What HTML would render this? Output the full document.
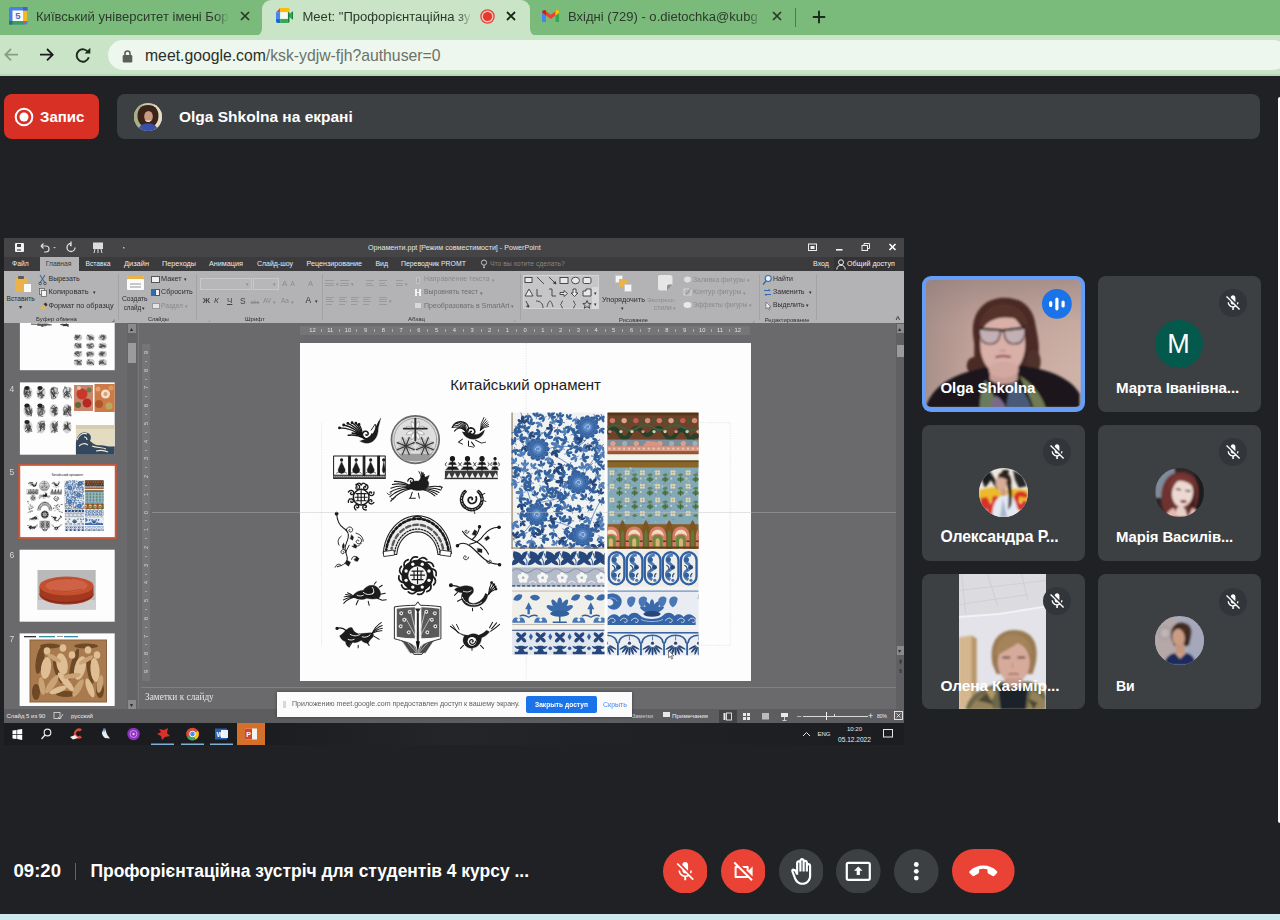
<!DOCTYPE html>
<html lang="uk">
<head>
<meta charset="utf-8">
<title>Meet</title>
<style>
*{box-sizing:border-box;margin:0;padding:0}
html,body{width:1280px;height:920px;overflow:hidden;background:#202124;font-family:"Liberation Sans",sans-serif}
.abs,.a{position:absolute}
#tabs{left:0;top:0;width:1280px;height:36px;background:#7aba7b}
#toolbar{left:0;top:35px;width:1280px;height:41px;background:#c9e4c6;border-bottom:2.5px solid #b7dab4}
#acttab{left:262px;top:0;width:268px;height:36px;background:#c9e4c6;border-radius:9px 9px 0 0}
.tabtxt{top:8px;font-size:13.05px;line-height:17px;color:#2c3a2c;white-space:nowrap;overflow:hidden}
#url{left:108px;top:40px;width:1180px;height:30px;border-radius:15px;background:#eef7ed}
#urltxt{left:145px;top:45.5px;font-size:15.75px;line-height:20px;color:#2a2f2a;white-space:nowrap}
#urltxt span{color:#6a726a}
#main{left:0;top:76px;width:1280px;height:837px;background:#202124}
#bottomstrip{left:0;top:914.3px;width:1280px;height:6px;background:#cde8ef}
#rightstrip{left:1278px;top:96.5px;width:3px;height:726.5px;background:#fff;border-radius:2px 0 0 2px}
#rec{left:4px;top:94px;width:95px;height:45px;border-radius:8px;background:#d93025}
#pill{left:117px;top:94px;width:1143px;height:45px;border-radius:8px;background:#3c4043}
.w{color:#fff;font-weight:bold;white-space:nowrap}
/* powerpoint */
#ppt{left:4px;top:238px;width:900px;height:507px;background:#6a696b;overflow:hidden}
#pptin{position:absolute;left:0;top:0;width:900px;height:507px;filter:blur(.45px)}
#ppt .a{white-space:nowrap}
.t6{font-size:6.6px;color:#2b2b2b;line-height:8px}
.t6w{font-size:6.6px;color:#e8e8e8;line-height:8px}
.t6g{font-size:6.6px;color:#8d8c8e;line-height:8px}
.tile{background:#3c4043;border-radius:8px;overflow:hidden}
.tname{color:#fff;font-weight:bold;font-size:14.5px;white-space:nowrap;letter-spacing:-0.1px}
.mic{width:28px;height:28px;border-radius:14px;background:#2f3235}
.cb{width:44px;height:44px;border-radius:22px}
</style>
</head>
<body>
<div class="abs" id="tabs"></div>
<div class="abs" id="toolbar"></div>
<div class="abs" id="acttab"></div>
<svg class="abs" style="left:254px;top:27px" width="284" height="9" viewBox="0 0 284 9"><path d="M0 9c5 0 8-3 8-8v8zM284 9c-5 0-8-3-8-8v8z" fill="#c9e4c6"/></svg>
<div class="abs tabtxt" style="left:36px;width:193px;-webkit-mask-image:linear-gradient(90deg,#000 180px,transparent 193px)">Київський університет імені Бор</div>
<div class="abs tabtxt" style="left:302.500px;width:170px;-webkit-mask-image:linear-gradient(90deg,#000 155px,transparent 169px)">Meet: "Профорієнтаційна зу</div>
<div class="abs tabtxt" style="left:568px;width:194px;-webkit-mask-image:linear-gradient(90deg,#000 180px,transparent 193px)">Вхідні (729) - o.dietochka@kubg</div>
<!-- calendar favicon -->
<svg class="abs" style="left:9px;top:7px" width="18.500" height="17.500" viewBox="0 0 18.500 17.500"><rect x="0" y="0" width="18.500" height="17.500" rx="1.500" fill="#4a80e4"/><rect x="14" y="3.500" width="4.500" height="10.500" fill="#f2b924"/><rect x="0" y="14" width="14" height="3.500" fill="#36a05c"/><path d="M14 14h4.500l-4.500 3.500z" fill="#e94c3c"/><rect x="0" y="14" width="3.500" height="3.500" fill="#2a7a48"/><rect x="14" y="0" width="4.500" height="3.500" fill="#3a68c4"/><rect x="3.500" y="3.500" width="10.500" height="10.500" fill="#fbfbfb"/><text x="8.800" y="12.300" font-size="9.500" font-weight="bold" fill="#4a70c0" text-anchor="middle" font-family="Liberation Sans,sans-serif">5</text></svg>
<!-- close x's -->
<svg class="abs" style="left:240px;top:11px" width="10" height="10" viewBox="0 0 10 10"><path d="M1 1l8 8M9 1l-8 8" stroke="#263826" stroke-width="1.700"/></svg>
<svg class="abs" style="left:506px;top:11px" width="10" height="10" viewBox="0 0 10 10"><path d="M1 1l8 8M9 1l-8 8" stroke="#1c241c" stroke-width="1.800"/></svg>
<svg class="abs" style="left:772px;top:11px" width="10" height="10" viewBox="0 0 10 10"><path d="M1 1l8 8M9 1l-8 8" stroke="#263826" stroke-width="1.700"/></svg>
<!-- meet favicon -->
<svg class="abs" style="left:275.500px;top:8px" width="17" height="15" viewBox="0 0 17 15"><path d="M0 4.200L4.200 0v4.200z" fill="#e94335"/><rect x="4.200" y="0" width="7.600" height="4.200" fill="#fbbc04"/><path d="M11.800 0c1 0 1.700.7 1.700 1.700v2.500h-1.700z" fill="#fbbc04"/><rect x="0" y="4.200" width="4.200" height="6.600" fill="#4285f4"/><path d="M0 10.800h4.200v4.200h-2.500c-1 0-1.700-.7-1.700-1.700z" fill="#1967d2"/><rect x="4.200" y="10.800" width="7.600" height="4.200" fill="#34a853"/><path d="M11.800 4.200h1.700v2l3-2.600c.3-.2.500-.1.500.3v7.200c0 .4-.2.500-.5.300l-3-2.600v4.500c0 1-.7 1.700-1.700 1.700z" fill="#188038"/><rect x="4.200" y="4.200" width="7.600" height="6.600" fill="#f4f9f2"/><path d="M13.500 6.200l2.500-2v6.600l-2.500-2z" fill="#34a853"/></svg>
<!-- rec dot -->
<svg class="abs" style="left:479.500px;top:8.500px" width="15" height="15" viewBox="0 0 15 15"><circle cx="7.500" cy="7.500" r="6.600" fill="#f2c9c0" stroke="#e0483a" stroke-width="1.300"/><circle cx="7.500" cy="7.500" r="4.600" fill="#e8382c"/></svg>
<!-- gmail favicon -->
<svg class="abs" style="left:541.500px;top:9.800px" width="17.500" height="12.500" viewBox="0 0 17.500 12.500"><path d="M0 2.500v8.500c0 .8.600 1.500 1.500 1.500h2.500V5.500z" fill="#4285f4"/><path d="M17.500 2.500v8.500c0 .8-.6 1.500-1.500 1.500h-2.500V5.500z" fill="#34a853"/><path d="M4 5.500V1.200l4.750 3.600 4.750-3.600v4.300l-4.750 3.600z" fill="#ea4335"/><path d="M0 2.500c0-2 2.200-3.100 3.700-1.900l.3.600v4.300l-4-3z" fill="#c5221f"/><path d="M17.500 2.500c0-2-2.200-3.100-3.700-1.900l-.3.600v4.300l4-3z" fill="#fbbc04"/></svg>
<div class="abs" style="left:795px;top:8px;width:1px;height:19px;background:#4c7a4c"></div>
<svg class="abs" style="left:812px;top:9.500px" width="14" height="14" viewBox="0 0 14 14"><path d="M7 .8v12.400M.8 7h12.400" stroke="#1c2a1c" stroke-width="1.900"/></svg>
<!-- nav -->
<svg class="abs" style="left:0;top:43px" width="100" height="24" viewBox="0 0 100 24" fill="none" stroke-width="1.800"><path d="M18 11.700H5.500M11 6l-5.700 5.700L11 17.400" stroke="#8a9c8a"/><path d="M40 11.700h12.500M47 6l5.700 5.700L47 17.400" stroke="#1c1c1c"/><path d="M88.300 9.500a6.200 6.200 0 1 0 .5 4.800" stroke="#1c2a1c" stroke-width="1.900"/><path d="M90.300 4.800v5.700h-5.700z" fill="#1c2a1c" stroke="none"/></svg>
<div class="abs" id="url"></div>
<svg class="abs" style="left:121.500px;top:49.500px" width="11" height="13" viewBox="0 0 11 13"><rect x=".7" y="5" width="9.600" height="7.500" rx="1.200" fill="#5a5f5a"/><path d="M3 5.500v-2a2.500 2.500 0 0 1 5 0v2" fill="none" stroke="#5a5f5a" stroke-width="1.600"/></svg>
<div class="abs" id="urltxt">meet.google.com<span>/ksk-ydjw-fjh?authuser=0</span></div>
<div class="abs" id="main"></div>
<div class="abs" id="bottomstrip"></div>
<div class="abs" id="rightstrip"></div>
<div class="abs" id="rec"></div>
<svg class="abs" style="left:14.200px;top:107.200px" width="20" height="20" viewBox="0 0 20 20"><circle cx="10" cy="10" r="8.300" fill="none" stroke="#fff" stroke-width="2"/><circle cx="10" cy="10" r="4.500" fill="#fff"/></svg>
<div class="abs w" style="left:40px;top:107.800px;font-size:15px;line-height:18px">Запис</div>
<div class="abs" id="pill"></div>
<svg class="abs" style="left:133.800px;top:102.700px;border-radius:50%" width="28" height="28" viewBox="0 0 28 28"><rect width="28" height="28" fill="#cfc6b0"/><rect x="0" y="0" width="9" height="28" fill="#a8b08a"/><rect x="20" y="0" width="8" height="28" fill="#e6dcc8"/><path d="M4 17c-2-9 2-15 10-15s12 6 10 15c-1 3-3 5-4 6H8c-1-1-3-3-4-6z" fill="#3a2418"/><ellipse cx="14.500" cy="13.500" rx="4.300" ry="5.600" fill="#c99a80"/><path d="M4 28c1-5 4-7 8-7.500h4c4 .5 7 2.500 8 7.500z" fill="#3a4fa8"/><path d="M11.500 17.500c1.500 1 3.500 1 5 0" stroke="#fff" stroke-width="1" fill="none"/></svg>
<div class="abs w" style="left:179px;top:107.700px;font-size:15.500px;line-height:18px">Olga Shkolna на екрані</div>
<div class="abs" id="ppt"><div id="pptin">
<div class="a" style="left:0.0px;top:0.0px;width:900.0px;height:19.0px;background:#454446;"></div>
<div class="a" style="left:0.0px;top:19.0px;width:900.0px;height:14.0px;background:#3b3a3c;"></div>
<div class="a" style="left:0.0px;top:33.0px;width:900.0px;height:52.0px;background:#b3b2b4;"></div>
<div class="a" style="left:10.5px;top:5.0px;width:9.0px;height:8.5px;background:#f2f2f2;border-radius:1px"></div>
<div class="a" style="left:12.8px;top:6.0px;width:4.5px;height:2.6px;background:#454446;"></div>
<div class="a" style="left:12.8px;top:10.6px;width:4.5px;height:2.9px;background:#8a898b;"></div>
<svg class="a" style="left:32px;top:3px" width="95" height="13" viewBox="0 0 95 13"><path d="M5 5h5a3 3 0 0 1 0 6h-2 M5 5l2.5-2.5M5 5l2.5 2.5" fill="none" stroke="#ddd" stroke-width="1.2"/><path d="M17 6l1.5 1.5L20 6z" fill="#bbb"/><path d="M39 6.5a4 4 0 1 1-4-4M35 0.5v4h-1" fill="none" stroke="#ddd" stroke-width="1.3"/><rect x="57" y="1.5" width="10" height="6.5" fill="#ddd"/><path d="M59 8l-1 4M65 8l1 4M62 8v4" stroke="#ddd" stroke-width="1"/><rect x="87" y="6" width="1.5" height="1.5" fill="#bbb"/></svg>
<div class="a" style="left:364.0px;top:4.5px;font-size:7.14px;line-height:10px;color:#e4e4e4;">Орнаменти.ppt [Режим совместимости] - PowerPoint</div>
<svg class="a" style="left:800px;top:3px" width="96" height="13" viewBox="0 0 96 13"><rect x="4.5" y="3" width="8" height="6.5" fill="none" stroke="#eee" stroke-width="1"/><rect x="6.5" y="5" width="4" height="3" fill="#eee"/><rect x="32" y="8" width="6.5" height="1.6" fill="#f4f4f4"/><rect x="58" y="4.5" width="5.5" height="5" fill="none" stroke="#eee" stroke-width="1"/><path d="M60 4.5v-2h5.5v5h-2" fill="none" stroke="#eee" stroke-width="1"/><path d="M85.5 3l6 6M91.5 3l-6 6" stroke="#fff" stroke-width="1.6"/></svg>
<div class="a" style="left:36.0px;top:19.0px;width:38.5px;height:14.0px;background:#b3b2b4;"></div>
<div class="a" style="left:8.0px;top:21.3px;font-size:6.75px;line-height:10px;color:#ececec;">Файл</div>
<div class="a" style="left:81.5px;top:21.3px;font-size:6.73px;line-height:10px;color:#ececec;">Вставка</div>
<div class="a" style="left:120.0px;top:21.3px;font-size:7.44px;line-height:10px;color:#ececec;">Дизайн</div>
<div class="a" style="left:158.0px;top:21.3px;font-size:7.25px;line-height:10px;color:#ececec;">Переходы</div>
<div class="a" style="left:205.0px;top:21.3px;font-size:7.24px;line-height:10px;color:#ececec;">Анимация</div>
<div class="a" style="left:253.0px;top:21.3px;font-size:6.94px;line-height:10px;color:#ececec;">Слайд-шоу</div>
<div class="a" style="left:302.5px;top:21.3px;font-size:7.19px;line-height:10px;color:#ececec;">Рецензирование</div>
<div class="a" style="left:371.5px;top:21.3px;font-size:6.91px;line-height:10px;color:#ececec;">Вид</div>
<div class="a" style="left:397.0px;top:21.3px;font-size:6.89px;line-height:10px;color:#ececec;">Переводчик PROMT</div>
<div class="a" style="left:41.7px;top:21.3px;font-size:6.78px;line-height:10px;color:#3a3a3a;">Главная</div>
<div class="a" style="left:486.0px;top:21.3px;font-size:6.78px;line-height:10px;color:#858486;">Что вы хотите сделать?</div>
<svg class="a" style="left:476px;top:21px" width="8" height="11" viewBox="0 0 8 11"><circle cx="4" cy="3.6" r="2.6" fill="none" stroke="#cfcfcf" stroke-width="0.9"/><path d="M3 7h2M3 8.6h2" stroke="#cfcfcf" stroke-width="0.9"/></svg>
<div class="a" style="left:809.0px;top:21.3px;font-size:7.07px;line-height:10px;color:#ececec;">Вход</div>
<div class="a" style="left:829.5px;top:19.0px;width:70.5px;height:14.0px;background:#333234;"></div>
<svg class="a" style="left:832px;top:20.5px" width="10" height="11" viewBox="0 0 10 11"><circle cx="5" cy="3.3" r="2.5" fill="none" stroke="#f0f0f0" stroke-width="1"/><path d="M0.8 10.5c0-3 2-4.3 4.2-4.3s4.2 1.300 4.200 4.300" fill="none" stroke="#f0f0f0" stroke-width="1"/></svg>
<div class="a" style="left:843.0px;top:21.3px;font-size:7.14px;line-height:10px;color:#f4f4f4;">Общий доступ</div>
<div class="a" style="left:114.0px;top:36.0px;width:1.0px;height:46.0px;background:#a3a2a4;"></div>
<div class="a" style="left:192.4px;top:36.0px;width:1.0px;height:46.0px;background:#a3a2a4;"></div>
<div class="a" style="left:317.5px;top:36.0px;width:1.0px;height:46.0px;background:#a3a2a4;"></div>
<div class="a" style="left:516.0px;top:36.0px;width:1.0px;height:46.0px;background:#a3a2a4;"></div>
<div class="a" style="left:754.6px;top:36.0px;width:1.0px;height:46.0px;background:#a3a2a4;"></div>
<div class="a" style="left:812.0px;top:36.0px;width:1.0px;height:46.0px;background:#a3a2a4;"></div>
<div class="a" style="left:11.0px;top:39.5px;width:11.5px;height:14.0px;background:#e9b34a;border-radius:1.5px"></div>
<div class="a" style="left:14.0px;top:37.5px;width:5.5px;height:3.0px;background:#5a5a5a;border-radius:1px"></div>
<div class="a" style="left:19.5px;top:45.5px;width:7.0px;height:8.5px;background:#fafafa;"></div>
<div class="a" style="left:2.5px;top:55.8px;font-size:6.65px;line-height:10px;color:#2e2d2f;">Вставить</div>
<div class="a" style="left:14.5px;top:63.5px;font-size:6px;line-height:10px;color:#2e2d2f;">▾</div>
<svg class="a" style="left:34px;top:36px" width="11" height="38" viewBox="0 0 11 38"><path d="M2 1l5 8M7 1l-5 8" stroke="#3a6ea5" stroke-width="1.1"/><circle cx="2.200" cy="9.500" r="1.300" fill="none" stroke="#444" stroke-width=".8"/><circle cx="7" cy="9.500" r="1.300" fill="none" stroke="#444" stroke-width=".8"/><rect x="1.500" y="14.500" width="5" height="6" fill="#e6e6e6" stroke="#555" stroke-width=".7"/><rect x="3.500" y="16.500" width="5" height="6" fill="#f4f4f4" stroke="#555" stroke-width=".7"/><path d="M2 35l4-4 2 2-3 3z" fill="#e9b34a"/><path d="M5.500 30l2.500-1.500 1.500 2.500-1.500 1.500z" fill="#333"/></svg>
<div class="a" style="left:44.5px;top:36.4px;font-size:7.02px;line-height:10px;color:#2e2d2f;">Вырезать</div>
<div class="a" style="left:44.5px;top:49.2px;font-size:7.45px;line-height:10px;color:#2e2d2f;">Копировать</div>
<div class="a" style="left:88.5px;top:49.2px;font-size:5px;line-height:10px;color:#2e2d2f;">▾</div>
<div class="a" style="left:44.5px;top:62.6px;font-size:7.27px;line-height:10px;color:#2e2d2f;">Формат по образцу</div>
<div class="a" style="left:32.0px;top:75.5px;font-size:6.03px;line-height:10px;color:#2e2d2f;">Буфер обмена</div>
<div class="a" style="left:108.0px;top:75.8px;font-size:6px;line-height:10px;color:#2e2d2f;">⌟</div>
<div class="a" style="left:123.0px;top:38.0px;width:16.5px;height:13.5px;background:#fbfbfb;border-radius:1px;box-shadow:inset 0 3px 0 #e9b34a"></div>
<div class="a" style="left:125.5px;top:45.0px;width:11.5px;height:1.5px;background:#c8c8c8;"></div>
<div class="a" style="left:125.5px;top:48.0px;width:11.5px;height:1.5px;background:#c8c8c8;"></div>
<div class="a" style="left:118.0px;top:55.8px;font-size:6.74px;line-height:10px;color:#2e2d2f;">Создать</div>
<div class="a" style="left:119.7px;top:64.5px;font-size:6.29px;line-height:10px;color:#2e2d2f;">слайд</div>
<div class="a" style="left:138.0px;top:64.5px;font-size:5px;line-height:10px;color:#2e2d2f;">▾</div>
<div class="a" style="left:147.0px;top:38.0px;width:9.0px;height:7.0px;background:#f0f0f0;border:0.8px solid #555"></div>
<div class="a" style="left:147.0px;top:51.0px;width:4.0px;height:7.0px;background:#2f6db0;"></div>
<div class="a" style="left:151.0px;top:50.5px;width:5.0px;height:7.0px;background:#f0f0f0;border:0.8px solid #555"></div>
<div class="a" style="left:148.0px;top:64.5px;width:8.0px;height:6.0px;background:#e4e4e4;border:0.8px solid #999"></div>
<div class="a" style="left:157.0px;top:36.4px;font-size:7.28px;line-height:10px;color:#2e2d2f;">Макет</div>
<div class="a" style="left:180.0px;top:36.4px;font-size:5px;line-height:10px;color:#2e2d2f;">▾</div>
<div class="a" style="left:157.0px;top:49.2px;font-size:7.11px;line-height:10px;color:#2e2d2f;">Сбросить</div>
<div class="a" style="left:157.0px;top:62.6px;font-size:6.66px;line-height:10px;color:#8b8a8c;">Раздел</div>
<div class="a" style="left:181.0px;top:62.6px;font-size:5px;line-height:10px;color:#8b8a8c;">▾</div>
<div class="a" style="left:144.0px;top:75.5px;font-size:5.56px;line-height:10px;color:#2e2d2f;">Слайды</div>
<div class="a" style="left:195.7px;top:40.0px;width:52.5px;height:11.5px;background:#b7b6b8;border:0.8px solid #c9c8ca"></div>
<div class="a" style="left:249.0px;top:40.0px;width:26.0px;height:11.5px;background:#b7b6b8;border:0.8px solid #c9c8ca"></div>
<div class="a" style="left:242.0px;top:41.0px;font-size:5px;line-height:10px;color:#8b8a8c;">▾</div>
<div class="a" style="left:269.0px;top:41.0px;font-size:5px;line-height:10px;color:#8b8a8c;">▾</div>
<div class="a" style="left:278.0px;top:40.5px;font-size:8px;line-height:10px;color:#8b8a8c;">A</div>
<div class="a" style="left:286.5px;top:41.0px;font-size:6.5px;line-height:10px;color:#8b8a8c;">A</div>
<div class="a" style="left:304.0px;top:40.5px;font-size:7.5px;line-height:10px;color:#8b8a8c;">A</div>
<div class="a" style="left:198.7px;top:58.0px;font-size:8px;line-height:10px;color:#444;font-weight:bold;">Ж</div>
<div class="a" style="left:210.0px;top:58.0px;font-size:8px;line-height:10px;color:#444;font-style:italic;">К</div>
<div class="a" style="left:223.0px;top:58.0px;font-size:8px;line-height:10px;color:#444;text-decoration:underline;">Ч</div>
<div class="a" style="left:236.0px;top:58.0px;font-size:8.5px;line-height:10px;color:#444;">S</div>
<div class="a" style="left:246.5px;top:58.5px;font-size:5.5px;line-height:10px;color:#8b8a8c;text-decoration:line-through;">abc</div>
<div class="a" style="left:259.0px;top:58.0px;font-size:6.5px;line-height:10px;color:#8b8a8c;">AV</div>
<div class="a" style="left:269.0px;top:58.5px;font-size:5px;line-height:10px;color:#8b8a8c;">▾</div>
<div class="a" style="left:277.0px;top:58.0px;font-size:6.5px;line-height:10px;color:#8b8a8c;">Aa</div>
<div class="a" style="left:287.0px;top:58.5px;font-size:5px;line-height:10px;color:#8b8a8c;">▾</div>
<div class="a" style="left:301.5px;top:57.4px;font-size:8.5px;line-height:10px;color:#333;">A</div>
<div class="a" style="left:311.0px;top:58.0px;font-size:5px;line-height:10px;color:#2e2d2f;">▾</div>
<div class="a" style="left:241.0px;top:75.5px;font-size:6.08px;line-height:10px;color:#2e2d2f;">Шрифт</div>
<div class="a" style="left:204.0px;top:75.8px;font-size:6px;line-height:10px;color:#8b8a8c;">⌟</div>
<div class="a" style="left:321.0px;top:42.0px;width:9.0px;height:1.0px;background:#9a999b;"></div>
<div class="a" style="left:321.0px;top:44.6px;width:9.0px;height:1.0px;background:#9a999b;"></div>
<div class="a" style="left:321.0px;top:47.2px;width:9.0px;height:1.0px;background:#9a999b;"></div>
<div class="a" style="left:336.0px;top:42.0px;width:9.0px;height:1.0px;background:#9a999b;"></div>
<div class="a" style="left:336.0px;top:44.6px;width:9.0px;height:1.0px;background:#9a999b;"></div>
<div class="a" style="left:336.0px;top:47.2px;width:9.0px;height:1.0px;background:#9a999b;"></div>
<div class="a" style="left:331.5px;top:40.5px;font-size:5px;line-height:10px;color:#8b8a8c;">▾</div>
<div class="a" style="left:347.0px;top:40.5px;font-size:5px;line-height:10px;color:#8b8a8c;">▾</div>
<div class="a" style="left:362.0px;top:42.0px;width:8.0px;height:1.0px;background:#9a999b;"></div>
<div class="a" style="left:362.0px;top:44.6px;width:6.0px;height:1.0px;background:#9a999b;"></div>
<div class="a" style="left:362.0px;top:47.2px;width:8.0px;height:1.0px;background:#9a999b;"></div>
<div class="a" style="left:375.0px;top:42.0px;width:8.0px;height:1.0px;background:#9a999b;"></div>
<div class="a" style="left:375.0px;top:44.6px;width:6.0px;height:1.0px;background:#9a999b;"></div>
<div class="a" style="left:375.0px;top:47.2px;width:8.0px;height:1.0px;background:#9a999b;"></div>
<div class="a" style="left:392.0px;top:42.0px;width:7.0px;height:1.0px;background:#9a999b;"></div>
<div class="a" style="left:392.0px;top:44.6px;width:7.0px;height:1.0px;background:#9a999b;"></div>
<div class="a" style="left:392.0px;top:47.2px;width:7.0px;height:1.0px;background:#9a999b;"></div>
<div class="a" style="left:401.0px;top:40.5px;font-size:5px;line-height:10px;color:#8b8a8c;">▾</div>
<div class="a" style="left:322.0px;top:59.0px;width:8.0px;height:1.0px;background:#9a999b;"></div>
<div class="a" style="left:322.0px;top:61.2px;width:6.0px;height:1.0px;background:#9a999b;"></div>
<div class="a" style="left:322.0px;top:63.4px;width:8.0px;height:1.0px;background:#9a999b;"></div>
<div class="a" style="left:322.0px;top:65.6px;width:6.0px;height:1.0px;background:#9a999b;"></div>
<div class="a" style="left:334.5px;top:59.0px;width:8.0px;height:1.0px;background:#9a999b;"></div>
<div class="a" style="left:334.5px;top:61.2px;width:6.0px;height:1.0px;background:#9a999b;"></div>
<div class="a" style="left:334.5px;top:63.4px;width:8.0px;height:1.0px;background:#9a999b;"></div>
<div class="a" style="left:334.5px;top:65.6px;width:6.0px;height:1.0px;background:#9a999b;"></div>
<div class="a" style="left:347.0px;top:59.0px;width:8.0px;height:1.0px;background:#9a999b;"></div>
<div class="a" style="left:347.0px;top:61.2px;width:6.0px;height:1.0px;background:#9a999b;"></div>
<div class="a" style="left:347.0px;top:63.4px;width:8.0px;height:1.0px;background:#9a999b;"></div>
<div class="a" style="left:347.0px;top:65.6px;width:6.0px;height:1.0px;background:#9a999b;"></div>
<div class="a" style="left:359.0px;top:59.0px;width:8.0px;height:1.0px;background:#9a999b;"></div>
<div class="a" style="left:359.0px;top:61.2px;width:6.0px;height:1.0px;background:#9a999b;"></div>
<div class="a" style="left:359.0px;top:63.4px;width:8.0px;height:1.0px;background:#9a999b;"></div>
<div class="a" style="left:359.0px;top:65.6px;width:6.0px;height:1.0px;background:#9a999b;"></div>
<div class="a" style="left:375.0px;top:59.0px;width:8.0px;height:1.0px;background:#9a999b;"></div>
<div class="a" style="left:375.0px;top:61.2px;width:8.0px;height:1.0px;background:#9a999b;"></div>
<div class="a" style="left:375.0px;top:63.4px;width:8.0px;height:1.0px;background:#9a999b;"></div>
<div class="a" style="left:375.0px;top:65.6px;width:8.0px;height:1.0px;background:#9a999b;"></div>
<div class="a" style="left:384.5px;top:57.5px;font-size:5px;line-height:10px;color:#8b8a8c;">▾</div>
<div class="a" style="left:411.5px;top:39.0px;width:4.0px;height:7.0px;background:#a9a8aa;border:0.7px solid #c3c2c4"></div>
<div class="a" style="left:410.5px;top:51.0px;width:2.5px;height:6.5px;background:#f1f1f1;"></div>
<div class="a" style="left:414.5px;top:51.0px;width:2.5px;height:6.5px;background:#f1f1f1;"></div>
<div class="a" style="left:411.0px;top:53.5px;width:5.5px;height:1.5px;background:#f1f1f1;"></div>
<div class="a" style="left:411.0px;top:65.0px;width:6.0px;height:5.0px;background:#d8d8d8;"></div>
<div class="a" style="left:420.0px;top:36.4px;font-size:6.92px;line-height:10px;color:#8b8a8c;">Направление текста</div>
<div class="a" style="left:487.5px;top:36.8px;font-size:5px;line-height:10px;color:#8b8a8c;">▾</div>
<div class="a" style="left:420.0px;top:49.2px;font-size:6.93px;line-height:10px;color:#6f6e70;">Выровнять текст</div>
<div class="a" style="left:475.5px;top:49.6px;font-size:5px;line-height:10px;color:#6f6e70;">▾</div>
<div class="a" style="left:420.0px;top:62.6px;font-size:7.05px;line-height:10px;color:#6f6e70;">Преобразовать в SmartArt</div>
<div class="a" style="left:507.0px;top:63.0px;font-size:5px;line-height:10px;color:#6f6e70;">▾</div>
<div class="a" style="left:404.0px;top:75.5px;font-size:6.06px;line-height:10px;color:#2e2d2f;">Абзац</div>
<div class="a" style="left:509.0px;top:75.8px;font-size:6px;line-height:10px;color:#8b8a8c;">⌟</div>
<div class="a" style="left:518.6px;top:36.7px;width:76.4px;height:34.5px;background:#c6c5c7;border:0.8px solid #d4d3d5"></div>
<div class="a" style="left:588.0px;top:49.0px;width:7.0px;height:10.5px;background:#d9d8da;"></div>
<div class="a" style="left:588.0px;top:60.0px;width:7.0px;height:10.5px;background:#d9d8da;"></div>
<div class="a" style="left:590.0px;top:49.5px;font-size:5px;line-height:10px;color:#333;">▾</div>
<div class="a" style="left:590.0px;top:61.0px;font-size:5px;line-height:10px;color:#333;">▾</div>
<svg class="a" style="left:519px;top:37px" width="70" height="34" viewBox="0 0 70 34" fill="none" stroke="#3c3b3d" stroke-width="0.9"><rect x="2" y="2.500" width="7" height="5" fill="#e9e9e9"/><path d="M14 2l7 7M26 2l7 7"/><path d="M33 9l-2.500-.8 1.700-1.700z" fill="#3c3b3d"/><rect x="37" y="2.500" width="8" height="6" fill="#e9e9e9"/><ellipse cx="52.500" cy="5.500" rx="4" ry="3.300" fill="#e9e9e9"/><rect x="60" y="2.500" width="8" height="6" rx="1.500" fill="#e9e9e9"/><path d="M2 21l4-7 4 7z" fill="#e9e9e9"/><path d="M14 14v7h5M26 14h3v7h4"/><path d="M37 17.500h4v-2l3.500 3-3.500 3v-2h-4z" fill="#e9e9e9"/><path d="M50 14h3v4h2l-3.500 3.500L48 18h2z" fill="#e9e9e9"/><path d="M60 21v-5h3v-2h5v7z" fill="#e9e9e9"/><path d="M3 26l3 6M6 32l-2.500-.5 1.800-1.500z"/><path d="M13 26c5 0 7 3 7 7M24 32c2-8 4-8 6 0"/><path d="M40 26c-2 0-1 3-2.500 3.500 1.500.5.5 3.500 2.500 3.500M50 26c2 0 1 3 2.500 3.500-1.500.5-.5 3.500-2.500 3.500"/><path d="M64 25.500l1.200 2.800 3 .2-2.300 1.900.8 2.900-2.700-1.600-2.700 1.600.8-2.900-2.300-1.900 3-.2z"/></svg>
<div class="a" style="left:611.0px;top:37.0px;width:8.0px;height:8.0px;background:#f5f5f5;border:0.7px solid #c9c9c9"></div>
<div class="a" style="left:615.0px;top:41.0px;width:8.0px;height:8.0px;background:#e9b34a;"></div>
<div class="a" style="left:620.0px;top:46.0px;width:7.5px;height:7.5px;background:#f5f5f5;border:0.7px solid #c9c9c9"></div>
<div class="a" style="left:598.0px;top:56.5px;font-size:7.23px;line-height:10px;color:#2e2d2f;">Упорядочить</div>
<div class="a" style="left:617.0px;top:65.0px;font-size:5px;line-height:10px;color:#2e2d2f;">▾</div>
<svg class="a" style="left:652px;top:36px" width="18" height="18" viewBox="0 0 18 18"><path d="M2 2.500c0-1 1-1.500 2-1.500h10c1.500 0 2.500 1 2.500 2.500v7l-5.500 6H4c-1.200 0-2-.8-2-2z" fill="#e6e6e6"/><path d="M16.500 10.500l-5.500 6v-4c0-1.200.8-2 2-2z" fill="#8f8e90"/></svg>
<div class="a" style="left:643.0px;top:56.5px;font-size:6.23px;line-height:10px;color:#8b8a8c;">Экспресс-</div>
<div class="a" style="left:649.8px;top:65.0px;font-size:6.77px;line-height:10px;color:#8b8a8c;">стили</div>
<div class="a" style="left:669.0px;top:65.0px;font-size:5px;line-height:10px;color:#8b8a8c;">▾</div>
<svg class="a" style="left:678px;top:36px" width="11" height="38" viewBox="0 0 11 38"><ellipse cx="5.500" cy="5.500" rx="3.500" ry="3" fill="#dedede"/><rect x="2" y="15" width="7" height="6" fill="none" stroke="#dcdcdc" stroke-width=".9"/><path d="M4 21l5-7" stroke="#8f8e90" stroke-width="1"/><ellipse cx="5.500" cy="31" rx="4" ry="3" fill="#e9e9e9"/></svg>
<div class="a" style="left:689.0px;top:36.6px;font-size:6.81px;line-height:10px;color:#8b8a8c;">Заливка фигуры</div>
<div class="a" style="left:742.5px;top:37.0px;font-size:5px;line-height:10px;color:#8b8a8c;">▾</div>
<div class="a" style="left:689.0px;top:49.2px;font-size:6.94px;line-height:10px;color:#8b8a8c;">Контур фигуры</div>
<div class="a" style="left:739.0px;top:49.6px;font-size:5px;line-height:10px;color:#8b8a8c;">▾</div>
<div class="a" style="left:689.0px;top:62.0px;font-size:6.54px;line-height:10px;color:#8b8a8c;">Эффекты фигуры</div>
<div class="a" style="left:745.0px;top:62.4px;font-size:5px;line-height:10px;color:#8b8a8c;">▾</div>
<div class="a" style="left:615.0px;top:76.5px;font-size:5.76px;line-height:10px;color:#2e2d2f;">Рисование</div>
<div class="a" style="left:748.0px;top:76.5px;font-size:6px;line-height:10px;color:#8b8a8c;">⌟</div>
<svg class="a" style="left:758px;top:36px" width="11" height="38" viewBox="0 0 11 38"><circle cx="6.200" cy="4.500" r="3" fill="#eaf2fb" stroke="#2f6db0" stroke-width="1.100"/><path d="M4 7l-3 3.500" stroke="#2f6db0" stroke-width="1.300"/><path d="M2 16.500h6l-1.500-1.500M9 20.500H3l1.500 1.500" fill="none" stroke="#2f6db0" stroke-width="1"/><path d="M4 28v7l1.800-1.500 1.200 2.500 1-.5-1.200-2.400h2.200z" fill="#f5f5f5" stroke="#555" stroke-width=".6"/></svg>
<div class="a" style="left:769.0px;top:36.0px;font-size:7.01px;line-height:10px;color:#2e2d2f;">Найти</div>
<div class="a" style="left:769.0px;top:49.0px;font-size:7.03px;line-height:10px;color:#2e2d2f;">Заменить</div>
<div class="a" style="left:805.0px;top:49.0px;font-size:5px;line-height:10px;color:#2e2d2f;">▾</div>
<div class="a" style="left:769.0px;top:62.0px;font-size:6.83px;line-height:10px;color:#2e2d2f;">Выделить</div>
<div class="a" style="left:802.0px;top:62.4px;font-size:5px;line-height:10px;color:#2e2d2f;">▾</div>
<div class="a" style="left:760.7px;top:76.5px;font-size:5.88px;line-height:10px;color:#2e2d2f;">Редактирование</div>
<div class="a" style="left:891.5px;top:76.5px;font-size:8px;line-height:10px;color:#333;font-weight:bold;">^</div>
<svg class="a" style="left:295.7px;top:104.8px" width="451.3" height="338.4" viewBox="300 343 450 338" preserveAspectRatio="none">
<defs><filter id="ob" x="-5%" y="-5%" width="110%" height="110%"><feGaussianBlur stdDeviation=".28"/></filter></defs>
<g id="slideAll">
<rect x="300" y="343" width="450" height="338" fill="#fdfdfd"/>
<g stroke="#d2d2d2" stroke-width=".7" stroke-dasharray="1 1.500" fill="none"><path d="M300 512.300H750M525.500 343V681M321.500 422V645M697 422.500H729V645H697"/></g>
<text x="525" y="390.300" text-anchor="middle" font-family="Liberation Sans,sans-serif" font-size="15" fill="#1c1c1c">Китайський орнамент</text>
<g fill="#1a1a1a" stroke="#1a1a1a" stroke-linecap="round" stroke-linejoin="round" filter="url(#ob)">
<path d="M362.0 436.0Q351.5 428.0 339.4 427.8" stroke-width="1.3" fill="none" />
<circle cx="339.4" cy="427.8" r="0.9" />
<path d="M362.0 436.0Q354.1 427.1 343.5 424.9" stroke-width="1.3" fill="none" />
<circle cx="343.5" cy="424.9" r="0.9" />
<path d="M362.0 436.0Q356.6 426.9 347.7 423.2" stroke-width="1.3" fill="none" />
<circle cx="347.7" cy="423.2" r="0.9" />
<path d="M362.0 436.0Q358.9 427.3 351.9 422.6" stroke-width="1.3" fill="none" />
<circle cx="351.9" cy="422.6" r="0.9" />
<path d="M362.0 436.0Q360.8 428.2 355.7 423.1" stroke-width="1.3" fill="none" />
<circle cx="355.7" cy="423.1" r="0.9" />
<path d="M362.0 436.0Q362.3 429.4 358.9 424.4" stroke-width="1.3" fill="none" />
<circle cx="358.9" cy="424.4" r="0.9" />
<path d="M364.0 438.0Q356.2 434.0 348.2 435.2" stroke-width="1.6" fill="none" />
<path d="M364.0 438.0Q358.5 433.4 352.0 433.0" stroke-width="1.6" fill="none" />
<path d="M364.0 438.0Q360.6 433.7 355.8 432.3" stroke-width="1.6" fill="none" />
<path d="M371.5 434.0L371.0 435.8L369.9 437.3L368.4 438.3L366.7 438.6L365.1 438.4L363.7 437.6L362.8 436.5L362.3 435.1L362.3 433.8L362.8 432.6L363.6 431.7L364.7 431.2L365.7 431.2L366.7 431.4L367.4 432.0L367.9 432.7L368.0 433.5L367.8 434.2L367.5 434.7L367.0 435.0L366.5 435.1L366.0 435.0L365.7 434.8" stroke-width="1.5" fill="none" />
<path d="M360 441c4 3 10 3 14-1 3-3 4-7 4-12l2.500-10-5 9c-1 4-3 8-7 10-3 2-6 3-8.500 4z" stroke-width="0.3"  />
<path d="M371 430l4-6 1 4 3-7" stroke-width="0.9" fill="none" />
<circle cx="415" cy="439.5" r="23.800" fill="#dedede" stroke="#6a6a6a" stroke-width="1.700"/>
<circle cx="415" cy="439.5" r="21.300" fill="none" stroke="#8a8a8a" stroke-width=".7"/>
<path d="M398 453.5h34l-6 7h-22z" fill="#9a9a9a" stroke-width="0"/>
<ellipse cx="420.5" cy="432.8" rx="3.600" ry="1.700" transform="rotate(22 420.5 432.8)" fill="#f4f4f4" stroke="#8a8a8a" stroke-width=".5"/>
<ellipse cx="417.3" cy="436.0" rx="3.600" ry="1.700" transform="rotate(68 417.3 436.0)" fill="#f4f4f4" stroke="#8a8a8a" stroke-width=".5"/>
<ellipse cx="412.7" cy="436.0" rx="3.600" ry="1.700" transform="rotate(112 412.7 436.0)" fill="#f4f4f4" stroke="#8a8a8a" stroke-width=".5"/>
<ellipse cx="409.5" cy="432.8" rx="3.600" ry="1.700" transform="rotate(158 409.5 432.8)" fill="#f4f4f4" stroke="#8a8a8a" stroke-width=".5"/>
<ellipse cx="409.5" cy="428.2" rx="3.600" ry="1.700" transform="rotate(202 409.5 428.2)" fill="#f4f4f4" stroke="#8a8a8a" stroke-width=".5"/>
<ellipse cx="412.7" cy="425.0" rx="3.600" ry="1.700" transform="rotate(247 412.7 425.0)" fill="#f4f4f4" stroke="#8a8a8a" stroke-width=".5"/>
<ellipse cx="417.3" cy="425.0" rx="3.600" ry="1.700" transform="rotate(292 417.3 425.0)" fill="#f4f4f4" stroke="#8a8a8a" stroke-width=".5"/>
<ellipse cx="420.5" cy="428.2" rx="3.600" ry="1.700" transform="rotate(338 420.5 428.2)" fill="#f4f4f4" stroke="#8a8a8a" stroke-width=".5"/>
<ellipse cx="411.0" cy="448.3" rx="3.600" ry="1.700" transform="rotate(22 411.0 448.3)" fill="#f4f4f4" stroke="#8a8a8a" stroke-width=".5"/>
<ellipse cx="407.8" cy="451.5" rx="3.600" ry="1.700" transform="rotate(68 407.8 451.5)" fill="#f4f4f4" stroke="#8a8a8a" stroke-width=".5"/>
<ellipse cx="403.2" cy="451.5" rx="3.600" ry="1.700" transform="rotate(112 403.2 451.5)" fill="#f4f4f4" stroke="#8a8a8a" stroke-width=".5"/>
<ellipse cx="400.0" cy="448.3" rx="3.600" ry="1.700" transform="rotate(158 400.0 448.3)" fill="#f4f4f4" stroke="#8a8a8a" stroke-width=".5"/>
<ellipse cx="400.0" cy="443.7" rx="3.600" ry="1.700" transform="rotate(202 400.0 443.7)" fill="#f4f4f4" stroke="#8a8a8a" stroke-width=".5"/>
<ellipse cx="403.2" cy="440.5" rx="3.600" ry="1.700" transform="rotate(247 403.2 440.5)" fill="#f4f4f4" stroke="#8a8a8a" stroke-width=".5"/>
<ellipse cx="407.8" cy="440.5" rx="3.600" ry="1.700" transform="rotate(292 407.8 440.5)" fill="#f4f4f4" stroke="#8a8a8a" stroke-width=".5"/>
<ellipse cx="411.0" cy="443.7" rx="3.600" ry="1.700" transform="rotate(338 411.0 443.7)" fill="#f4f4f4" stroke="#8a8a8a" stroke-width=".5"/>
<ellipse cx="430.0" cy="448.3" rx="3.600" ry="1.700" transform="rotate(22 430.0 448.3)" fill="#f4f4f4" stroke="#8a8a8a" stroke-width=".5"/>
<ellipse cx="426.8" cy="451.5" rx="3.600" ry="1.700" transform="rotate(68 426.8 451.5)" fill="#f4f4f4" stroke="#8a8a8a" stroke-width=".5"/>
<ellipse cx="422.2" cy="451.5" rx="3.600" ry="1.700" transform="rotate(112 422.2 451.5)" fill="#f4f4f4" stroke="#8a8a8a" stroke-width=".5"/>
<ellipse cx="419.0" cy="448.3" rx="3.600" ry="1.700" transform="rotate(158 419.0 448.3)" fill="#f4f4f4" stroke="#8a8a8a" stroke-width=".5"/>
<ellipse cx="419.0" cy="443.7" rx="3.600" ry="1.700" transform="rotate(202 419.0 443.7)" fill="#f4f4f4" stroke="#8a8a8a" stroke-width=".5"/>
<ellipse cx="422.2" cy="440.5" rx="3.600" ry="1.700" transform="rotate(247 422.2 440.5)" fill="#f4f4f4" stroke="#8a8a8a" stroke-width=".5"/>
<ellipse cx="426.8" cy="440.5" rx="3.600" ry="1.700" transform="rotate(292 426.8 440.5)" fill="#f4f4f4" stroke="#8a8a8a" stroke-width=".5"/>
<ellipse cx="430.0" cy="443.7" rx="3.600" ry="1.700" transform="rotate(338 430.0 443.7)" fill="#f4f4f4" stroke="#8a8a8a" stroke-width=".5"/>
<path d="M415 418.5V440.5M403.5 428.5H426.5" stroke="#2a2a2a" stroke-width="1.900" fill="none"/>
<path d="M397.2 442.6L413.8 449.4" stroke="#3a3a3a" stroke-width="1.3" fill="none"/>
<path d="M402.1 437.7L408.9 454.3" stroke="#3a3a3a" stroke-width="1.3" fill="none"/>
<path d="M408.9 437.7L402.1 454.3" stroke="#3a3a3a" stroke-width="1.3" fill="none"/>
<path d="M413.8 442.6L397.2 449.4" stroke="#3a3a3a" stroke-width="1.3" fill="none"/>
<path d="M416.2 442.6L432.8 449.4" stroke="#3a3a3a" stroke-width="1.3" fill="none"/>
<path d="M421.1 437.7L427.9 454.3" stroke="#3a3a3a" stroke-width="1.3" fill="none"/>
<path d="M427.9 437.7L421.1 454.3" stroke="#3a3a3a" stroke-width="1.3" fill="none"/>
<path d="M432.8 442.6L416.2 449.4" stroke="#3a3a3a" stroke-width="1.3" fill="none"/>
<path d="M465.0 431.0Q459.4 425.7 451.5 427.4" stroke-width="1" fill="none" />
<path d="M465.0 431.0Q461.1 425.0 453.5 424.9" stroke-width="1" fill="none" />
<path d="M465.0 431.0Q462.7 424.8 455.9 423.1" stroke-width="1" fill="none" />
<path d="M465.0 431.0Q464.2 425.0 458.5 422.1" stroke-width="1" fill="none" />
<path d="M465.0 431.0Q465.5 425.5 461.1 421.8" stroke-width="1" fill="none" />
<path d="M465.0 431.0Q466.6 426.3 463.4 422.1" stroke-width="1" fill="none" />
<path d="M452 427c2-5 8-7 13-4 3 2 4 6 2 9" stroke-width="1.2" fill="none" />
<path d="M454 431c2-3 6-4 9-2" stroke-width="1" fill="none" />
<path d="M466.0 432.0L466.5 430.3L467.5 429.0L468.9 428.1L470.4 427.8L471.9 428.1L473.1 428.8L473.9 429.9L474.3 431.1L474.2 432.3L473.7 433.3L472.9 434.0L472.0 434.4L471.1 434.4L470.3 434.1L469.8 433.5L469.5 432.9L469.5 432.3L469.7 431.8L470.0 431.4L470.4 431.3L470.8 431.3" stroke-width="1.6" fill="none" />
<path d="M462 432c2 5 7 8 13 7 5-1 8-4 9-9l-4 3c-3 2-7 2-10 0-3-1-6-1-8-1z" stroke-width="0.3"  />
<path d="M480.0 430.0Q479.7 422.9 483.4 417.4" stroke-width="0.9" fill="none" />
<path d="M480.0 430.0Q480.9 423.4 485.2 418.9" stroke-width="0.9" fill="none" />
<path d="M480.0 430.0Q481.9 424.0 486.5 420.7" stroke-width="0.9" fill="none" />
<path d="M480.0 430.0Q482.7 424.8 487.5 422.5" stroke-width="0.9" fill="none" />
<path d="M480.0 430.0Q483.3 425.7 488.0 424.4" stroke-width="0.9" fill="none" />
<path d="M480.0 430.0Q483.7 426.7 488.2 426.2" stroke-width="0.9" fill="none" />
<path d="M462 439l-4 3 4 2M468 441l0 5 5 1M475 440l6 3 4-1M471 442l3 4" stroke-width="1" fill="none" />
<rect x="333.500" y="455.800" width="51.500" height="22.500" fill="#fdfdfd" stroke-width="1"/>
<rect x="333.500" y="474.500" width="51.500" height="3.800" fill="#4a4a4a" stroke-width="0"/>
<path d="M334 476.500h51" stroke-width="0.7" fill="none" stroke="#ddd" stroke-dasharray="1 1.200"/>
<path d="M341.5 461.500l3.6 8c0 2.500-1.500 3.500-3.6 3.500s-3.6-1-3.6-3.500z" stroke-width="0.3"  />
<circle cx="341.5" cy="459.8" r="1.1" />
<path d="M336.5 473c2-2 3.500-1 5 .500 1.500-1.500 3-2.500 5-.500" stroke-width="0.7" fill="none" />
<path d="M356 461.500l3.6 8c0 2.500-1.500 3.500-3.6 3.500s-3.6-1-3.6-3.500z" stroke-width="0.3"  />
<circle cx="356.0" cy="459.8" r="1.1" />
<path d="M351 473c2-2 3.500-1 5 .500 1.500-1.500 3-2.500 5-.500" stroke-width="0.7" fill="none" />
<path d="M370.5 461.500l3.6 8c0 2.500-1.500 3.500-3.6 3.500s-3.6-1-3.6-3.500z" stroke-width="0.3"  />
<circle cx="370.5" cy="459.8" r="1.1" />
<path d="M365.5 473c2-2 3.500-1 5 .500 1.500-1.500 3-2.500 5-.500" stroke-width="0.7" fill="none" />
<path d="M383.5 461.500l1.5 8c0 2.500-1.500 3.500-1.5 3.500s-1.5-1-1.5-3.500z" stroke-width="0.3"  />
<circle cx="383.5" cy="459.8" r="1.1" />
<rect x="348.5" y="456" width="1.700" height="19"/>
<rect x="363" y="456" width="1.700" height="19"/>
<rect x="377.5" y="456" width="1.700" height="19"/>
<circle cx="452.0" cy="458.5" r="2.1" />
<path d="M448.0 464.500h8.0l-1.5 -2.500h-5.0zM445.5 469.500h13.0l-2.5-3h-8.0z" stroke-width="0.3"  />
<path d="M452 460v10" stroke-width="1.3" fill="none" />
<path d="M446.0 466c-1.500-1-1.500-3 0-3.500M458.0 466c1.500-1 1.500-3 0-3.500" stroke-width="0.8" fill="none" />
<circle cx="467.0" cy="458.5" r="2.1" />
<path d="M463.0 464.500h8.0l-1.5 -2.500h-5.0zM460.5 469.500h13.0l-2.5-3h-8.0z" stroke-width="0.3"  />
<path d="M467 460v10" stroke-width="1.3" fill="none" />
<path d="M461.0 466c-1.500-1-1.500-3 0-3.500M473.0 466c1.500-1 1.500-3 0-3.500" stroke-width="0.8" fill="none" />
<circle cx="481.5" cy="458.5" r="2.1" />
<path d="M477.5 464.500h8.0l-1.5 -2.500h-5.0zM475.0 469.500h13.0l-2.5-3h-8.0z" stroke-width="0.3"  />
<path d="M481.5 460v10" stroke-width="1.3" fill="none" />
<path d="M475.5 466c-1.500-1-1.500-3 0-3.500M487.5 466c1.500-1 1.500-3 0-3.500" stroke-width="0.8" fill="none" />
<circle cx="494.5" cy="458.5" r="1.1550000000000002" />
<path d="M492.3 464.500h4.4l-0.8 -2.500h-2.8zM490.9 469.500h7.2l-1.4-3h-4.4z" stroke-width="0.3"  />
<path d="M494.5 460v10" stroke-width="0.7150000000000001" fill="none" />
<path d="M491.2 466c-1.500-1-1.500-3 0-3.500M497.8 466c1.500-1 1.500-3 0-3.500" stroke-width="0.8" fill="none" />
<rect x="444.500" y="470.500" width="52.500" height="8" fill="#3a3a3a" stroke-width="0"/>
<path d="M446.0 477.500l2.600-5 2.600 5z" fill="#f2f2f2" stroke-width="0"/>
<path d="M451.8 477.500l2.600-5 2.600 5z" fill="#f2f2f2" stroke-width="0"/>
<path d="M457.6 477.500l2.600-5 2.600 5z" fill="#f2f2f2" stroke-width="0"/>
<path d="M463.4 477.500l2.600-5 2.600 5z" fill="#f2f2f2" stroke-width="0"/>
<path d="M469.2 477.500l2.600-5 2.600 5z" fill="#f2f2f2" stroke-width="0"/>
<path d="M475.0 477.500l2.600-5 2.600 5z" fill="#f2f2f2" stroke-width="0"/>
<path d="M480.8 477.500l2.600-5 2.600 5z" fill="#f2f2f2" stroke-width="0"/>
<path d="M486.6 477.500l2.600-5 2.600 5z" fill="#f2f2f2" stroke-width="0"/>
<path d="M492.4 477.500l2.600-5 2.600 5z" fill="#f2f2f2" stroke-width="0"/>
<path d="M444.500 478.500h52.500" stroke-width="0.9" fill="none" />
<path d="M373.7 502.2L372.9 503.1L372.0 503.6L370.9 503.8L370.0 503.5L369.2 503.0L368.7 502.3L368.5 501.5L368.7 500.7L369.0 500.1L369.6 499.6L370.2 499.5L370.8 499.5L371.2 499.8L371.5 500.2L371.7 500.6L371.6 501.0L371.4 501.2L371.2 501.4L371.0 501.4" stroke-width="1.3" fill="none" />
<path d="M366.2 509.7L365.1 509.8L364.1 509.5L363.2 508.8L362.7 508.0L362.6 507.1L362.7 506.2L363.2 505.5L363.8 505.0L364.5 504.9L365.2 504.9L365.8 505.2L366.1 505.7L366.3 506.2L366.2 506.7L366.0 507.1L365.7 507.3L365.4 507.4L365.1 507.3L364.9 507.2" stroke-width="1.3" fill="none" />
<path d="M355.8 509.7L354.9 508.9L354.4 508.0L354.2 506.9L354.5 506.0L355.0 505.2L355.7 504.7L356.5 504.5L357.3 504.7L357.9 505.0L358.4 505.6L358.5 506.2L358.5 506.8L358.2 507.2L357.8 507.5L357.4 507.7L357.0 507.6L356.8 507.4L356.6 507.2L356.6 507.0" stroke-width="1.3" fill="none" />
<path d="M348.3 502.2L348.2 501.1L348.5 500.1L349.2 499.2L350.0 498.7L350.9 498.6L351.8 498.7L352.5 499.2L353.0 499.8L353.1 500.5L353.1 501.2L352.8 501.8L352.3 502.1L351.8 502.3L351.3 502.2L350.9 502.0L350.7 501.7L350.6 501.4L350.7 501.1L350.8 500.9" stroke-width="1.3" fill="none" />
<path d="M348.3 491.8L349.1 490.9L350.0 490.4L351.1 490.2L352.0 490.5L352.8 491.0L353.3 491.7L353.5 492.5L353.3 493.3L353.0 493.9L352.4 494.4L351.8 494.5L351.2 494.5L350.8 494.2L350.5 493.8L350.3 493.4L350.4 493.0L350.6 492.8L350.8 492.6L351.0 492.6" stroke-width="1.3" fill="none" />
<path d="M355.8 484.3L356.9 484.2L357.9 484.5L358.8 485.2L359.3 486.0L359.4 486.9L359.3 487.8L358.8 488.5L358.2 489.0L357.5 489.1L356.8 489.1L356.2 488.8L355.9 488.3L355.7 487.8L355.8 487.3L356.0 486.9L356.3 486.7L356.6 486.6L356.9 486.7L357.1 486.8" stroke-width="1.3" fill="none" />
<path d="M366.2 484.3L367.1 485.1L367.6 486.0L367.8 487.1L367.5 488.0L367.0 488.8L366.3 489.3L365.5 489.5L364.7 489.3L364.1 489.0L363.6 488.4L363.5 487.8L363.5 487.2L363.8 486.8L364.2 486.5L364.6 486.3L365.0 486.4L365.2 486.6L365.4 486.8L365.4 487.0" stroke-width="1.3" fill="none" />
<path d="M373.7 491.8L373.8 492.9L373.5 493.9L372.8 494.8L372.0 495.3L371.1 495.4L370.2 495.3L369.5 494.8L369.0 494.2L368.9 493.5L368.9 492.8L369.2 492.2L369.7 491.9L370.2 491.7L370.7 491.8L371.1 492.0L371.3 492.3L371.4 492.6L371.3 492.9L371.2 493.1" stroke-width="1.3" fill="none" />
<circle cx="361" cy="497" r="7.800" fill="none" stroke-width="1.500"/>
<path d="M356 493.5h10M355 497h12M356 500.5h10M361 490.5v13M357.7 493.5v7M364.3 493.5v7" stroke-width="1.1" fill="none" />
<path d="M356 485.5c1.500-3.500 4-3 5-.5 1-2.500 3.500-3 5 .5" stroke-width="1.3" fill="none" />
<path d="M413.0 488.0Q398.9 490.5 390.5 501.0" stroke-width="1.1" fill="none" />
<path d="M413.0 488.0Q399.4 488.0 389.7 496.5" stroke-width="1.1" fill="none" />
<path d="M413.0 488.0Q400.2 485.7 389.8 492.1" stroke-width="1.1" fill="none" />
<path d="M413.0 488.0Q401.4 483.8 390.6 488.0" stroke-width="1.1" fill="none" />
<path d="M413.0 488.0Q402.9 482.2 392.1 484.3" stroke-width="1.1" fill="none" />
<path d="M413.0 488.0Q404.6 480.9 394.2 481.2" stroke-width="1.1" fill="none" />
<path d="M387 493c1 2 3 2 4 0M391 498c1 2 3 1 4-1" stroke-width="0.9" fill="none" />
<path d="M420.0 489.0Q431.2 484.4 441.9 487.1" stroke-width="1" fill="none" />
<path d="M420.0 489.0Q430.9 486.1 440.5 489.9" stroke-width="1" fill="none" />
<path d="M420.0 489.0Q430.4 487.7 438.7 492.3" stroke-width="1" fill="none" />
<path d="M420.0 489.0Q429.6 489.1 436.7 494.3" stroke-width="1" fill="none" />
<path d="M420.0 489.0Q428.7 490.2 434.5 495.8" stroke-width="1" fill="none" />
<path d="M441 489c1-2 0-3-2-3" stroke-width="0.9" fill="none" />
<path d="M408 486c2-4 6-6 10-5 3-3 4-6 4-9l3 5 4-2-2 5c2 2 2 5 0 7-3 3-8 4-12 3-3 0-5-2-7-4z" stroke-width="0.3"  />
<path d="M407.5 481.0L407.9 479.8L408.6 478.9L409.6 478.3L410.7 478.1L411.7 478.4L412.5 478.9L413.0 479.7L413.2 480.5L413.1 481.3L412.7 481.9L412.2 482.3L411.6 482.5L411.0 482.5L410.5 482.2L410.2 481.8L410.1 481.4L410.2 481.1L410.3 480.8L410.6 480.7" stroke-width="1.3" fill="none" />
<path d="M421.0 478.0Q420.6 474.2 418.6 471.4" stroke-width="0.9" fill="none" />
<path d="M421.0 478.0Q421.9 474.6 421.0 471.7" stroke-width="0.9" fill="none" />
<path d="M421.0 478.0Q422.8 475.4 422.9 472.7" stroke-width="0.9" fill="none" />
<path d="M421.0 478.0Q423.2 476.4 424.2 474.2" stroke-width="0.9" fill="none" />
<path d="M412 492l-2 6M418 493l1 5M409 498h6" stroke-width="1" fill="none" />
<circle cx="471.3" cy="499.2" r="10.300" fill="none" stroke-width="3.400" stroke-dasharray="50 15" transform="rotate(-50 471.3 499.2)"/>
<circle cx="471.3" cy="499.2" r="10.300" fill="none" stroke-width=".8" stroke="#e8e8e8" stroke-dasharray="1 2"/>
<path d="M475.6 496.6L476.0 498.5L475.7 500.3L474.8 501.9L473.4 502.9L471.9 503.3L470.4 503.2L469.1 502.6L468.2 501.6L467.7 500.4L467.8 499.2L468.2 498.2L468.9 497.5L469.7 497.2L470.6 497.2L471.2 497.4L471.7 497.9L471.9 498.5L471.8 499.0L471.6 499.3" stroke-width="1.7" fill="none" />
<path d="M480.3 495.2l4-2M482.3 500.2l3 1M473.3 510.2l1 3" stroke-width="1" fill="none" />
<path d="M336.500 513.500c.5 6 2 11 6.500 14 4 2.500 6 6 5 10-1 5-4 8-3 13 1 4 3 6 2 9-1 4-5 6-10 7" stroke-width="1" fill="none" />
<circle cx="336.5" cy="513.5" r="1.4" />
<path d="M346.2 530.0L346.6 528.7L347.4 527.7L348.4 527.1L349.6 526.8L350.7 527.0L351.6 527.6L352.2 528.4L352.5 529.3L352.4 530.2L352.0 531.0L351.5 531.5L350.8 531.8L350.1 531.8L349.5 531.6L349.1 531.2L348.9 530.7L348.8 530.2L349.0 529.8L349.2 529.5L349.5 529.4L349.8 529.5" stroke-width="0.9" fill="none" />
<path d="M358.0 537.0L359.3 537.4L360.4 538.2L361.1 539.3L361.3 540.5L361.1 541.7L360.5 542.7L359.7 543.3L358.7 543.6L357.8 543.5L357.0 543.1L356.4 542.5L356.1 541.8L356.1 541.1L356.4 540.5L356.8 540.0L357.3 539.8L357.8 539.8L358.2 539.9L358.5 540.2L358.6 540.5L358.6 540.8" stroke-width="0.9" fill="none" />
<path d="M346.2 552.0L345.9 550.9L345.2 550.1L344.3 549.5L343.4 549.3L342.4 549.5L341.7 550.0L341.1 550.7L340.9 551.4L341.0 552.2L341.3 552.8L341.8 553.3L342.4 553.5L342.9 553.5L343.4 553.3L343.8 553.0L344.0 552.6L344.0 552.2L343.9 551.8L343.6 551.6L343.4 551.5L343.1 551.5" stroke-width="0.9" fill="none" />
<path d="M351.5 559.0L351.9 557.8L352.6 556.9L353.6 556.3L354.7 556.1L355.7 556.4L356.5 556.9L357.0 557.7L357.2 558.5L357.1 559.3L356.7 559.9L356.2 560.3L355.6 560.5L355.0 560.5L354.5 560.2L354.2 559.8L354.1 559.4L354.2 559.1L354.3 558.8L354.6 558.7" stroke-width="0.9" fill="none" />
<path d="M356 533c4 1 7 4 7 8M352 546c4 1 7 0 9-3M341 536c-3 2-4 6-2 9M349 545l-3 6" stroke-width="0.9" fill="none" />
<path d="M351.500 534.500l2 2.500-1 3-2.500-1.500zM354 543.500l2.500 1.500-.5 3-3-1zM347 560l3.500 2-2 4-3.500-2.500zM356.500 556l2.500 2.500-2 3-2.500-2zM343.500 543c-1.500 1.500-2 4-.5 6 1.500-1.500 2-4 .5-6z" stroke-width="0.3"  />
<path d="M335 567c1-3 4-4 6-2" stroke-width="0.9" fill="none" />
<path d="M450.9 553.2L450.4 548.2L449.3 543.3L447.7 538.6L445.6 534.1L443.1 530.1L440.2 526.4L436.9 523.2L433.3 520.5L429.5 518.3L425.4 516.8L421.2 515.8L417.0 515.5L412.8 515.8L408.6 516.8L404.5 518.3L400.7 520.5L397.1 523.2L393.8 526.4L390.9 530.1L388.4 534.1L386.3 538.6L384.7 543.3L383.6 548.2L383.1 553.2L396.5 554.3L396.9 551.3L397.5 548.3L398.5 545.5L399.7 542.8L401.3 540.3L403.0 538.1L405.0 536.1L407.2 534.5L409.5 533.2L411.9 532.3L414.4 531.7L417.0 531.5L419.6 531.7L422.1 532.3L424.5 533.2L426.8 534.5L429.0 536.1L431.0 538.1L432.7 540.3L434.3 542.8L435.5 545.5L436.5 548.3L437.1 551.3L437.5 554.3z" fill="#ececec" stroke-width="1"/>
<path d="M448.0 549.5L447.2 545.2L445.9 541.1L444.3 537.2L442.3 533.6L439.9 530.3L437.2 527.3L434.3 524.7L431.1 522.5L427.8 520.8L424.3 519.5L420.7 518.8L417.0 518.5L413.3 518.8L409.7 519.5L406.2 520.8L402.9 522.5L399.7 524.7L396.8 527.3L394.1 530.3L391.7 533.6L389.7 537.2L388.1 541.1L386.8 545.2L386.0 549.5" fill="none" stroke-width="2.600" stroke-dasharray="2.600 2.400"/>
<path d="M442.7 548.4L441.8 545.1L440.7 541.9L439.2 538.8L437.5 536.0L435.5 533.5L433.3 531.2L430.9 529.2L428.3 527.5L425.6 526.2L422.8 525.3L419.9 524.7L417.0 524.5L414.1 524.7L411.2 525.3L408.4 526.2L405.7 527.5L403.1 529.2L400.7 531.2L398.5 533.5L396.5 536.0L394.8 538.8L393.3 541.9L392.2 545.1L391.3 548.4" fill="none" stroke-width="2.400" stroke-dasharray="4.500 3" stroke="#5a5a5a"/>
<path d="M439.6 552.2L439.0 549.0L438.2 546.0L437.0 543.0L435.6 540.3L433.9 537.7L432.0 535.5L429.8 533.5L427.5 531.8L425.0 530.5L422.4 529.6L419.7 529.0L417.0 528.8L414.3 529.0L411.6 529.6L409.0 530.5L406.5 531.8L404.2 533.5L402.0 535.5L400.1 537.7L398.4 540.3L397.0 543.0L395.8 546.0L395.0 549.0L394.4 552.2" fill="none" stroke-width="1.200" stroke-dasharray="1.500 1.500"/>
<rect x="383.500" y="550.500" width="10.500" height="5" fill="#fdfdfd" stroke-width=".8" transform="rotate(-8 389 553)"/>
<rect x="440" y="550.500" width="10.500" height="5" fill="#fdfdfd" stroke-width=".8" transform="rotate(8 445 553)"/>
<path d="M413 517.500c2-2 6-2 8 0" stroke-width="1.5" fill="none" />
<path d="M457 545c4-3 9-2 13 1 5 4 9 9 14 13 4 3 9 5 14 5M462 531c3 5 8 8 13 10 6 3 10 7 13 13M498 527c-6 0-11 3-15 8-3 5-8 8-14 9M479 527c-1 5-3 9-7 12" stroke-width="1.1" fill="none" />
<path d="M468.0 557.0L467.7 558.0L467.0 558.8L466.2 559.3L465.3 559.4L464.4 559.3L463.7 558.8L463.3 558.2L463.1 557.4L463.2 556.8L463.5 556.2L464.0 555.8L464.5 555.7L465.0 555.7L465.4 556.0L465.7 556.3L465.8 556.6L465.7 556.9L465.6 557.2L465.4 557.3" stroke-width="0.9" fill="none" />
<path d="M486.2 561.0L486.5 561.9L487.1 562.6L487.8 563.1L488.6 563.2L489.4 563.1L490.0 562.7L490.4 562.2L490.6 561.6L490.6 561.0L490.4 560.5L490.0 560.1L489.6 559.9L489.2 559.9L488.8 560.1L488.6 560.3L488.5 560.6L488.5 560.8L488.6 561.0" stroke-width="0.9" fill="none" />
<path d="M468.5 531.0L468.2 531.8L467.7 532.5L467.1 532.9L466.4 533.0L465.7 532.9L465.1 532.6L464.7 532.1L464.5 531.5L464.6 531.0L464.8 530.5L465.1 530.2L465.5 530.1L465.8 530.0L466.1 530.2L466.4 530.4L466.5 530.6L466.5 530.8L466.4 531.0" stroke-width="0.9" fill="none" />
<path d="M471.500 534l2.500-4.500 2.500 1.500-1.500 4.500zM477 548l4.500 1v3.500l-4.500-1zM484 538l3.500-2.500 1.800 2.500-3.500 2.500z" stroke-width="0.3"  />
<circle cx="457.0" cy="545.5" r="1.3" />
<circle cx="498.5" cy="527.0" r="1.3" />
<circle cx="499.0" cy="564.5" r="1.3" />
<circle cx="479.0" cy="526.5" r="1.2" />
<path d="M431.7 575.4Q437.7 580.0 433.3 584.6" stroke-width="1.7" fill="none" />
<path d="M429.8 582.6Q432.7 589.6 426.5 591.4" stroke-width="1.7" fill="none" />
<path d="M424.4 588.0Q423.5 595.4 417.3 593.9" stroke-width="1.7" fill="none" />
<path d="M417.2 589.9Q412.6 595.9 408.0 591.5" stroke-width="1.7" fill="none" />
<path d="M409.9 588.0Q403.0 590.9 401.2 584.7" stroke-width="1.7" fill="none" />
<path d="M404.6 582.6Q397.2 581.7 398.7 575.5" stroke-width="1.7" fill="none" />
<path d="M402.7 575.4Q396.7 570.8 401.1 566.2" stroke-width="1.7" fill="none" />
<path d="M404.6 568.1Q401.7 561.2 407.9 559.4" stroke-width="1.7" fill="none" />
<path d="M409.9 562.8Q410.9 555.4 417.1 556.9" stroke-width="1.7" fill="none" />
<path d="M417.2 560.9Q421.8 554.9 426.4 559.3" stroke-width="1.7" fill="none" />
<path d="M424.4 562.8Q431.4 559.9 433.2 566.1" stroke-width="1.7" fill="none" />
<path d="M429.8 568.1Q437.2 569.1 435.7 575.3" stroke-width="1.7" fill="none" />
<circle cx="417.2" cy="575.4" r="15.5" />
<circle cx="417.2" cy="575.4" r="9.300" fill="#f4f4f4" stroke-width="0"/>
<circle cx="428.6" cy="580.1" r="1.700" fill="#fdfdfd" stroke-width="0"/>
<circle cx="421.9" cy="586.8" r="1.700" fill="#fdfdfd" stroke-width="0"/>
<circle cx="412.5" cy="586.8" r="1.700" fill="#fdfdfd" stroke-width="0"/>
<circle cx="405.8" cy="580.1" r="1.700" fill="#fdfdfd" stroke-width="0"/>
<circle cx="405.8" cy="570.7" r="1.700" fill="#fdfdfd" stroke-width="0"/>
<circle cx="412.5" cy="564.0" r="1.700" fill="#fdfdfd" stroke-width="0"/>
<circle cx="421.9" cy="564.0" r="1.700" fill="#fdfdfd" stroke-width="0"/>
<circle cx="428.6" cy="570.7" r="1.700" fill="#fdfdfd" stroke-width="0"/>
<path d="M411.7 570.9h11M410.2 574.9h14M411.7 579.4h11M417.2 567.4v16M413.7 570.9v8.500M420.7 570.9v8.500" stroke-width="1.1" fill="none" />
<path d="M352 596c3-4 7-6 11-6 2-3 5-5 9-5 3 0 6 2 7.500 5 1.500 3 1 6-1 8-4 1-8 1-12 0-3 1.500-7 1.500-10 .5z" stroke-width="0.3"  />
<path d="M374.5 592.0L374.0 593.5L373.1 594.7L371.9 595.5L370.5 595.7L369.2 595.5L368.1 594.8L367.4 593.9L367.1 592.8L367.2 591.7L367.6 590.8L368.3 590.2L369.1 589.9L369.9 589.9L370.6 590.1L371.1 590.6L371.4 591.2L371.4 591.7L371.2 592.2L370.9 592.5L370.5 592.7L370.2 592.6" stroke-width="1.1" fill="none" />
<path d="M363 592c3 3 8 3 11 0M372 587c2 2 2 5 0 7M357 595c2 1 4 1 6 0" fill="none" stroke="#fdfdfd" stroke-width=".9"/>
<path d="M354.0 597.0Q347.6 598.5 343.6 603.0" stroke-width="1" fill="none" />
<path d="M354.0 597.0Q348.0 596.6 343.3 599.6" stroke-width="1" fill="none" />
<path d="M354.0 597.0Q348.8 595.1 344.0 596.6" stroke-width="1" fill="none" />
<path d="M354.0 597.0Q350.0 594.1 345.5 594.1" stroke-width="1" fill="none" />
<path d="M354.0 597.0Q351.3 593.5 347.4 592.4" stroke-width="1" fill="none" />
<path d="M358 600l-2 4.500M368 601l1 4M377 598l5 2 4-.5M380 594l5-1M374 584l2-2.500M379 587l3-2" stroke-width="1" fill="none" />
<path d="M451 585c4 0 7 1 10 3" stroke-width="1.2" fill="none" />
<circle cx="450.5" cy="585.0" r="1.5" />
<path d="M459 587c4-2 9-2 13 0 2 3 1 6-2 8-2 2-3 5-1 7 3 2 7 1 10-1 3-2 5-5 6-8l2.500 1.500c-1 5-4 9-9 11-5 2-11 1-14.500-2-3-3-4-7-2-11-3 0-6-1-8-3 1-1.500 3-2.500 5-2.500z" stroke-width="0.3"  />
<path d="M463 591c3 1 6 1 8-1M468 603.500c4 1.500 9 1.500 13-1.500M462 597c1 3 3 5 6 6" fill="none" stroke="#fdfdfd" stroke-width=".9" stroke-dasharray="2 1"/>
<path d="M488.0 594.0Q488.4 587.4 491.1 582.4" stroke-width="1" fill="none" />
<circle cx="491.1" cy="582.4" r="0.9" />
<path d="M488.0 594.0Q489.8 588.2 493.2 584.3" stroke-width="1" fill="none" />
<circle cx="493.2" cy="584.3" r="0.9" />
<path d="M488.0 594.0Q490.8 589.2 494.6 586.5" stroke-width="1" fill="none" />
<circle cx="494.6" cy="586.5" r="0.9" />
<path d="M488.0 594.0Q491.4 590.4 495.4 588.8" stroke-width="1" fill="none" />
<circle cx="495.4" cy="588.8" r="0.9" />
<path d="M457 592l-3 3M461 599l-4 2M472 608l0 2.500M480 607l2 2.500" stroke-width="1" fill="none" />
<path d="M394.500 606.500c7-1 14-1.500 20.500-1.500l2.500-3.500 2.500 3.500c6.500 0 13.500.5 20.500 1.500v32c-4 1-8 2-11 4l-8 11.500h-8l-8-11.500c-3-2-7-3-11-4z" fill="#fdfdfd" stroke-width=".9"/>
<path d="M396.500 608.500c6-1 12-1.500 18-1.500v31c-6 0-12-.5-18-1.500zM421 607c6 0 12 .5 18 1.500v28c-6 1-12 1.500-18 1.500z" fill="#5a5a5a" stroke-width="0"/>
<circle cx="401" cy="613" r="2.400" fill="#e6e6e6" stroke="#333" stroke-width=".5"/><circle cx="401" cy="613" r=".8" fill="#333" stroke-width="0"/>
<circle cx="409.5" cy="611.5" r="2.400" fill="#e6e6e6" stroke="#333" stroke-width=".5"/><circle cx="409.5" cy="611.5" r=".8" fill="#333" stroke-width="0"/>
<circle cx="400.5" cy="626" r="2.400" fill="#e6e6e6" stroke="#333" stroke-width=".5"/><circle cx="400.5" cy="626" r=".8" fill="#333" stroke-width="0"/>
<circle cx="408.5" cy="632" r="2.400" fill="#e6e6e6" stroke="#333" stroke-width=".5"/><circle cx="408.5" cy="632" r=".8" fill="#333" stroke-width="0"/>
<circle cx="404" cy="619.5" r="2.400" fill="#e6e6e6" stroke="#333" stroke-width=".5"/><circle cx="404" cy="619.5" r=".8" fill="#333" stroke-width="0"/>
<circle cx="426" cy="611.5" r="2.400" fill="#e6e6e6" stroke="#333" stroke-width=".5"/><circle cx="426" cy="611.5" r=".8" fill="#333" stroke-width="0"/>
<circle cx="434.5" cy="613" r="2.400" fill="#e6e6e6" stroke="#333" stroke-width=".5"/><circle cx="434.5" cy="613" r=".8" fill="#333" stroke-width="0"/>
<circle cx="435" cy="626" r="2.400" fill="#e6e6e6" stroke="#333" stroke-width=".5"/><circle cx="435" cy="626" r=".8" fill="#333" stroke-width="0"/>
<circle cx="427" cy="632" r="2.400" fill="#e6e6e6" stroke="#333" stroke-width=".5"/><circle cx="427" cy="632" r=".8" fill="#333" stroke-width="0"/>
<circle cx="431.5" cy="619.5" r="2.400" fill="#e6e6e6" stroke="#333" stroke-width=".5"/><circle cx="431.5" cy="619.5" r=".8" fill="#333" stroke-width="0"/>
<path d="M417.500 640l-12-22M417.500 640l12-22M417.500 640l-7-28M417.500 640l7-28" fill="none" stroke="#dcdcdc" stroke-width=".7"/>
<path d="M415 608.500l2.500 4 2.500-4z" stroke-width=".3"/>
<path d="M416.500 612v30h2v-30z" fill="#2a2a2a" stroke-width="0"/>
<path d="M402 640.500c5 1 10 3 13 6l2.500 6.500 2.500-6.500c3-3 8-5 13-6l-8 12h-15z" fill="#4a4a4a" stroke-width=".3"/>
<path d="M408 643l8 9M412 643l5 9M427 643l-8 9M423 643l-5 9" fill="none" stroke="#e4e4e4" stroke-width=".6"/>
<path d="M415.500 641l2 11.500 2-11.500z" fill="#111" stroke-width="0"/>
<path d="M337.500 628c3-1 6 0 9 2.500" stroke-width="1.2" fill="none" />
<circle cx="337.0" cy="628.0" r="1.2" />
<path d="M346 630c2-2.500 4-3.500 6-2.500 1 3 3 5 6 6 4 0 8-1 12-1 3 0 4 2 3 4-2 2-4 4-5 6.500-3 0-5-1-7-3-3 2-6 3-9 2-2 1-3 3-3 5-2.500-1-3.500-3-3.500-5.500-3-1-5-3-6-6 2-1 4-3 6.500-6z" stroke-width="0.3"  />
<path d="M350 634c3 2 7 2 10 0M362 636.500c3 1 6 0 8-2M348 639c2 1 4 1 6 0" fill="none" stroke="#fdfdfd" stroke-width=".9"/>
<path d="M372.0 633.0Q375.0 625.9 381.0 622.3" stroke-width="1" fill="none" />
<path d="M372.0 633.0Q375.9 627.3 381.9 625.1" stroke-width="1" fill="none" />
<path d="M372.0 633.0Q376.5 628.7 382.1 627.9" stroke-width="1" fill="none" />
<path d="M372.0 633.0Q376.7 630.1 381.7 630.4" stroke-width="1" fill="none" />
<path d="M352 642l-3 4.500M366 641l3 4M374 636l5 3M358 645l0 2.500" stroke-width="1" fill="none" />
<path d="M450 626c3 2 6 3.500 8 6.500" stroke-width="1.1" fill="none" />
<path d="M452 624.500l4 6M456 624l2.500 5" stroke-width="0.9" fill="none" />
<path d="M499 624c-3 3-6 5-9 7M496 622.500l-5 6M492 622l-3 5.500" stroke-width="1" fill="none" />
<path d="M458 632c3 2 6 3 10 3 3-2 7-2 10 0 3-1 6-3 8-5l3 1.500c-2 3-5 5-8 6 0 4-2 7-5 9-4 2-8 2-11-1-3-3-3-7-1-10-3-1-6-2.500-8-5z" stroke-width="0.3"  />
<circle cx="471.500" cy="641" r="4.400" fill="#fdfdfd" stroke-width="0"/>
<path d="M475.1 641.0L474.7 642.2L474.0 643.2L473.0 643.8L471.9 644.0L470.9 643.8L470.0 643.3L469.4 642.5L469.2 641.6L469.2 640.8L469.6 640.1L470.1 639.6L470.8 639.3L471.4 639.3L472.0 639.5L472.4 639.9L472.6 640.3L472.6 640.8L472.5 641.2L472.2 641.4L471.9 641.5L471.7 641.5" stroke-width="1.2" fill="none" />
<path d="M463 645l-3 3M480 645l3 3M471.500 648l0 2" stroke-width="1" fill="none" />
</g>
<defs><clipPath id="cA"><rect x="510.700" y="412.300" width="93" height="136.200"/></clipPath><clipPath id="cB"><rect x="606.500" y="412.300" width="91" height="243"/></clipPath><clipPath id="cC"><rect x="511.500" y="549" width="92.200" height="106"/></clipPath><filter id="pf" x="-2%" y="-2%" width="104%" height="104%"><feGaussianBlur stdDeviation=".3"/></filter></defs>
<g filter="url(#pf)">
<g clip-path="url(#cA)">
<rect x="510" y="412" width="95" height="137" fill="#f1f2f2"/>
<rect x="510.700" y="412" width="1.300" height="137" fill="#8a7458"/>
<path d="M586 438c-6 14-30 4-40 12M548 452c14 8 24 14 28 20M570 490c-10 12-30 10-34 14M546 520c14 2 26 6 30 12M520 412c4 14 10 24 12 28M600 450c-8 10-14 18-16 24M515 470c8 10 14 24 16 36M600 500c-6 10-10 20-12 28M560 412c-4 10-14 16-24 28M512 540c8-4 14-10 18-16" fill="none" stroke="#4f7cb6" stroke-width=".8"/>
<g transform="translate(553.7 489.0) rotate(139) scale(0.95)" fill="#33609c"><ellipse cx="0" cy="-2.600" rx="1.500" ry="3"/><ellipse cx="-2.300" cy="-.6" rx="1.300" ry="2.500" transform="rotate(-50 -2.300 -.6)"/><ellipse cx="2.300" cy="-.6" rx="1.300" ry="2.500" transform="rotate(50 2.300 -.6)"/><path d="M0 0v3.500" stroke="#33609c" stroke-width=".7"/></g>
<g transform="translate(596.2 476.4) rotate(142) scale(0.90)" fill="#4f7cb6"><ellipse cx="0" cy="-2.600" rx="1.500" ry="3"/><ellipse cx="-2.300" cy="-.6" rx="1.300" ry="2.500" transform="rotate(-50 -2.300 -.6)"/><ellipse cx="2.300" cy="-.6" rx="1.300" ry="2.500" transform="rotate(50 2.300 -.6)"/><path d="M0 0v3.500" stroke="#4f7cb6" stroke-width=".7"/></g>
<g transform="translate(558.7 492.7) rotate(199) scale(1.14)" fill="#33609c"><ellipse cx="0" cy="-2.600" rx="1.500" ry="3"/><ellipse cx="-2.300" cy="-.6" rx="1.300" ry="2.500" transform="rotate(-50 -2.300 -.6)"/><ellipse cx="2.300" cy="-.6" rx="1.300" ry="2.500" transform="rotate(50 2.300 -.6)"/><path d="M0 0v3.500" stroke="#33609c" stroke-width=".7"/></g>
<g transform="translate(529.6 482.6) rotate(278) scale(1.06)" fill="#33609c"><ellipse cx="0" cy="-2.600" rx="1.500" ry="3"/><ellipse cx="-2.300" cy="-.6" rx="1.300" ry="2.500" transform="rotate(-50 -2.300 -.6)"/><ellipse cx="2.300" cy="-.6" rx="1.300" ry="2.500" transform="rotate(50 2.300 -.6)"/><path d="M0 0v3.500" stroke="#33609c" stroke-width=".7"/></g>
<g transform="translate(569.7 520.3) rotate(278) scale(1.04)" fill="#33609c"><ellipse cx="0" cy="-2.600" rx="1.500" ry="3"/><ellipse cx="-2.300" cy="-.6" rx="1.300" ry="2.500" transform="rotate(-50 -2.300 -.6)"/><ellipse cx="2.300" cy="-.6" rx="1.300" ry="2.500" transform="rotate(50 2.300 -.6)"/><path d="M0 0v3.500" stroke="#33609c" stroke-width=".7"/></g>
<g transform="translate(521.5 454.7) rotate(337) scale(1.12)" fill="#4f7cb6"><ellipse cx="0" cy="-2.600" rx="1.500" ry="3"/><ellipse cx="-2.300" cy="-.6" rx="1.300" ry="2.500" transform="rotate(-50 -2.300 -.6)"/><ellipse cx="2.300" cy="-.6" rx="1.300" ry="2.500" transform="rotate(50 2.300 -.6)"/><path d="M0 0v3.500" stroke="#4f7cb6" stroke-width=".7"/></g>
<g transform="translate(521.2 522.5) rotate(133) scale(0.87)" fill="#26477c"><ellipse cx="0" cy="-2.600" rx="1.500" ry="3"/><ellipse cx="-2.300" cy="-.6" rx="1.300" ry="2.500" transform="rotate(-50 -2.300 -.6)"/><ellipse cx="2.300" cy="-.6" rx="1.300" ry="2.500" transform="rotate(50 2.300 -.6)"/><path d="M0 0v3.500" stroke="#26477c" stroke-width=".7"/></g>
<g transform="translate(575.4 419.6) rotate(185) scale(0.93)" fill="#4f7cb6"><ellipse cx="0" cy="-2.600" rx="1.500" ry="3"/><ellipse cx="-2.300" cy="-.6" rx="1.300" ry="2.500" transform="rotate(-50 -2.300 -.6)"/><ellipse cx="2.300" cy="-.6" rx="1.300" ry="2.500" transform="rotate(50 2.300 -.6)"/><path d="M0 0v3.500" stroke="#4f7cb6" stroke-width=".7"/></g>
<g transform="translate(601.4 543.3) rotate(231) scale(0.97)" fill="#26477c"><ellipse cx="0" cy="-2.600" rx="1.500" ry="3"/><ellipse cx="-2.300" cy="-.6" rx="1.300" ry="2.500" transform="rotate(-50 -2.300 -.6)"/><ellipse cx="2.300" cy="-.6" rx="1.300" ry="2.500" transform="rotate(50 2.300 -.6)"/><path d="M0 0v3.500" stroke="#26477c" stroke-width=".7"/></g>
<g transform="translate(571.9 496.5) rotate(110) scale(0.94)" fill="#4f7cb6"><ellipse cx="0" cy="-2.600" rx="1.500" ry="3"/><ellipse cx="-2.300" cy="-.6" rx="1.300" ry="2.500" transform="rotate(-50 -2.300 -.6)"/><ellipse cx="2.300" cy="-.6" rx="1.300" ry="2.500" transform="rotate(50 2.300 -.6)"/><path d="M0 0v3.500" stroke="#4f7cb6" stroke-width=".7"/></g>
<g transform="translate(527.2 416.0) rotate(178) scale(0.88)" fill="#33609c"><ellipse cx="0" cy="-2.600" rx="1.500" ry="3"/><ellipse cx="-2.300" cy="-.6" rx="1.300" ry="2.500" transform="rotate(-50 -2.300 -.6)"/><ellipse cx="2.300" cy="-.6" rx="1.300" ry="2.500" transform="rotate(50 2.300 -.6)"/><path d="M0 0v3.500" stroke="#33609c" stroke-width=".7"/></g>
<g transform="translate(560.6 422.0) rotate(281) scale(1.05)" fill="#33609c"><ellipse cx="0" cy="-2.600" rx="1.500" ry="3"/><ellipse cx="-2.300" cy="-.6" rx="1.300" ry="2.500" transform="rotate(-50 -2.300 -.6)"/><ellipse cx="2.300" cy="-.6" rx="1.300" ry="2.500" transform="rotate(50 2.300 -.6)"/><path d="M0 0v3.500" stroke="#33609c" stroke-width=".7"/></g>
<g transform="translate(515.7 476.2) rotate(336) scale(0.96)" fill="#33609c"><ellipse cx="0" cy="-2.600" rx="1.500" ry="3"/><ellipse cx="-2.300" cy="-.6" rx="1.300" ry="2.500" transform="rotate(-50 -2.300 -.6)"/><ellipse cx="2.300" cy="-.6" rx="1.300" ry="2.500" transform="rotate(50 2.300 -.6)"/><path d="M0 0v3.500" stroke="#33609c" stroke-width=".7"/></g>
<g transform="translate(552.6 526.9) rotate(1) scale(1.18)" fill="#33609c"><ellipse cx="0" cy="-2.600" rx="1.500" ry="3"/><ellipse cx="-2.300" cy="-.6" rx="1.300" ry="2.500" transform="rotate(-50 -2.300 -.6)"/><ellipse cx="2.300" cy="-.6" rx="1.300" ry="2.500" transform="rotate(50 2.300 -.6)"/><path d="M0 0v3.500" stroke="#33609c" stroke-width=".7"/></g>
<g transform="translate(559.7 499.8) rotate(61) scale(1.20)" fill="#33609c"><ellipse cx="0" cy="-2.600" rx="1.500" ry="3"/><ellipse cx="-2.300" cy="-.6" rx="1.300" ry="2.500" transform="rotate(-50 -2.300 -.6)"/><ellipse cx="2.300" cy="-.6" rx="1.300" ry="2.500" transform="rotate(50 2.300 -.6)"/><path d="M0 0v3.500" stroke="#33609c" stroke-width=".7"/></g>
<g transform="translate(554.2 451.3) rotate(158) scale(1.16)" fill="#26477c"><ellipse cx="0" cy="-2.600" rx="1.500" ry="3"/><ellipse cx="-2.300" cy="-.6" rx="1.300" ry="2.500" transform="rotate(-50 -2.300 -.6)"/><ellipse cx="2.300" cy="-.6" rx="1.300" ry="2.500" transform="rotate(50 2.300 -.6)"/><path d="M0 0v3.500" stroke="#26477c" stroke-width=".7"/></g>
<g transform="translate(588.6 508.8) rotate(31) scale(0.90)" fill="#33609c"><ellipse cx="0" cy="-2.600" rx="1.500" ry="3"/><ellipse cx="-2.300" cy="-.6" rx="1.300" ry="2.500" transform="rotate(-50 -2.300 -.6)"/><ellipse cx="2.300" cy="-.6" rx="1.300" ry="2.500" transform="rotate(50 2.300 -.6)"/><path d="M0 0v3.500" stroke="#33609c" stroke-width=".7"/></g>
<g transform="translate(539.0 423.4) rotate(211) scale(0.90)" fill="#4f7cb6"><ellipse cx="0" cy="-2.600" rx="1.500" ry="3"/><ellipse cx="-2.300" cy="-.6" rx="1.300" ry="2.500" transform="rotate(-50 -2.300 -.6)"/><ellipse cx="2.300" cy="-.6" rx="1.300" ry="2.500" transform="rotate(50 2.300 -.6)"/><path d="M0 0v3.500" stroke="#4f7cb6" stroke-width=".7"/></g>
<g transform="translate(582.0 467.7) rotate(350) scale(1.04)" fill="#4f7cb6"><ellipse cx="0" cy="-2.600" rx="1.500" ry="3"/><ellipse cx="-2.300" cy="-.6" rx="1.300" ry="2.500" transform="rotate(-50 -2.300 -.6)"/><ellipse cx="2.300" cy="-.6" rx="1.300" ry="2.500" transform="rotate(50 2.300 -.6)"/><path d="M0 0v3.500" stroke="#4f7cb6" stroke-width=".7"/></g>
<g transform="translate(589.2 465.8) rotate(223) scale(1.09)" fill="#4f7cb6"><ellipse cx="0" cy="-2.600" rx="1.500" ry="3"/><ellipse cx="-2.300" cy="-.6" rx="1.300" ry="2.500" transform="rotate(-50 -2.300 -.6)"/><ellipse cx="2.300" cy="-.6" rx="1.300" ry="2.500" transform="rotate(50 2.300 -.6)"/><path d="M0 0v3.500" stroke="#4f7cb6" stroke-width=".7"/></g>
<g transform="translate(599.2 527.5) rotate(44) scale(1.09)" fill="#4f7cb6"><ellipse cx="0" cy="-2.600" rx="1.500" ry="3"/><ellipse cx="-2.300" cy="-.6" rx="1.300" ry="2.500" transform="rotate(-50 -2.300 -.6)"/><ellipse cx="2.300" cy="-.6" rx="1.300" ry="2.500" transform="rotate(50 2.300 -.6)"/><path d="M0 0v3.500" stroke="#4f7cb6" stroke-width=".7"/></g>
<g transform="translate(513.0 442.1) rotate(313) scale(1.17)" fill="#33609c"><ellipse cx="0" cy="-2.600" rx="1.500" ry="3"/><ellipse cx="-2.300" cy="-.6" rx="1.300" ry="2.500" transform="rotate(-50 -2.300 -.6)"/><ellipse cx="2.300" cy="-.6" rx="1.300" ry="2.500" transform="rotate(50 2.300 -.6)"/><path d="M0 0v3.500" stroke="#33609c" stroke-width=".7"/></g>
<g transform="translate(601.2 467.3) rotate(52) scale(0.90)" fill="#33609c"><ellipse cx="0" cy="-2.600" rx="1.500" ry="3"/><ellipse cx="-2.300" cy="-.6" rx="1.300" ry="2.500" transform="rotate(-50 -2.300 -.6)"/><ellipse cx="2.300" cy="-.6" rx="1.300" ry="2.500" transform="rotate(50 2.300 -.6)"/><path d="M0 0v3.500" stroke="#33609c" stroke-width=".7"/></g>
<g transform="translate(519.6 498.3) rotate(98) scale(1.09)" fill="#33609c"><ellipse cx="0" cy="-2.600" rx="1.500" ry="3"/><ellipse cx="-2.300" cy="-.6" rx="1.300" ry="2.500" transform="rotate(-50 -2.300 -.6)"/><ellipse cx="2.300" cy="-.6" rx="1.300" ry="2.500" transform="rotate(50 2.300 -.6)"/><path d="M0 0v3.500" stroke="#33609c" stroke-width=".7"/></g>
<g transform="translate(583.1 450.1) rotate(15) scale(1.18)" fill="#4f7cb6"><ellipse cx="0" cy="-2.600" rx="1.500" ry="3"/><ellipse cx="-2.300" cy="-.6" rx="1.300" ry="2.500" transform="rotate(-50 -2.300 -.6)"/><ellipse cx="2.300" cy="-.6" rx="1.300" ry="2.500" transform="rotate(50 2.300 -.6)"/><path d="M0 0v3.500" stroke="#4f7cb6" stroke-width=".7"/></g>
<g transform="translate(599.8 515.6) rotate(287) scale(0.90)" fill="#33609c"><ellipse cx="0" cy="-2.600" rx="1.500" ry="3"/><ellipse cx="-2.300" cy="-.6" rx="1.300" ry="2.500" transform="rotate(-50 -2.300 -.6)"/><ellipse cx="2.300" cy="-.6" rx="1.300" ry="2.500" transform="rotate(50 2.300 -.6)"/><path d="M0 0v3.500" stroke="#33609c" stroke-width=".7"/></g>
<g transform="translate(523.6 447.0) rotate(153) scale(0.97)" fill="#26477c"><ellipse cx="0" cy="-2.600" rx="1.500" ry="3"/><ellipse cx="-2.300" cy="-.6" rx="1.300" ry="2.500" transform="rotate(-50 -2.300 -.6)"/><ellipse cx="2.300" cy="-.6" rx="1.300" ry="2.500" transform="rotate(50 2.300 -.6)"/><path d="M0 0v3.500" stroke="#26477c" stroke-width=".7"/></g>
<g transform="translate(522.1 422.0) rotate(359) scale(1.18)" fill="#26477c"><ellipse cx="0" cy="-2.600" rx="1.500" ry="3"/><ellipse cx="-2.300" cy="-.6" rx="1.300" ry="2.500" transform="rotate(-50 -2.300 -.6)"/><ellipse cx="2.300" cy="-.6" rx="1.300" ry="2.500" transform="rotate(50 2.300 -.6)"/><path d="M0 0v3.500" stroke="#26477c" stroke-width=".7"/></g>
<g transform="translate(563.3 474.0) rotate(277) scale(1.15)" fill="#33609c"><ellipse cx="0" cy="-2.600" rx="1.500" ry="3"/><ellipse cx="-2.300" cy="-.6" rx="1.300" ry="2.500" transform="rotate(-50 -2.300 -.6)"/><ellipse cx="2.300" cy="-.6" rx="1.300" ry="2.500" transform="rotate(50 2.300 -.6)"/><path d="M0 0v3.500" stroke="#33609c" stroke-width=".7"/></g>
<g transform="translate(523.5 470.4) rotate(10) scale(1.02)" fill="#4f7cb6"><ellipse cx="0" cy="-2.600" rx="1.500" ry="3"/><ellipse cx="-2.300" cy="-.6" rx="1.300" ry="2.500" transform="rotate(-50 -2.300 -.6)"/><ellipse cx="2.300" cy="-.6" rx="1.300" ry="2.500" transform="rotate(50 2.300 -.6)"/><path d="M0 0v3.500" stroke="#4f7cb6" stroke-width=".7"/></g>
<g transform="translate(600.4 521.7) rotate(302) scale(1.06)" fill="#4f7cb6"><ellipse cx="0" cy="-2.600" rx="1.500" ry="3"/><ellipse cx="-2.300" cy="-.6" rx="1.300" ry="2.500" transform="rotate(-50 -2.300 -.6)"/><ellipse cx="2.300" cy="-.6" rx="1.300" ry="2.500" transform="rotate(50 2.300 -.6)"/><path d="M0 0v3.500" stroke="#4f7cb6" stroke-width=".7"/></g>
<g transform="translate(540.4 532.6) rotate(313) scale(1.18)" fill="#26477c"><ellipse cx="0" cy="-2.600" rx="1.500" ry="3"/><ellipse cx="-2.300" cy="-.6" rx="1.300" ry="2.500" transform="rotate(-50 -2.300 -.6)"/><ellipse cx="2.300" cy="-.6" rx="1.300" ry="2.500" transform="rotate(50 2.300 -.6)"/><path d="M0 0v3.500" stroke="#26477c" stroke-width=".7"/></g>
<g transform="translate(532.0 466.8) rotate(44) scale(0.90)" fill="#4f7cb6"><ellipse cx="0" cy="-2.600" rx="1.500" ry="3"/><ellipse cx="-2.300" cy="-.6" rx="1.300" ry="2.500" transform="rotate(-50 -2.300 -.6)"/><ellipse cx="2.300" cy="-.6" rx="1.300" ry="2.500" transform="rotate(50 2.300 -.6)"/><path d="M0 0v3.500" stroke="#4f7cb6" stroke-width=".7"/></g>
<g transform="translate(589.9 500.0) rotate(16) scale(0.89)" fill="#33609c"><ellipse cx="0" cy="-2.600" rx="1.500" ry="3"/><ellipse cx="-2.300" cy="-.6" rx="1.300" ry="2.500" transform="rotate(-50 -2.300 -.6)"/><ellipse cx="2.300" cy="-.6" rx="1.300" ry="2.500" transform="rotate(50 2.300 -.6)"/><path d="M0 0v3.500" stroke="#33609c" stroke-width=".7"/></g>
<g transform="translate(522.0 546.6) rotate(154) scale(0.99)" fill="#33609c"><ellipse cx="0" cy="-2.600" rx="1.500" ry="3"/><ellipse cx="-2.300" cy="-.6" rx="1.300" ry="2.500" transform="rotate(-50 -2.300 -.6)"/><ellipse cx="2.300" cy="-.6" rx="1.300" ry="2.500" transform="rotate(50 2.300 -.6)"/><path d="M0 0v3.500" stroke="#33609c" stroke-width=".7"/></g>
<g transform="translate(582.5 458.1) rotate(76) scale(1.09)" fill="#33609c"><ellipse cx="0" cy="-2.600" rx="1.500" ry="3"/><ellipse cx="-2.300" cy="-.6" rx="1.300" ry="2.500" transform="rotate(-50 -2.300 -.6)"/><ellipse cx="2.300" cy="-.6" rx="1.300" ry="2.500" transform="rotate(50 2.300 -.6)"/><path d="M0 0v3.500" stroke="#33609c" stroke-width=".7"/></g>
<g transform="translate(521.1 492.1) rotate(266) scale(1.12)" fill="#4f7cb6"><ellipse cx="0" cy="-2.600" rx="1.500" ry="3"/><ellipse cx="-2.300" cy="-.6" rx="1.300" ry="2.500" transform="rotate(-50 -2.300 -.6)"/><ellipse cx="2.300" cy="-.6" rx="1.300" ry="2.500" transform="rotate(50 2.300 -.6)"/><path d="M0 0v3.500" stroke="#4f7cb6" stroke-width=".7"/></g>
<g transform="translate(534.9 494.6) rotate(343) scale(0.85)" fill="#33609c"><ellipse cx="0" cy="-2.600" rx="1.500" ry="3"/><ellipse cx="-2.300" cy="-.6" rx="1.300" ry="2.500" transform="rotate(-50 -2.300 -.6)"/><ellipse cx="2.300" cy="-.6" rx="1.300" ry="2.500" transform="rotate(50 2.300 -.6)"/><path d="M0 0v3.500" stroke="#33609c" stroke-width=".7"/></g>
<g transform="translate(546.5 474.7) rotate(34) scale(1.19)" fill="#33609c"><ellipse cx="0" cy="-2.600" rx="1.500" ry="3"/><ellipse cx="-2.300" cy="-.6" rx="1.300" ry="2.500" transform="rotate(-50 -2.300 -.6)"/><ellipse cx="2.300" cy="-.6" rx="1.300" ry="2.500" transform="rotate(50 2.300 -.6)"/><path d="M0 0v3.500" stroke="#33609c" stroke-width=".7"/></g>
<g transform="translate(564.7 530.1) rotate(118) scale(0.97)" fill="#33609c"><ellipse cx="0" cy="-2.600" rx="1.500" ry="3"/><ellipse cx="-2.300" cy="-.6" rx="1.300" ry="2.500" transform="rotate(-50 -2.300 -.6)"/><ellipse cx="2.300" cy="-.6" rx="1.300" ry="2.500" transform="rotate(50 2.300 -.6)"/><path d="M0 0v3.500" stroke="#33609c" stroke-width=".7"/></g>
<g transform="translate(529.5 434.7) rotate(112) scale(0.99)" fill="#26477c"><ellipse cx="0" cy="-2.600" rx="1.500" ry="3"/><ellipse cx="-2.300" cy="-.6" rx="1.300" ry="2.500" transform="rotate(-50 -2.300 -.6)"/><ellipse cx="2.300" cy="-.6" rx="1.300" ry="2.500" transform="rotate(50 2.300 -.6)"/><path d="M0 0v3.500" stroke="#26477c" stroke-width=".7"/></g>
<g transform="translate(594.8 523.6) rotate(123) scale(0.87)" fill="#26477c"><ellipse cx="0" cy="-2.600" rx="1.500" ry="3"/><ellipse cx="-2.300" cy="-.6" rx="1.300" ry="2.500" transform="rotate(-50 -2.300 -.6)"/><ellipse cx="2.300" cy="-.6" rx="1.300" ry="2.500" transform="rotate(50 2.300 -.6)"/><path d="M0 0v3.500" stroke="#26477c" stroke-width=".7"/></g>
<g transform="translate(530.7 541.3) rotate(189) scale(1.10)" fill="#4f7cb6"><ellipse cx="0" cy="-2.600" rx="1.500" ry="3"/><ellipse cx="-2.300" cy="-.6" rx="1.300" ry="2.500" transform="rotate(-50 -2.300 -.6)"/><ellipse cx="2.300" cy="-.6" rx="1.300" ry="2.500" transform="rotate(50 2.300 -.6)"/><path d="M0 0v3.500" stroke="#4f7cb6" stroke-width=".7"/></g>
<g transform="translate(550.9 427.9) rotate(266) scale(1.01)" fill="#26477c"><ellipse cx="0" cy="-2.600" rx="1.500" ry="3"/><ellipse cx="-2.300" cy="-.6" rx="1.300" ry="2.500" transform="rotate(-50 -2.300 -.6)"/><ellipse cx="2.300" cy="-.6" rx="1.300" ry="2.500" transform="rotate(50 2.300 -.6)"/><path d="M0 0v3.500" stroke="#26477c" stroke-width=".7"/></g>
<g transform="translate(516.5 543.0) rotate(120) scale(0.91)" fill="#33609c"><ellipse cx="0" cy="-2.600" rx="1.500" ry="3"/><ellipse cx="-2.300" cy="-.6" rx="1.300" ry="2.500" transform="rotate(-50 -2.300 -.6)"/><ellipse cx="2.300" cy="-.6" rx="1.300" ry="2.500" transform="rotate(50 2.300 -.6)"/><path d="M0 0v3.500" stroke="#33609c" stroke-width=".7"/></g>
<g transform="translate(566.7 453.3) rotate(76) scale(0.94)" fill="#33609c"><ellipse cx="0" cy="-2.600" rx="1.500" ry="3"/><ellipse cx="-2.300" cy="-.6" rx="1.300" ry="2.500" transform="rotate(-50 -2.300 -.6)"/><ellipse cx="2.300" cy="-.6" rx="1.300" ry="2.500" transform="rotate(50 2.300 -.6)"/><path d="M0 0v3.500" stroke="#33609c" stroke-width=".7"/></g>
<g transform="translate(595.6 441.3) rotate(245) scale(1.12)" fill="#33609c"><ellipse cx="0" cy="-2.600" rx="1.500" ry="3"/><ellipse cx="-2.300" cy="-.6" rx="1.300" ry="2.500" transform="rotate(-50 -2.300 -.6)"/><ellipse cx="2.300" cy="-.6" rx="1.300" ry="2.500" transform="rotate(50 2.300 -.6)"/><path d="M0 0v3.500" stroke="#33609c" stroke-width=".7"/></g>
<g transform="translate(514.5 450.1) rotate(170) scale(0.93)" fill="#33609c"><ellipse cx="0" cy="-2.600" rx="1.500" ry="3"/><ellipse cx="-2.300" cy="-.6" rx="1.300" ry="2.500" transform="rotate(-50 -2.300 -.6)"/><ellipse cx="2.300" cy="-.6" rx="1.300" ry="2.500" transform="rotate(50 2.300 -.6)"/><path d="M0 0v3.500" stroke="#33609c" stroke-width=".7"/></g>
<g transform="translate(553.1 422.1) rotate(335) scale(0.94)" fill="#4f7cb6"><ellipse cx="0" cy="-2.600" rx="1.500" ry="3"/><ellipse cx="-2.300" cy="-.6" rx="1.300" ry="2.500" transform="rotate(-50 -2.300 -.6)"/><ellipse cx="2.300" cy="-.6" rx="1.300" ry="2.500" transform="rotate(50 2.300 -.6)"/><path d="M0 0v3.500" stroke="#4f7cb6" stroke-width=".7"/></g>
<g transform="translate(564.5 431.6) rotate(267) scale(0.94)" fill="#4f7cb6"><ellipse cx="0" cy="-2.600" rx="1.500" ry="3"/><ellipse cx="-2.300" cy="-.6" rx="1.300" ry="2.500" transform="rotate(-50 -2.300 -.6)"/><ellipse cx="2.300" cy="-.6" rx="1.300" ry="2.500" transform="rotate(50 2.300 -.6)"/><path d="M0 0v3.500" stroke="#4f7cb6" stroke-width=".7"/></g>
<g transform="translate(601.2 502.0) rotate(11) scale(0.96)" fill="#33609c"><ellipse cx="0" cy="-2.600" rx="1.500" ry="3"/><ellipse cx="-2.300" cy="-.6" rx="1.300" ry="2.500" transform="rotate(-50 -2.300 -.6)"/><ellipse cx="2.300" cy="-.6" rx="1.300" ry="2.500" transform="rotate(50 2.300 -.6)"/><path d="M0 0v3.500" stroke="#33609c" stroke-width=".7"/></g>
<g transform="translate(514.6 536.0) rotate(33) scale(1.03)" fill="#26477c"><ellipse cx="0" cy="-2.600" rx="1.500" ry="3"/><ellipse cx="-2.300" cy="-.6" rx="1.300" ry="2.500" transform="rotate(-50 -2.300 -.6)"/><ellipse cx="2.300" cy="-.6" rx="1.300" ry="2.500" transform="rotate(50 2.300 -.6)"/><path d="M0 0v3.500" stroke="#26477c" stroke-width=".7"/></g>
<g transform="translate(556.4 511.9) rotate(104) scale(1.13)" fill="#33609c"><ellipse cx="0" cy="-2.600" rx="1.500" ry="3"/><ellipse cx="-2.300" cy="-.6" rx="1.300" ry="2.500" transform="rotate(-50 -2.300 -.6)"/><ellipse cx="2.300" cy="-.6" rx="1.300" ry="2.500" transform="rotate(50 2.300 -.6)"/><path d="M0 0v3.500" stroke="#33609c" stroke-width=".7"/></g>
<g transform="translate(541.7 547.9) rotate(276) scale(0.88)" fill="#33609c"><ellipse cx="0" cy="-2.600" rx="1.500" ry="3"/><ellipse cx="-2.300" cy="-.6" rx="1.300" ry="2.500" transform="rotate(-50 -2.300 -.6)"/><ellipse cx="2.300" cy="-.6" rx="1.300" ry="2.500" transform="rotate(50 2.300 -.6)"/><path d="M0 0v3.500" stroke="#33609c" stroke-width=".7"/></g>
<g transform="translate(579.3 508.3) rotate(257) scale(1.00)" fill="#33609c"><ellipse cx="0" cy="-2.600" rx="1.500" ry="3"/><ellipse cx="-2.300" cy="-.6" rx="1.300" ry="2.500" transform="rotate(-50 -2.300 -.6)"/><ellipse cx="2.300" cy="-.6" rx="1.300" ry="2.500" transform="rotate(50 2.300 -.6)"/><path d="M0 0v3.500" stroke="#33609c" stroke-width=".7"/></g>
<g transform="translate(594.1 530.7) rotate(22) scale(1.04)" fill="#33609c"><ellipse cx="0" cy="-2.600" rx="1.500" ry="3"/><ellipse cx="-2.300" cy="-.6" rx="1.300" ry="2.500" transform="rotate(-50 -2.300 -.6)"/><ellipse cx="2.300" cy="-.6" rx="1.300" ry="2.500" transform="rotate(50 2.300 -.6)"/><path d="M0 0v3.500" stroke="#33609c" stroke-width=".7"/></g>
<g transform="translate(550.5 519.9) rotate(70) scale(1.08)" fill="#26477c"><ellipse cx="0" cy="-2.600" rx="1.500" ry="3"/><ellipse cx="-2.300" cy="-.6" rx="1.300" ry="2.500" transform="rotate(-50 -2.300 -.6)"/><ellipse cx="2.300" cy="-.6" rx="1.300" ry="2.500" transform="rotate(50 2.300 -.6)"/><path d="M0 0v3.500" stroke="#26477c" stroke-width=".7"/></g>
<g transform="translate(590.7 490.8) rotate(35) scale(1.20)" fill="#33609c"><ellipse cx="0" cy="-2.600" rx="1.500" ry="3"/><ellipse cx="-2.300" cy="-.6" rx="1.300" ry="2.500" transform="rotate(-50 -2.300 -.6)"/><ellipse cx="2.300" cy="-.6" rx="1.300" ry="2.500" transform="rotate(50 2.300 -.6)"/><path d="M0 0v3.500" stroke="#33609c" stroke-width=".7"/></g>
<g transform="translate(569.2 465.2) rotate(198) scale(1.00)" fill="#33609c"><ellipse cx="0" cy="-2.600" rx="1.500" ry="3"/><ellipse cx="-2.300" cy="-.6" rx="1.300" ry="2.500" transform="rotate(-50 -2.300 -.6)"/><ellipse cx="2.300" cy="-.6" rx="1.300" ry="2.500" transform="rotate(50 2.300 -.6)"/><path d="M0 0v3.500" stroke="#33609c" stroke-width=".7"/></g>
<g transform="translate(565.4 495.6) rotate(343) scale(0.97)" fill="#33609c"><ellipse cx="0" cy="-2.600" rx="1.500" ry="3"/><ellipse cx="-2.300" cy="-.6" rx="1.300" ry="2.500" transform="rotate(-50 -2.300 -.6)"/><ellipse cx="2.300" cy="-.6" rx="1.300" ry="2.500" transform="rotate(50 2.300 -.6)"/><path d="M0 0v3.500" stroke="#33609c" stroke-width=".7"/></g>
<g transform="translate(520.5 514.5) rotate(105) scale(1.17)" fill="#33609c"><ellipse cx="0" cy="-2.600" rx="1.500" ry="3"/><ellipse cx="-2.300" cy="-.6" rx="1.300" ry="2.500" transform="rotate(-50 -2.300 -.6)"/><ellipse cx="2.300" cy="-.6" rx="1.300" ry="2.500" transform="rotate(50 2.300 -.6)"/><path d="M0 0v3.500" stroke="#33609c" stroke-width=".7"/></g>
<g transform="translate(556.3 444.8) rotate(287) scale(1.18)" fill="#4f7cb6"><ellipse cx="0" cy="-2.600" rx="1.500" ry="3"/><ellipse cx="-2.300" cy="-.6" rx="1.300" ry="2.500" transform="rotate(-50 -2.300 -.6)"/><ellipse cx="2.300" cy="-.6" rx="1.300" ry="2.500" transform="rotate(50 2.300 -.6)"/><path d="M0 0v3.500" stroke="#4f7cb6" stroke-width=".7"/></g>
<g transform="translate(568.3 537.3) rotate(34) scale(1.19)" fill="#33609c"><ellipse cx="0" cy="-2.600" rx="1.500" ry="3"/><ellipse cx="-2.300" cy="-.6" rx="1.300" ry="2.500" transform="rotate(-50 -2.300 -.6)"/><ellipse cx="2.300" cy="-.6" rx="1.300" ry="2.500" transform="rotate(50 2.300 -.6)"/><path d="M0 0v3.500" stroke="#33609c" stroke-width=".7"/></g>
<g transform="translate(536.0 415.5) rotate(7) scale(1.02)" fill="#33609c"><ellipse cx="0" cy="-2.600" rx="1.500" ry="3"/><ellipse cx="-2.300" cy="-.6" rx="1.300" ry="2.500" transform="rotate(-50 -2.300 -.6)"/><ellipse cx="2.300" cy="-.6" rx="1.300" ry="2.500" transform="rotate(50 2.300 -.6)"/><path d="M0 0v3.500" stroke="#33609c" stroke-width=".7"/></g>
<g transform="translate(552.8 533.5) rotate(194) scale(1.00)" fill="#33609c"><ellipse cx="0" cy="-2.600" rx="1.500" ry="3"/><ellipse cx="-2.300" cy="-.6" rx="1.300" ry="2.500" transform="rotate(-50 -2.300 -.6)"/><ellipse cx="2.300" cy="-.6" rx="1.300" ry="2.500" transform="rotate(50 2.300 -.6)"/><path d="M0 0v3.500" stroke="#33609c" stroke-width=".7"/></g>
<g transform="translate(541.4 526.4) rotate(81) scale(0.87)" fill="#33609c"><ellipse cx="0" cy="-2.600" rx="1.500" ry="3"/><ellipse cx="-2.300" cy="-.6" rx="1.300" ry="2.500" transform="rotate(-50 -2.300 -.6)"/><ellipse cx="2.300" cy="-.6" rx="1.300" ry="2.500" transform="rotate(50 2.300 -.6)"/><path d="M0 0v3.500" stroke="#33609c" stroke-width=".7"/></g>
<g transform="translate(514.7 432.2) rotate(81) scale(1.19)" fill="#33609c"><ellipse cx="0" cy="-2.600" rx="1.500" ry="3"/><ellipse cx="-2.300" cy="-.6" rx="1.300" ry="2.500" transform="rotate(-50 -2.300 -.6)"/><ellipse cx="2.300" cy="-.6" rx="1.300" ry="2.500" transform="rotate(50 2.300 -.6)"/><path d="M0 0v3.500" stroke="#33609c" stroke-width=".7"/></g>
<g transform="translate(587.7 445.8) rotate(163) scale(0.90)" fill="#26477c"><ellipse cx="0" cy="-2.600" rx="1.500" ry="3"/><ellipse cx="-2.300" cy="-.6" rx="1.300" ry="2.500" transform="rotate(-50 -2.300 -.6)"/><ellipse cx="2.300" cy="-.6" rx="1.300" ry="2.500" transform="rotate(50 2.300 -.6)"/><path d="M0 0v3.500" stroke="#26477c" stroke-width=".7"/></g>
<g transform="translate(574.6 440.7) rotate(69) scale(1.13)" fill="#33609c"><ellipse cx="0" cy="-2.600" rx="1.500" ry="3"/><ellipse cx="-2.300" cy="-.6" rx="1.300" ry="2.500" transform="rotate(-50 -2.300 -.6)"/><ellipse cx="2.300" cy="-.6" rx="1.300" ry="2.500" transform="rotate(50 2.300 -.6)"/><path d="M0 0v3.500" stroke="#33609c" stroke-width=".7"/></g>
<g transform="translate(555.8 437.9) rotate(163) scale(0.92)" fill="#33609c"><ellipse cx="0" cy="-2.600" rx="1.500" ry="3"/><ellipse cx="-2.300" cy="-.6" rx="1.300" ry="2.500" transform="rotate(-50 -2.300 -.6)"/><ellipse cx="2.300" cy="-.6" rx="1.300" ry="2.500" transform="rotate(50 2.300 -.6)"/><path d="M0 0v3.500" stroke="#33609c" stroke-width=".7"/></g>
<g transform="translate(546.9 490.2) rotate(69) scale(1.16)" fill="#33609c"><ellipse cx="0" cy="-2.600" rx="1.500" ry="3"/><ellipse cx="-2.300" cy="-.6" rx="1.300" ry="2.500" transform="rotate(-50 -2.300 -.6)"/><ellipse cx="2.300" cy="-.6" rx="1.300" ry="2.500" transform="rotate(50 2.300 -.6)"/><path d="M0 0v3.500" stroke="#33609c" stroke-width=".7"/></g>
<g transform="translate(570.7 510.2) rotate(342) scale(0.98)" fill="#33609c"><ellipse cx="0" cy="-2.600" rx="1.500" ry="3"/><ellipse cx="-2.300" cy="-.6" rx="1.300" ry="2.500" transform="rotate(-50 -2.300 -.6)"/><ellipse cx="2.300" cy="-.6" rx="1.300" ry="2.500" transform="rotate(50 2.300 -.6)"/><path d="M0 0v3.500" stroke="#33609c" stroke-width=".7"/></g>
<g transform="translate(532.2 534.6) rotate(61) scale(0.90)" fill="#26477c"><ellipse cx="0" cy="-2.600" rx="1.500" ry="3"/><ellipse cx="-2.300" cy="-.6" rx="1.300" ry="2.500" transform="rotate(-50 -2.300 -.6)"/><ellipse cx="2.300" cy="-.6" rx="1.300" ry="2.500" transform="rotate(50 2.300 -.6)"/><path d="M0 0v3.500" stroke="#26477c" stroke-width=".7"/></g>
<g transform="translate(561.3 520.0) rotate(36) scale(1.10)" fill="#33609c"><ellipse cx="0" cy="-2.600" rx="1.500" ry="3"/><ellipse cx="-2.300" cy="-.6" rx="1.300" ry="2.500" transform="rotate(-50 -2.300 -.6)"/><ellipse cx="2.300" cy="-.6" rx="1.300" ry="2.500" transform="rotate(50 2.300 -.6)"/><path d="M0 0v3.500" stroke="#33609c" stroke-width=".7"/></g>
<g transform="translate(541.1 465.1) rotate(346) scale(0.89)" fill="#33609c"><ellipse cx="0" cy="-2.600" rx="1.500" ry="3"/><ellipse cx="-2.300" cy="-.6" rx="1.300" ry="2.500" transform="rotate(-50 -2.300 -.6)"/><ellipse cx="2.300" cy="-.6" rx="1.300" ry="2.500" transform="rotate(50 2.300 -.6)"/><path d="M0 0v3.500" stroke="#33609c" stroke-width=".7"/></g>
<g transform="translate(531.7 528.0) rotate(164) scale(1.05)" fill="#33609c"><ellipse cx="0" cy="-2.600" rx="1.500" ry="3"/><ellipse cx="-2.300" cy="-.6" rx="1.300" ry="2.500" transform="rotate(-50 -2.300 -.6)"/><ellipse cx="2.300" cy="-.6" rx="1.300" ry="2.500" transform="rotate(50 2.300 -.6)"/><path d="M0 0v3.500" stroke="#33609c" stroke-width=".7"/></g>
<g transform="translate(600.2 484.2) rotate(140) scale(1.03)" fill="#4f7cb6"><ellipse cx="0" cy="-2.600" rx="1.500" ry="3"/><ellipse cx="-2.300" cy="-.6" rx="1.300" ry="2.500" transform="rotate(-50 -2.300 -.6)"/><ellipse cx="2.300" cy="-.6" rx="1.300" ry="2.500" transform="rotate(50 2.300 -.6)"/><path d="M0 0v3.500" stroke="#4f7cb6" stroke-width=".7"/></g>
<g transform="translate(564.6 440.9) rotate(290) scale(1.12)" fill="#33609c"><ellipse cx="0" cy="-2.600" rx="1.500" ry="3"/><ellipse cx="-2.300" cy="-.6" rx="1.300" ry="2.500" transform="rotate(-50 -2.300 -.6)"/><ellipse cx="2.300" cy="-.6" rx="1.300" ry="2.500" transform="rotate(50 2.300 -.6)"/><path d="M0 0v3.500" stroke="#33609c" stroke-width=".7"/></g>
<g transform="translate(561.2 481.4) rotate(269) scale(1.18)" fill="#26477c"><ellipse cx="0" cy="-2.600" rx="1.500" ry="3"/><ellipse cx="-2.300" cy="-.6" rx="1.300" ry="2.500" transform="rotate(-50 -2.300 -.6)"/><ellipse cx="2.300" cy="-.6" rx="1.300" ry="2.500" transform="rotate(50 2.300 -.6)"/><path d="M0 0v3.500" stroke="#26477c" stroke-width=".7"/></g>
<g transform="translate(567.5 417.7) rotate(41) scale(0.86)" fill="#33609c"><ellipse cx="0" cy="-2.600" rx="1.500" ry="3"/><ellipse cx="-2.300" cy="-.6" rx="1.300" ry="2.500" transform="rotate(-50 -2.300 -.6)"/><ellipse cx="2.300" cy="-.6" rx="1.300" ry="2.500" transform="rotate(50 2.300 -.6)"/><path d="M0 0v3.500" stroke="#33609c" stroke-width=".7"/></g>
<g transform="translate(599.1 537.7) rotate(158) scale(0.92)" fill="#4f7cb6"><ellipse cx="0" cy="-2.600" rx="1.500" ry="3"/><ellipse cx="-2.300" cy="-.6" rx="1.300" ry="2.500" transform="rotate(-50 -2.300 -.6)"/><ellipse cx="2.300" cy="-.6" rx="1.300" ry="2.500" transform="rotate(50 2.300 -.6)"/><path d="M0 0v3.500" stroke="#4f7cb6" stroke-width=".7"/></g>
<g transform="translate(537.2 477.4) rotate(169) scale(0.89)" fill="#4f7cb6"><ellipse cx="0" cy="-2.600" rx="1.500" ry="3"/><ellipse cx="-2.300" cy="-.6" rx="1.300" ry="2.500" transform="rotate(-50 -2.300 -.6)"/><ellipse cx="2.300" cy="-.6" rx="1.300" ry="2.500" transform="rotate(50 2.300 -.6)"/><path d="M0 0v3.500" stroke="#4f7cb6" stroke-width=".7"/></g>
<g transform="translate(574.8 457.2) rotate(247) scale(1.01)" fill="#4f7cb6"><ellipse cx="0" cy="-2.600" rx="1.500" ry="3"/><ellipse cx="-2.300" cy="-.6" rx="1.300" ry="2.500" transform="rotate(-50 -2.300 -.6)"/><ellipse cx="2.300" cy="-.6" rx="1.300" ry="2.500" transform="rotate(50 2.300 -.6)"/><path d="M0 0v3.500" stroke="#4f7cb6" stroke-width=".7"/></g>
<g transform="translate(545.0 497.0) rotate(308) scale(1.01)" fill="#33609c"><ellipse cx="0" cy="-2.600" rx="1.500" ry="3"/><ellipse cx="-2.300" cy="-.6" rx="1.300" ry="2.500" transform="rotate(-50 -2.300 -.6)"/><ellipse cx="2.300" cy="-.6" rx="1.300" ry="2.500" transform="rotate(50 2.300 -.6)"/><path d="M0 0v3.500" stroke="#33609c" stroke-width=".7"/></g>
<g transform="translate(594.2 456.3) rotate(97) scale(1.18)" fill="#33609c"><ellipse cx="0" cy="-2.600" rx="1.500" ry="3"/><ellipse cx="-2.300" cy="-.6" rx="1.300" ry="2.500" transform="rotate(-50 -2.300 -.6)"/><ellipse cx="2.300" cy="-.6" rx="1.300" ry="2.500" transform="rotate(50 2.300 -.6)"/><path d="M0 0v3.500" stroke="#33609c" stroke-width=".7"/></g>
<g transform="translate(532.6 547.8) rotate(347) scale(1.00)" fill="#33609c"><ellipse cx="0" cy="-2.600" rx="1.500" ry="3"/><ellipse cx="-2.300" cy="-.6" rx="1.300" ry="2.500" transform="rotate(-50 -2.300 -.6)"/><ellipse cx="2.300" cy="-.6" rx="1.300" ry="2.500" transform="rotate(50 2.300 -.6)"/><path d="M0 0v3.500" stroke="#33609c" stroke-width=".7"/></g>
<g transform="translate(549.3 505.8) rotate(299) scale(1.04)" fill="#33609c"><ellipse cx="0" cy="-2.600" rx="1.500" ry="3"/><ellipse cx="-2.300" cy="-.6" rx="1.300" ry="2.500" transform="rotate(-50 -2.300 -.6)"/><ellipse cx="2.300" cy="-.6" rx="1.300" ry="2.500" transform="rotate(50 2.300 -.6)"/><path d="M0 0v3.500" stroke="#33609c" stroke-width=".7"/></g>
<g transform="translate(600.2 429.5) rotate(144) scale(0.87)" fill="#33609c"><ellipse cx="0" cy="-2.600" rx="1.500" ry="3"/><ellipse cx="-2.300" cy="-.6" rx="1.300" ry="2.500" transform="rotate(-50 -2.300 -.6)"/><ellipse cx="2.300" cy="-.6" rx="1.300" ry="2.500" transform="rotate(50 2.300 -.6)"/><path d="M0 0v3.500" stroke="#33609c" stroke-width=".7"/></g>
<g transform="translate(558.3 505.9) rotate(205) scale(1.19)" fill="#33609c"><ellipse cx="0" cy="-2.600" rx="1.500" ry="3"/><ellipse cx="-2.300" cy="-.6" rx="1.300" ry="2.500" transform="rotate(-50 -2.300 -.6)"/><ellipse cx="2.300" cy="-.6" rx="1.300" ry="2.500" transform="rotate(50 2.300 -.6)"/><path d="M0 0v3.500" stroke="#33609c" stroke-width=".7"/></g>
<g transform="translate(530.0 423.5) rotate(12) scale(1.00)" fill="#33609c"><ellipse cx="0" cy="-2.600" rx="1.500" ry="3"/><ellipse cx="-2.300" cy="-.6" rx="1.300" ry="2.500" transform="rotate(-50 -2.300 -.6)"/><ellipse cx="2.300" cy="-.6" rx="1.300" ry="2.500" transform="rotate(50 2.300 -.6)"/><path d="M0 0v3.500" stroke="#33609c" stroke-width=".7"/></g>
<g transform="translate(588.6 546.7) rotate(255) scale(1.08)" fill="#4f7cb6"><ellipse cx="0" cy="-2.600" rx="1.500" ry="3"/><ellipse cx="-2.300" cy="-.6" rx="1.300" ry="2.500" transform="rotate(-50 -2.300 -.6)"/><ellipse cx="2.300" cy="-.6" rx="1.300" ry="2.500" transform="rotate(50 2.300 -.6)"/><path d="M0 0v3.500" stroke="#4f7cb6" stroke-width=".7"/></g>
<g transform="translate(529.3 474.8) rotate(238) scale(0.91)" fill="#33609c"><ellipse cx="0" cy="-2.600" rx="1.500" ry="3"/><ellipse cx="-2.300" cy="-.6" rx="1.300" ry="2.500" transform="rotate(-50 -2.300 -.6)"/><ellipse cx="2.300" cy="-.6" rx="1.300" ry="2.500" transform="rotate(50 2.300 -.6)"/><path d="M0 0v3.500" stroke="#33609c" stroke-width=".7"/></g>
<g transform="translate(559.1 416.1) rotate(7) scale(0.96)" fill="#33609c"><ellipse cx="0" cy="-2.600" rx="1.500" ry="3"/><ellipse cx="-2.300" cy="-.6" rx="1.300" ry="2.500" transform="rotate(-50 -2.300 -.6)"/><ellipse cx="2.300" cy="-.6" rx="1.300" ry="2.500" transform="rotate(50 2.300 -.6)"/><path d="M0 0v3.500" stroke="#33609c" stroke-width=".7"/></g>
<g transform="translate(580.0 518.3) rotate(21) scale(0.94)" fill="#26477c"><ellipse cx="0" cy="-2.600" rx="1.500" ry="3"/><ellipse cx="-2.300" cy="-.6" rx="1.300" ry="2.500" transform="rotate(-50 -2.300 -.6)"/><ellipse cx="2.300" cy="-.6" rx="1.300" ry="2.500" transform="rotate(50 2.300 -.6)"/><path d="M0 0v3.500" stroke="#26477c" stroke-width=".7"/></g>
<g transform="translate(514.0 461.7) rotate(316) scale(0.98)" fill="#4f7cb6"><ellipse cx="0" cy="-2.600" rx="1.500" ry="3"/><ellipse cx="-2.300" cy="-.6" rx="1.300" ry="2.500" transform="rotate(-50 -2.300 -.6)"/><ellipse cx="2.300" cy="-.6" rx="1.300" ry="2.500" transform="rotate(50 2.300 -.6)"/><path d="M0 0v3.500" stroke="#4f7cb6" stroke-width=".7"/></g>
<g transform="translate(561.0 466.2) rotate(242) scale(1.07)" fill="#26477c"><ellipse cx="0" cy="-2.600" rx="1.500" ry="3"/><ellipse cx="-2.300" cy="-.6" rx="1.300" ry="2.500" transform="rotate(-50 -2.300 -.6)"/><ellipse cx="2.300" cy="-.6" rx="1.300" ry="2.500" transform="rotate(50 2.300 -.6)"/><path d="M0 0v3.500" stroke="#26477c" stroke-width=".7"/></g>
<g transform="translate(601.2 417.1) rotate(162) scale(0.97)" fill="#33609c"><ellipse cx="0" cy="-2.600" rx="1.500" ry="3"/><ellipse cx="-2.300" cy="-.6" rx="1.300" ry="2.500" transform="rotate(-50 -2.300 -.6)"/><ellipse cx="2.300" cy="-.6" rx="1.300" ry="2.500" transform="rotate(50 2.300 -.6)"/><path d="M0 0v3.500" stroke="#33609c" stroke-width=".7"/></g>
<g transform="translate(551.7 478.0) rotate(296) scale(1.06)" fill="#4f7cb6"><ellipse cx="0" cy="-2.600" rx="1.500" ry="3"/><ellipse cx="-2.300" cy="-.6" rx="1.300" ry="2.500" transform="rotate(-50 -2.300 -.6)"/><ellipse cx="2.300" cy="-.6" rx="1.300" ry="2.500" transform="rotate(50 2.300 -.6)"/><path d="M0 0v3.500" stroke="#4f7cb6" stroke-width=".7"/></g>
<g transform="translate(600.6 446.7) rotate(219) scale(1.06)" fill="#4f7cb6"><ellipse cx="0" cy="-2.600" rx="1.500" ry="3"/><ellipse cx="-2.300" cy="-.6" rx="1.300" ry="2.500" transform="rotate(-50 -2.300 -.6)"/><ellipse cx="2.300" cy="-.6" rx="1.300" ry="2.500" transform="rotate(50 2.300 -.6)"/><path d="M0 0v3.500" stroke="#4f7cb6" stroke-width=".7"/></g>
<g transform="translate(560.1 539.6) rotate(131) scale(1.18)" fill="#26477c"><ellipse cx="0" cy="-2.600" rx="1.500" ry="3"/><ellipse cx="-2.300" cy="-.6" rx="1.300" ry="2.500" transform="rotate(-50 -2.300 -.6)"/><ellipse cx="2.300" cy="-.6" rx="1.300" ry="2.500" transform="rotate(50 2.300 -.6)"/><path d="M0 0v3.500" stroke="#26477c" stroke-width=".7"/></g>
<g transform="translate(523.2 533.6) rotate(251) scale(1.09)" fill="#33609c"><ellipse cx="0" cy="-2.600" rx="1.500" ry="3"/><ellipse cx="-2.300" cy="-.6" rx="1.300" ry="2.500" transform="rotate(-50 -2.300 -.6)"/><ellipse cx="2.300" cy="-.6" rx="1.300" ry="2.500" transform="rotate(50 2.300 -.6)"/><path d="M0 0v3.500" stroke="#33609c" stroke-width=".7"/></g>
<g transform="translate(583.6 497.7) rotate(318) scale(1.01)" fill="#33609c"><ellipse cx="0" cy="-2.600" rx="1.500" ry="3"/><ellipse cx="-2.300" cy="-.6" rx="1.300" ry="2.500" transform="rotate(-50 -2.300 -.6)"/><ellipse cx="2.300" cy="-.6" rx="1.300" ry="2.500" transform="rotate(50 2.300 -.6)"/><path d="M0 0v3.500" stroke="#33609c" stroke-width=".7"/></g>
<g transform="translate(580.8 439.4) rotate(287) scale(1.12)" fill="#26477c"><ellipse cx="0" cy="-2.600" rx="1.500" ry="3"/><ellipse cx="-2.300" cy="-.6" rx="1.300" ry="2.500" transform="rotate(-50 -2.300 -.6)"/><ellipse cx="2.300" cy="-.6" rx="1.300" ry="2.500" transform="rotate(50 2.300 -.6)"/><path d="M0 0v3.500" stroke="#26477c" stroke-width=".7"/></g>
<g transform="translate(537.4 471.0) rotate(160) scale(1.04)" fill="#33609c"><ellipse cx="0" cy="-2.600" rx="1.500" ry="3"/><ellipse cx="-2.300" cy="-.6" rx="1.300" ry="2.500" transform="rotate(-50 -2.300 -.6)"/><ellipse cx="2.300" cy="-.6" rx="1.300" ry="2.500" transform="rotate(50 2.300 -.6)"/><path d="M0 0v3.500" stroke="#33609c" stroke-width=".7"/></g>
<g transform="translate(569.1 427.7) rotate(206) scale(1.10)" fill="#33609c"><ellipse cx="0" cy="-2.600" rx="1.500" ry="3"/><ellipse cx="-2.300" cy="-.6" rx="1.300" ry="2.500" transform="rotate(-50 -2.300 -.6)"/><ellipse cx="2.300" cy="-.6" rx="1.300" ry="2.500" transform="rotate(50 2.300 -.6)"/><path d="M0 0v3.500" stroke="#33609c" stroke-width=".7"/></g>
<g transform="translate(520.8 504.6) rotate(173) scale(1.07)" fill="#26477c"><ellipse cx="0" cy="-2.600" rx="1.500" ry="3"/><ellipse cx="-2.300" cy="-.6" rx="1.300" ry="2.500" transform="rotate(-50 -2.300 -.6)"/><ellipse cx="2.300" cy="-.6" rx="1.300" ry="2.500" transform="rotate(50 2.300 -.6)"/><path d="M0 0v3.500" stroke="#26477c" stroke-width=".7"/></g>
<g transform="translate(571.8 546.6) rotate(324) scale(0.97)" fill="#33609c"><ellipse cx="0" cy="-2.600" rx="1.500" ry="3"/><ellipse cx="-2.300" cy="-.6" rx="1.300" ry="2.500" transform="rotate(-50 -2.300 -.6)"/><ellipse cx="2.300" cy="-.6" rx="1.300" ry="2.500" transform="rotate(50 2.300 -.6)"/><path d="M0 0v3.500" stroke="#33609c" stroke-width=".7"/></g>
<g transform="translate(551.5 463.5) rotate(286) scale(1.02)" fill="#33609c"><ellipse cx="0" cy="-2.600" rx="1.500" ry="3"/><ellipse cx="-2.300" cy="-.6" rx="1.300" ry="2.500" transform="rotate(-50 -2.300 -.6)"/><ellipse cx="2.300" cy="-.6" rx="1.300" ry="2.500" transform="rotate(50 2.300 -.6)"/><path d="M0 0v3.500" stroke="#33609c" stroke-width=".7"/></g>
<g transform="translate(538.5 433.2) rotate(263) scale(1.09)" fill="#33609c"><ellipse cx="0" cy="-2.600" rx="1.500" ry="3"/><ellipse cx="-2.300" cy="-.6" rx="1.300" ry="2.500" transform="rotate(-50 -2.300 -.6)"/><ellipse cx="2.300" cy="-.6" rx="1.300" ry="2.500" transform="rotate(50 2.300 -.6)"/><path d="M0 0v3.500" stroke="#33609c" stroke-width=".7"/></g>
<g transform="translate(530.5 489.5) rotate(339) scale(0.99)" fill="#33609c"><ellipse cx="0" cy="-2.600" rx="1.500" ry="3"/><ellipse cx="-2.300" cy="-.6" rx="1.300" ry="2.500" transform="rotate(-50 -2.300 -.6)"/><ellipse cx="2.300" cy="-.6" rx="1.300" ry="2.500" transform="rotate(50 2.300 -.6)"/><path d="M0 0v3.500" stroke="#33609c" stroke-width=".7"/></g>
<g transform="translate(515.0 483.1) rotate(254) scale(1.15)" fill="#4f7cb6"><ellipse cx="0" cy="-2.600" rx="1.500" ry="3"/><ellipse cx="-2.300" cy="-.6" rx="1.300" ry="2.500" transform="rotate(-50 -2.300 -.6)"/><ellipse cx="2.300" cy="-.6" rx="1.300" ry="2.500" transform="rotate(50 2.300 -.6)"/><path d="M0 0v3.500" stroke="#4f7cb6" stroke-width=".7"/></g>
<g transform="translate(571.4 446.9) rotate(291) scale(0.87)" fill="#33609c"><ellipse cx="0" cy="-2.600" rx="1.500" ry="3"/><ellipse cx="-2.300" cy="-.6" rx="1.300" ry="2.500" transform="rotate(-50 -2.300 -.6)"/><ellipse cx="2.300" cy="-.6" rx="1.300" ry="2.500" transform="rotate(50 2.300 -.6)"/><path d="M0 0v3.500" stroke="#33609c" stroke-width=".7"/></g>
<g transform="translate(595.3 469.0) rotate(163) scale(1.07)" fill="#33609c"><ellipse cx="0" cy="-2.600" rx="1.500" ry="3"/><ellipse cx="-2.300" cy="-.6" rx="1.300" ry="2.500" transform="rotate(-50 -2.300 -.6)"/><ellipse cx="2.300" cy="-.6" rx="1.300" ry="2.500" transform="rotate(50 2.300 -.6)"/><path d="M0 0v3.500" stroke="#33609c" stroke-width=".7"/></g>
<g transform="translate(546.8 436.5) rotate(31) scale(1.19)" fill="#33609c"><ellipse cx="0" cy="-2.600" rx="1.500" ry="3"/><ellipse cx="-2.300" cy="-.6" rx="1.300" ry="2.500" transform="rotate(-50 -2.300 -.6)"/><ellipse cx="2.300" cy="-.6" rx="1.300" ry="2.500" transform="rotate(50 2.300 -.6)"/><path d="M0 0v3.500" stroke="#33609c" stroke-width=".7"/></g>
<g transform="translate(541.1 487.5) rotate(143) scale(1.00)" fill="#4f7cb6"><ellipse cx="0" cy="-2.600" rx="1.500" ry="3"/><ellipse cx="-2.300" cy="-.6" rx="1.300" ry="2.500" transform="rotate(-50 -2.300 -.6)"/><ellipse cx="2.300" cy="-.6" rx="1.300" ry="2.500" transform="rotate(50 2.300 -.6)"/><path d="M0 0v3.500" stroke="#4f7cb6" stroke-width=".7"/></g>
<g transform="translate(591.2 483.2) rotate(43) scale(1.13)" fill="#26477c"><ellipse cx="0" cy="-2.600" rx="1.500" ry="3"/><ellipse cx="-2.300" cy="-.6" rx="1.300" ry="2.500" transform="rotate(-50 -2.300 -.6)"/><ellipse cx="2.300" cy="-.6" rx="1.300" ry="2.500" transform="rotate(50 2.300 -.6)"/><path d="M0 0v3.500" stroke="#26477c" stroke-width=".7"/></g>
<g transform="translate(513.1 524.1) rotate(120) scale(1.14)" fill="#4f7cb6"><ellipse cx="0" cy="-2.600" rx="1.500" ry="3"/><ellipse cx="-2.300" cy="-.6" rx="1.300" ry="2.500" transform="rotate(-50 -2.300 -.6)"/><ellipse cx="2.300" cy="-.6" rx="1.300" ry="2.500" transform="rotate(50 2.300 -.6)"/><path d="M0 0v3.500" stroke="#4f7cb6" stroke-width=".7"/></g>
<g transform="translate(599.0 492.6) rotate(21) scale(0.92)" fill="#26477c"><ellipse cx="0" cy="-2.600" rx="1.500" ry="3"/><ellipse cx="-2.300" cy="-.6" rx="1.300" ry="2.500" transform="rotate(-50 -2.300 -.6)"/><ellipse cx="2.300" cy="-.6" rx="1.300" ry="2.500" transform="rotate(50 2.300 -.6)"/><path d="M0 0v3.500" stroke="#26477c" stroke-width=".7"/></g>
<g transform="translate(554.6 543.6) rotate(324) scale(0.89)" fill="#4f7cb6"><ellipse cx="0" cy="-2.600" rx="1.500" ry="3"/><ellipse cx="-2.300" cy="-.6" rx="1.300" ry="2.500" transform="rotate(-50 -2.300 -.6)"/><ellipse cx="2.300" cy="-.6" rx="1.300" ry="2.500" transform="rotate(50 2.300 -.6)"/><path d="M0 0v3.500" stroke="#4f7cb6" stroke-width=".7"/></g>
<g transform="translate(547.7 458.4) rotate(180) scale(0.87)" fill="#4f7cb6"><ellipse cx="0" cy="-2.600" rx="1.500" ry="3"/><ellipse cx="-2.300" cy="-.6" rx="1.300" ry="2.500" transform="rotate(-50 -2.300 -.6)"/><ellipse cx="2.300" cy="-.6" rx="1.300" ry="2.500" transform="rotate(50 2.300 -.6)"/><path d="M0 0v3.500" stroke="#4f7cb6" stroke-width=".7"/></g>
<g transform="translate(550.1 416.1) rotate(37) scale(1.15)" fill="#33609c"><ellipse cx="0" cy="-2.600" rx="1.500" ry="3"/><ellipse cx="-2.300" cy="-.6" rx="1.300" ry="2.500" transform="rotate(-50 -2.300 -.6)"/><ellipse cx="2.300" cy="-.6" rx="1.300" ry="2.500" transform="rotate(50 2.300 -.6)"/><path d="M0 0v3.500" stroke="#33609c" stroke-width=".7"/></g>
<g transform="translate(544.7 481.1) rotate(77) scale(0.96)" fill="#26477c"><ellipse cx="0" cy="-2.600" rx="1.500" ry="3"/><ellipse cx="-2.300" cy="-.6" rx="1.300" ry="2.500" transform="rotate(-50 -2.300 -.6)"/><ellipse cx="2.300" cy="-.6" rx="1.300" ry="2.500" transform="rotate(50 2.300 -.6)"/><path d="M0 0v3.500" stroke="#26477c" stroke-width=".7"/></g>
<g transform="translate(564.9 507.4) rotate(340) scale(1.03)" fill="#4f7cb6"><ellipse cx="0" cy="-2.600" rx="1.500" ry="3"/><ellipse cx="-2.300" cy="-.6" rx="1.300" ry="2.500" transform="rotate(-50 -2.300 -.6)"/><ellipse cx="2.300" cy="-.6" rx="1.300" ry="2.500" transform="rotate(50 2.300 -.6)"/><path d="M0 0v3.500" stroke="#4f7cb6" stroke-width=".7"/></g>
<g transform="translate(542.6 538.5) rotate(100) scale(1.09)" fill="#33609c"><ellipse cx="0" cy="-2.600" rx="1.500" ry="3"/><ellipse cx="-2.300" cy="-.6" rx="1.300" ry="2.500" transform="rotate(-50 -2.300 -.6)"/><ellipse cx="2.300" cy="-.6" rx="1.300" ry="2.500" transform="rotate(50 2.300 -.6)"/><path d="M0 0v3.500" stroke="#33609c" stroke-width=".7"/></g>
<g transform="translate(594.8 546.9) rotate(228) scale(1.19)" fill="#26477c"><ellipse cx="0" cy="-2.600" rx="1.500" ry="3"/><ellipse cx="-2.300" cy="-.6" rx="1.300" ry="2.500" transform="rotate(-50 -2.300 -.6)"/><ellipse cx="2.300" cy="-.6" rx="1.300" ry="2.500" transform="rotate(50 2.300 -.6)"/><path d="M0 0v3.500" stroke="#26477c" stroke-width=".7"/></g>
<g transform="translate(573.4 433.4) rotate(65) scale(1.13)" fill="#33609c"><ellipse cx="0" cy="-2.600" rx="1.500" ry="3"/><ellipse cx="-2.300" cy="-.6" rx="1.300" ry="2.500" transform="rotate(-50 -2.300 -.6)"/><ellipse cx="2.300" cy="-.6" rx="1.300" ry="2.500" transform="rotate(50 2.300 -.6)"/><path d="M0 0v3.500" stroke="#33609c" stroke-width=".7"/></g>
<g transform="translate(555.3 469.1) rotate(140) scale(1.13)" fill="#26477c"><ellipse cx="0" cy="-2.600" rx="1.500" ry="3"/><ellipse cx="-2.300" cy="-.6" rx="1.300" ry="2.500" transform="rotate(-50 -2.300 -.6)"/><ellipse cx="2.300" cy="-.6" rx="1.300" ry="2.500" transform="rotate(50 2.300 -.6)"/><path d="M0 0v3.500" stroke="#26477c" stroke-width=".7"/></g>
<g transform="translate(524.1 486.0) rotate(90) scale(1.14)" fill="#33609c"><ellipse cx="0" cy="-2.600" rx="1.500" ry="3"/><ellipse cx="-2.300" cy="-.6" rx="1.300" ry="2.500" transform="rotate(-50 -2.300 -.6)"/><ellipse cx="2.300" cy="-.6" rx="1.300" ry="2.500" transform="rotate(50 2.300 -.6)"/><path d="M0 0v3.500" stroke="#33609c" stroke-width=".7"/></g>
<g transform="translate(537.9 499.8) rotate(155) scale(0.87)" fill="#33609c"><ellipse cx="0" cy="-2.600" rx="1.500" ry="3"/><ellipse cx="-2.300" cy="-.6" rx="1.300" ry="2.500" transform="rotate(-50 -2.300 -.6)"/><ellipse cx="2.300" cy="-.6" rx="1.300" ry="2.500" transform="rotate(50 2.300 -.6)"/><path d="M0 0v3.500" stroke="#33609c" stroke-width=".7"/></g>
<g transform="translate(564.2 486.8) rotate(11) scale(1.08)" fill="#4f7cb6"><ellipse cx="0" cy="-2.600" rx="1.500" ry="3"/><ellipse cx="-2.300" cy="-.6" rx="1.300" ry="2.500" transform="rotate(-50 -2.300 -.6)"/><ellipse cx="2.300" cy="-.6" rx="1.300" ry="2.500" transform="rotate(50 2.300 -.6)"/><path d="M0 0v3.500" stroke="#4f7cb6" stroke-width=".7"/></g>
<g transform="translate(587.8 519.4) rotate(241) scale(1.09)" fill="#4f7cb6"><ellipse cx="0" cy="-2.600" rx="1.500" ry="3"/><ellipse cx="-2.300" cy="-.6" rx="1.300" ry="2.500" transform="rotate(-50 -2.300 -.6)"/><ellipse cx="2.300" cy="-.6" rx="1.300" ry="2.500" transform="rotate(50 2.300 -.6)"/><path d="M0 0v3.500" stroke="#4f7cb6" stroke-width=".7"/></g>
<g transform="translate(516.6 468.0) rotate(204) scale(1.19)" fill="#33609c"><ellipse cx="0" cy="-2.600" rx="1.500" ry="3"/><ellipse cx="-2.300" cy="-.6" rx="1.300" ry="2.500" transform="rotate(-50 -2.300 -.6)"/><ellipse cx="2.300" cy="-.6" rx="1.300" ry="2.500" transform="rotate(50 2.300 -.6)"/><path d="M0 0v3.500" stroke="#33609c" stroke-width=".7"/></g>
<g transform="translate(597.3 462.2) rotate(81) scale(0.94)" fill="#33609c"><ellipse cx="0" cy="-2.600" rx="1.500" ry="3"/><ellipse cx="-2.300" cy="-.6" rx="1.300" ry="2.500" transform="rotate(-50 -2.300 -.6)"/><ellipse cx="2.300" cy="-.6" rx="1.300" ry="2.500" transform="rotate(50 2.300 -.6)"/><path d="M0 0v3.500" stroke="#33609c" stroke-width=".7"/></g>
<g transform="translate(594.6 416.7) rotate(147) scale(0.96)" fill="#33609c"><ellipse cx="0" cy="-2.600" rx="1.500" ry="3"/><ellipse cx="-2.300" cy="-.6" rx="1.300" ry="2.500" transform="rotate(-50 -2.300 -.6)"/><ellipse cx="2.300" cy="-.6" rx="1.300" ry="2.500" transform="rotate(50 2.300 -.6)"/><path d="M0 0v3.500" stroke="#33609c" stroke-width=".7"/></g>
<g transform="translate(526.2 441.4) rotate(95) scale(1.09)" fill="#4f7cb6"><ellipse cx="0" cy="-2.600" rx="1.500" ry="3"/><ellipse cx="-2.300" cy="-.6" rx="1.300" ry="2.500" transform="rotate(-50 -2.300 -.6)"/><ellipse cx="2.300" cy="-.6" rx="1.300" ry="2.500" transform="rotate(50 2.300 -.6)"/><path d="M0 0v3.500" stroke="#4f7cb6" stroke-width=".7"/></g>
<g transform="translate(600.8 453.9) rotate(133) scale(1.08)" fill="#4f7cb6"><ellipse cx="0" cy="-2.600" rx="1.500" ry="3"/><ellipse cx="-2.300" cy="-.6" rx="1.300" ry="2.500" transform="rotate(-50 -2.300 -.6)"/><ellipse cx="2.300" cy="-.6" rx="1.300" ry="2.500" transform="rotate(50 2.300 -.6)"/><path d="M0 0v3.500" stroke="#4f7cb6" stroke-width=".7"/></g>
<g transform="translate(528.0 503.1) rotate(342) scale(1.00)" fill="#33609c"><ellipse cx="0" cy="-2.600" rx="1.500" ry="3"/><ellipse cx="-2.300" cy="-.6" rx="1.300" ry="2.500" transform="rotate(-50 -2.300 -.6)"/><ellipse cx="2.300" cy="-.6" rx="1.300" ry="2.500" transform="rotate(50 2.300 -.6)"/><path d="M0 0v3.500" stroke="#33609c" stroke-width=".7"/></g>
<g transform="translate(577.4 447.7) rotate(208) scale(1.12)" fill="#33609c"><ellipse cx="0" cy="-2.600" rx="1.500" ry="3"/><ellipse cx="-2.300" cy="-.6" rx="1.300" ry="2.500" transform="rotate(-50 -2.300 -.6)"/><ellipse cx="2.300" cy="-.6" rx="1.300" ry="2.500" transform="rotate(50 2.300 -.6)"/><path d="M0 0v3.500" stroke="#33609c" stroke-width=".7"/></g>
<g transform="translate(524.3 464.5) rotate(1) scale(0.94)" fill="#4f7cb6"><ellipse cx="0" cy="-2.600" rx="1.500" ry="3"/><ellipse cx="-2.300" cy="-.6" rx="1.300" ry="2.500" transform="rotate(-50 -2.300 -.6)"/><ellipse cx="2.300" cy="-.6" rx="1.300" ry="2.500" transform="rotate(50 2.300 -.6)"/><path d="M0 0v3.500" stroke="#4f7cb6" stroke-width=".7"/></g>
<g transform="translate(542.7 417.6) rotate(252) scale(0.93)" fill="#33609c"><ellipse cx="0" cy="-2.600" rx="1.500" ry="3"/><ellipse cx="-2.300" cy="-.6" rx="1.300" ry="2.500" transform="rotate(-50 -2.300 -.6)"/><ellipse cx="2.300" cy="-.6" rx="1.300" ry="2.500" transform="rotate(50 2.300 -.6)"/><path d="M0 0v3.500" stroke="#33609c" stroke-width=".7"/></g>
<g transform="translate(556.9 430.1) rotate(180) scale(0.86)" fill="#33609c"><ellipse cx="0" cy="-2.600" rx="1.500" ry="3"/><ellipse cx="-2.300" cy="-.6" rx="1.300" ry="2.500" transform="rotate(-50 -2.300 -.6)"/><ellipse cx="2.300" cy="-.6" rx="1.300" ry="2.500" transform="rotate(50 2.300 -.6)"/><path d="M0 0v3.500" stroke="#33609c" stroke-width=".7"/></g>
<g transform="translate(520.1 438.5) rotate(82) scale(1.13)" fill="#33609c"><ellipse cx="0" cy="-2.600" rx="1.500" ry="3"/><ellipse cx="-2.300" cy="-.6" rx="1.300" ry="2.500" transform="rotate(-50 -2.300 -.6)"/><ellipse cx="2.300" cy="-.6" rx="1.300" ry="2.500" transform="rotate(50 2.300 -.6)"/><path d="M0 0v3.500" stroke="#33609c" stroke-width=".7"/></g>
<g transform="translate(572.9 470.2) rotate(117) scale(1.08)" fill="#33609c"><ellipse cx="0" cy="-2.600" rx="1.500" ry="3"/><ellipse cx="-2.300" cy="-.6" rx="1.300" ry="2.500" transform="rotate(-50 -2.300 -.6)"/><ellipse cx="2.300" cy="-.6" rx="1.300" ry="2.500" transform="rotate(50 2.300 -.6)"/><path d="M0 0v3.500" stroke="#33609c" stroke-width=".7"/></g>
<g transform="translate(524.6 429.5) rotate(60) scale(1.03)" fill="#33609c"><ellipse cx="0" cy="-2.600" rx="1.500" ry="3"/><ellipse cx="-2.300" cy="-.6" rx="1.300" ry="2.500" transform="rotate(-50 -2.300 -.6)"/><ellipse cx="2.300" cy="-.6" rx="1.300" ry="2.500" transform="rotate(50 2.300 -.6)"/><path d="M0 0v3.500" stroke="#33609c" stroke-width=".7"/></g>
<g transform="translate(593.6 447.7) rotate(161) scale(0.95)" fill="#33609c"><ellipse cx="0" cy="-2.600" rx="1.500" ry="3"/><ellipse cx="-2.300" cy="-.6" rx="1.300" ry="2.500" transform="rotate(-50 -2.300 -.6)"/><ellipse cx="2.300" cy="-.6" rx="1.300" ry="2.500" transform="rotate(50 2.300 -.6)"/><path d="M0 0v3.500" stroke="#33609c" stroke-width=".7"/></g>
<g transform="translate(517.8 426.4) rotate(95) scale(1.08)" fill="#33609c"><ellipse cx="0" cy="-2.600" rx="1.500" ry="3"/><ellipse cx="-2.300" cy="-.6" rx="1.300" ry="2.500" transform="rotate(-50 -2.300 -.6)"/><ellipse cx="2.300" cy="-.6" rx="1.300" ry="2.500" transform="rotate(50 2.300 -.6)"/><path d="M0 0v3.500" stroke="#33609c" stroke-width=".7"/></g>
<g transform="translate(551.9 496.8) rotate(351) scale(0.97)" fill="#33609c"><ellipse cx="0" cy="-2.600" rx="1.500" ry="3"/><ellipse cx="-2.300" cy="-.6" rx="1.300" ry="2.500" transform="rotate(-50 -2.300 -.6)"/><ellipse cx="2.300" cy="-.6" rx="1.300" ry="2.500" transform="rotate(50 2.300 -.6)"/><path d="M0 0v3.500" stroke="#33609c" stroke-width=".7"/></g>
<g transform="translate(563.4 544.7) rotate(27) scale(0.95)" fill="#33609c"><ellipse cx="0" cy="-2.600" rx="1.500" ry="3"/><ellipse cx="-2.300" cy="-.6" rx="1.300" ry="2.500" transform="rotate(-50 -2.300 -.6)"/><ellipse cx="2.300" cy="-.6" rx="1.300" ry="2.500" transform="rotate(50 2.300 -.6)"/><path d="M0 0v3.500" stroke="#33609c" stroke-width=".7"/></g>
<g transform="translate(561.3 448.0) rotate(297) scale(0.96)" fill="#4f7cb6"><ellipse cx="0" cy="-2.600" rx="1.500" ry="3"/><ellipse cx="-2.300" cy="-.6" rx="1.300" ry="2.500" transform="rotate(-50 -2.300 -.6)"/><ellipse cx="2.300" cy="-.6" rx="1.300" ry="2.500" transform="rotate(50 2.300 -.6)"/><path d="M0 0v3.500" stroke="#4f7cb6" stroke-width=".7"/></g>
<g transform="translate(524.8 479.0) rotate(237) scale(0.97)" fill="#33609c"><ellipse cx="0" cy="-2.600" rx="1.500" ry="3"/><ellipse cx="-2.300" cy="-.6" rx="1.300" ry="2.500" transform="rotate(-50 -2.300 -.6)"/><ellipse cx="2.300" cy="-.6" rx="1.300" ry="2.500" transform="rotate(50 2.300 -.6)"/><path d="M0 0v3.500" stroke="#33609c" stroke-width=".7"/></g>
<circle cx="595.8" cy="427.0" r="2.500" fill="#33609c"/>
<circle cx="594.6" cy="431.6" r="2.500" fill="#33609c"/>
<circle cx="591.1" cy="435.1" r="2.500" fill="#33609c"/>
<circle cx="586.5" cy="436.3" r="2.500" fill="#33609c"/>
<circle cx="581.9" cy="435.1" r="2.500" fill="#33609c"/>
<circle cx="578.4" cy="431.6" r="2.500" fill="#33609c"/>
<circle cx="577.2" cy="427.0" r="2.500" fill="#33609c"/>
<circle cx="578.4" cy="422.4" r="2.500" fill="#33609c"/>
<circle cx="581.9" cy="418.9" r="2.500" fill="#33609c"/>
<circle cx="586.5" cy="417.7" r="2.500" fill="#33609c"/>
<circle cx="591.1" cy="418.9" r="2.500" fill="#33609c"/>
<circle cx="594.6" cy="422.4" r="2.500" fill="#33609c"/>
<circle cx="586.5" cy="427" r="9.300" fill="#4270ae"/>
<circle cx="586.5" cy="427" r="7.600" fill="none" stroke="#26477c" stroke-width=".7" stroke-dasharray="2 1.200"/>
<circle cx="586.5" cy="427" r="4.800" fill="#5a88c4"/>
<path d="M584.0 428c0-4 5-4.500 5-1 0 2.500-3 2.500-3 .5" fill="none" stroke="#c4d6ee" stroke-width=".9"/>
<circle cx="546.4" cy="449.0" r="2.500" fill="#33609c"/>
<circle cx="545.2" cy="453.6" r="2.500" fill="#33609c"/>
<circle cx="541.8" cy="457.1" r="2.500" fill="#33609c"/>
<circle cx="537.1" cy="458.3" r="2.500" fill="#33609c"/>
<circle cx="532.5" cy="457.1" r="2.500" fill="#33609c"/>
<circle cx="529.0" cy="453.6" r="2.500" fill="#33609c"/>
<circle cx="527.8" cy="449.0" r="2.500" fill="#33609c"/>
<circle cx="529.0" cy="444.4" r="2.500" fill="#33609c"/>
<circle cx="532.5" cy="440.9" r="2.500" fill="#33609c"/>
<circle cx="537.1" cy="439.7" r="2.500" fill="#33609c"/>
<circle cx="541.8" cy="440.9" r="2.500" fill="#33609c"/>
<circle cx="545.2" cy="444.4" r="2.500" fill="#33609c"/>
<circle cx="537.1" cy="449" r="9.300" fill="#4270ae"/>
<circle cx="537.1" cy="449" r="7.600" fill="none" stroke="#26477c" stroke-width=".7" stroke-dasharray="2 1.200"/>
<circle cx="537.1" cy="449" r="4.800" fill="#5a88c4"/>
<path d="M534.6 450c0-4 5-4.500 5-1 0 2.500-3 2.500-3 .5" fill="none" stroke="#c4d6ee" stroke-width=".9"/>
<circle cx="586.8" cy="482.4" r="2.500" fill="#33609c"/>
<circle cx="585.6" cy="487.0" r="2.500" fill="#33609c"/>
<circle cx="582.1" cy="490.5" r="2.500" fill="#33609c"/>
<circle cx="577.5" cy="491.7" r="2.500" fill="#33609c"/>
<circle cx="572.9" cy="490.5" r="2.500" fill="#33609c"/>
<circle cx="569.4" cy="487.0" r="2.500" fill="#33609c"/>
<circle cx="568.2" cy="482.4" r="2.500" fill="#33609c"/>
<circle cx="569.4" cy="477.8" r="2.500" fill="#33609c"/>
<circle cx="572.9" cy="474.3" r="2.500" fill="#33609c"/>
<circle cx="577.5" cy="473.1" r="2.500" fill="#33609c"/>
<circle cx="582.1" cy="474.3" r="2.500" fill="#33609c"/>
<circle cx="585.6" cy="477.8" r="2.500" fill="#33609c"/>
<circle cx="577.5" cy="482.4" r="9.300" fill="#4270ae"/>
<circle cx="577.5" cy="482.4" r="7.600" fill="none" stroke="#26477c" stroke-width=".7" stroke-dasharray="2 1.200"/>
<circle cx="577.5" cy="482.4" r="4.800" fill="#5a88c4"/>
<path d="M575.0 483.4c0-4 5-4.500 5-1 0 2.500-3 2.500-3 .5" fill="none" stroke="#c4d6ee" stroke-width=".9"/>
<circle cx="545.3" cy="514.2" r="2.500" fill="#33609c"/>
<circle cx="544.1" cy="518.9" r="2.500" fill="#33609c"/>
<circle cx="540.6" cy="522.3" r="2.500" fill="#33609c"/>
<circle cx="536.0" cy="523.5" r="2.500" fill="#33609c"/>
<circle cx="531.4" cy="522.3" r="2.500" fill="#33609c"/>
<circle cx="527.9" cy="518.9" r="2.500" fill="#33609c"/>
<circle cx="526.7" cy="514.2" r="2.500" fill="#33609c"/>
<circle cx="527.9" cy="509.6" r="2.500" fill="#33609c"/>
<circle cx="531.4" cy="506.1" r="2.500" fill="#33609c"/>
<circle cx="536.0" cy="504.9" r="2.500" fill="#33609c"/>
<circle cx="540.6" cy="506.1" r="2.500" fill="#33609c"/>
<circle cx="544.1" cy="509.6" r="2.500" fill="#33609c"/>
<circle cx="536" cy="514.2" r="9.300" fill="#4270ae"/>
<circle cx="536" cy="514.2" r="7.600" fill="none" stroke="#26477c" stroke-width=".7" stroke-dasharray="2 1.200"/>
<circle cx="536" cy="514.2" r="4.800" fill="#5a88c4"/>
<path d="M533.5 515.2c0-4 5-4.500 5-1 0 2.500-3 2.500-3 .5" fill="none" stroke="#c4d6ee" stroke-width=".9"/>
<circle cx="590.9" cy="534.6" r="2.500" fill="#33609c"/>
<circle cx="589.7" cy="539.2" r="2.500" fill="#33609c"/>
<circle cx="586.2" cy="542.7" r="2.500" fill="#33609c"/>
<circle cx="581.6" cy="543.9" r="2.500" fill="#33609c"/>
<circle cx="577.0" cy="542.7" r="2.500" fill="#33609c"/>
<circle cx="573.5" cy="539.2" r="2.500" fill="#33609c"/>
<circle cx="572.3" cy="534.6" r="2.500" fill="#33609c"/>
<circle cx="573.5" cy="530.0" r="2.500" fill="#33609c"/>
<circle cx="577.0" cy="526.5" r="2.500" fill="#33609c"/>
<circle cx="581.6" cy="525.3" r="2.500" fill="#33609c"/>
<circle cx="586.2" cy="526.5" r="2.500" fill="#33609c"/>
<circle cx="589.7" cy="530.0" r="2.500" fill="#33609c"/>
<circle cx="581.6" cy="534.6" r="9.300" fill="#4270ae"/>
<circle cx="581.6" cy="534.6" r="7.600" fill="none" stroke="#26477c" stroke-width=".7" stroke-dasharray="2 1.200"/>
<circle cx="581.6" cy="534.6" r="4.800" fill="#5a88c4"/>
<path d="M579.1 535.6c0-4 5-4.500 5-1 0 2.500-3 2.500-3 .5" fill="none" stroke="#c4d6ee" stroke-width=".9"/>
<rect x="510.700" y="547.300" width="93" height="1.200" fill="#8a7458"/>
</g>
<g clip-path="url(#cC)">
<rect x="511" y="549" width="93" height="106" fill="#f4f3f0"/>
<rect x="511.500" y="549.700" width="92.200" height="17.500" fill="#eeeeec"/>
<rect x="511.500" y="567.200" width="92.200" height="19.200" fill="#b4bbc9"/>
<path d="M513.0 551c3 0 6 1 8 4 1-3 3-4 6-4-1 4-2 7-5 9 2 1 3 3 3 5-3 0-5-1-7-3-2 2-4 3-7 3 0-3 1-5 3-6-2-2-2-5-1-8z" fill="#26477c"/>
<path d="M524.0 557c2 2 3 5 2 8M527.0 553l2 5" fill="none" stroke="#33609c" stroke-width="1"/>
<path d="M529.3 551c3 0 6 1 8 4 1-3 3-4 6-4-1 4-2 7-5 9 2 1 3 3 3 5-3 0-5-1-7-3-2 2-4 3-7 3 0-3 1-5 3-6-2-2-2-5-1-8z" fill="#26477c"/>
<path d="M540.3 557c2 2 3 5 2 8M543.3 553l2 5" fill="none" stroke="#33609c" stroke-width="1"/>
<path d="M545.6 551c3 0 6 1 8 4 1-3 3-4 6-4-1 4-2 7-5 9 2 1 3 3 3 5-3 0-5-1-7-3-2 2-4 3-7 3 0-3 1-5 3-6-2-2-2-5-1-8z" fill="#26477c"/>
<path d="M556.6 557c2 2 3 5 2 8M559.6 553l2 5" fill="none" stroke="#33609c" stroke-width="1"/>
<path d="M561.9 551c3 0 6 1 8 4 1-3 3-4 6-4-1 4-2 7-5 9 2 1 3 3 3 5-3 0-5-1-7-3-2 2-4 3-7 3 0-3 1-5 3-6-2-2-2-5-1-8z" fill="#26477c"/>
<path d="M572.9 557c2 2 3 5 2 8M575.9 553l2 5" fill="none" stroke="#33609c" stroke-width="1"/>
<path d="M578.2 551c3 0 6 1 8 4 1-3 3-4 6-4-1 4-2 7-5 9 2 1 3 3 3 5-3 0-5-1-7-3-2 2-4 3-7 3 0-3 1-5 3-6-2-2-2-5-1-8z" fill="#26477c"/>
<path d="M589.2 557c2 2 3 5 2 8M592.2 553l2 5" fill="none" stroke="#33609c" stroke-width="1"/>
<path d="M594.5 551c3 0 6 1 8 4 1-3 3-4 6-4-1 4-2 7-5 9 2 1 3 3 3 5-3 0-5-1-7-3-2 2-4 3-7 3 0-3 1-5 3-6-2-2-2-5-1-8z" fill="#26477c"/>
<path d="M605.5 557c2 2 3 5 2 8M608.5 553l2 5" fill="none" stroke="#33609c" stroke-width="1"/>
<circle cx="522.5" cy="574.2" r="2.400" fill="#f6f6f4"/>
<circle cx="525.6" cy="576.5" r="2.400" fill="#f6f6f4"/>
<circle cx="524.4" cy="580.2" r="2.400" fill="#f6f6f4"/>
<circle cx="520.6" cy="580.2" r="2.400" fill="#f6f6f4"/>
<circle cx="519.4" cy="576.5" r="2.400" fill="#f6f6f4"/>
<circle cx="522.5" cy="577.500" r="1.300" fill="#aab2c2"/>
<path d="M528.5 583c2-3 5-3 7 0" fill="none" stroke="#e4e6ea" stroke-width="1.200"/>
<circle cx="542.0" cy="574.2" r="2.400" fill="#f6f6f4"/>
<circle cx="545.1" cy="576.5" r="2.400" fill="#f6f6f4"/>
<circle cx="543.9" cy="580.2" r="2.400" fill="#f6f6f4"/>
<circle cx="540.1" cy="580.2" r="2.400" fill="#f6f6f4"/>
<circle cx="538.9" cy="576.5" r="2.400" fill="#f6f6f4"/>
<circle cx="542.0" cy="577.500" r="1.300" fill="#aab2c2"/>
<path d="M548.0 583c2-3 5-3 7 0" fill="none" stroke="#e4e6ea" stroke-width="1.200"/>
<circle cx="561.5" cy="574.2" r="2.400" fill="#f6f6f4"/>
<circle cx="564.6" cy="576.5" r="2.400" fill="#f6f6f4"/>
<circle cx="563.4" cy="580.2" r="2.400" fill="#f6f6f4"/>
<circle cx="559.6" cy="580.2" r="2.400" fill="#f6f6f4"/>
<circle cx="558.4" cy="576.5" r="2.400" fill="#f6f6f4"/>
<circle cx="561.5" cy="577.500" r="1.300" fill="#aab2c2"/>
<path d="M567.5 583c2-3 5-3 7 0" fill="none" stroke="#e4e6ea" stroke-width="1.200"/>
<circle cx="581.0" cy="574.2" r="2.400" fill="#f6f6f4"/>
<circle cx="584.1" cy="576.5" r="2.400" fill="#f6f6f4"/>
<circle cx="582.9" cy="580.2" r="2.400" fill="#f6f6f4"/>
<circle cx="579.1" cy="580.2" r="2.400" fill="#f6f6f4"/>
<circle cx="577.9" cy="576.5" r="2.400" fill="#f6f6f4"/>
<circle cx="581.0" cy="577.500" r="1.300" fill="#aab2c2"/>
<path d="M587.0 583c2-3 5-3 7 0" fill="none" stroke="#e4e6ea" stroke-width="1.200"/>
<circle cx="600.5" cy="574.2" r="2.400" fill="#f6f6f4"/>
<circle cx="603.6" cy="576.5" r="2.400" fill="#f6f6f4"/>
<circle cx="602.4" cy="580.2" r="2.400" fill="#f6f6f4"/>
<circle cx="598.6" cy="580.2" r="2.400" fill="#f6f6f4"/>
<circle cx="597.4" cy="576.5" r="2.400" fill="#f6f6f4"/>
<circle cx="600.5" cy="577.500" r="1.300" fill="#aab2c2"/>
<path d="M606.5 583c2-3 5-3 7 0" fill="none" stroke="#e4e6ea" stroke-width="1.200"/>
<path d="M511.500 570.500q4.900-4 9.800 0t9.800 0t9.800 0t9.800 0t9.800 0t9.800 0t9.800 0t9.800 0t9.800 0t9.800 0" fill="none" stroke="#8c96aa" stroke-width="1.100"/>
<path d="M511.500 585.500h92.200" stroke="#26477c" stroke-width="1.200" stroke-dasharray="3 2"/>
<rect x="511.500" y="590.300" width="92.200" height="34.400" fill="#f0efe9"/>
<rect x="511.500" y="590.300" width="92.200" height=".9" fill="#b9b4a8"/><rect x="511.500" y="623.800" width="92.200" height=".9" fill="#b9b4a8"/>
<ellipse cx="559" cy="605.5" rx="2.8" ry="8.4" fill="#3b6aaa" transform="rotate(-66 559 611.5)"/>
<ellipse cx="559" cy="605.5" rx="2.8" ry="8.4" fill="#3b6aaa" transform="rotate(-33 559 611.5)"/>
<ellipse cx="559" cy="605.5" rx="2.8" ry="8.4" fill="#3b6aaa" transform="rotate(0 559 611.5)"/>
<ellipse cx="559" cy="605.5" rx="2.8" ry="8.4" fill="#3b6aaa" transform="rotate(33 559 611.5)"/>
<ellipse cx="559" cy="605.5" rx="2.8" ry="8.4" fill="#3b6aaa" transform="rotate(66 559 611.5)"/>
<ellipse cx="559" cy="613.3" rx="9.6" ry="3.1" fill="#33609c"/>
<path d="M559 613v9M552 622h14" stroke="#33609c" stroke-width="1.500" fill="none"/>
<path d="M512.5 598c2-4 7-5 10-2-1 4-6 6-10 2z" fill="#3b6aaa" transform="rotate(-20 517.5 598)"/>
<path d="M529 598c2-4 7-5 10-2-1 4-6 6-10 2z" fill="#3b6aaa" transform="rotate(15 534 598)"/>
<path d="M570 598c2-4 7-5 10-2-1 4-6 6-10 2z" fill="#3b6aaa" transform="rotate(-15 575 598)"/>
<path d="M583 598c2-4 7-5 10-2-1 4-6 6-10 2z" fill="#3b6aaa" transform="rotate(20 588 598)"/>
<path d="M595.5 598c2-4 7-5 10-2-1 4-6 6-10 2z" fill="#3b6aaa" transform="rotate(-10 600.5 598)"/>
<path d="M528 602l3.500 7h-2.300v5h-2.400v-5h-2.300z" fill="#3b6aaa"/>
<path d="M519 616c3-2 6-1 9 1 3-2 6-3 9-1" fill="none" stroke="#33609c" stroke-width="1.300"/>
<path d="M590 602l3.500 7h-2.300v5h-2.400v-5h-2.300z" fill="#3b6aaa"/>
<path d="M581 616c3-2 6-1 9 1 3-2 6-3 9-1" fill="none" stroke="#33609c" stroke-width="1.300"/>
<path d="M511.5 622.500c0-5 4-7 6.500-4 2.500-3 6.500-1 6.500 4z" fill="#4a78b6"/><circle cx="518" cy="619.500" r="1.600" fill="#f1f2f2"/>
<path d="M533.5 622.500c0-5 4-7 6.500-4 2.500-3 6.500-1 6.500 4z" fill="#4a78b6"/><circle cx="540" cy="619.500" r="1.600" fill="#f1f2f2"/>
<path d="M571.5 622.500c0-5 4-7 6.500-4 2.500-3 6.500-1 6.500 4z" fill="#4a78b6"/><circle cx="578" cy="619.500" r="1.600" fill="#f1f2f2"/>
<path d="M592.5 622.500c0-5 4-7 6.500-4 2.500-3 6.500-1 6.500 4z" fill="#4a78b6"/><circle cx="599" cy="619.500" r="1.600" fill="#f1f2f2"/>
<rect x="511.500" y="629.400" width="92.200" height="25" fill="#e2e6ee"/>
<rect x="511.500" y="629.400" width="92.200" height="1" fill="#26477c"/>
<ellipse cx="520.6" cy="633.7" rx="1.700" ry="3.300" fill="#26477c" transform="rotate(45 520.6 637)"/>
<ellipse cx="520.6" cy="633.7" rx="1.700" ry="3.300" fill="#26477c" transform="rotate(135 520.6 637)"/>
<ellipse cx="520.6" cy="633.7" rx="1.700" ry="3.300" fill="#26477c" transform="rotate(225 520.6 637)"/>
<ellipse cx="520.6" cy="633.7" rx="1.700" ry="3.300" fill="#26477c" transform="rotate(315 520.6 637)"/>
<circle cx="520.6" cy="637" r="1.100" fill="#26477c"/>
<path d="M513.6 645.500c2 1 4 1 5 0h4c1 1 3 1 5 0-1 2.500-3 3.500-5 3.500l1.500 2.500h3v2.500h-13v-2.500h3l1.500-2.500c-2 0-4-1-5-3.500z" fill="#26477c"/>
<path d="M530.25 633l2 3.500-2 3.500-2-3.500z" fill="#33609c"/><circle cx="530.25" cy="648" r="1.800" fill="#33609c"/>
<ellipse cx="539.9" cy="633.7" rx="1.700" ry="3.300" fill="#26477c" transform="rotate(45 539.9 637)"/>
<ellipse cx="539.9" cy="633.7" rx="1.700" ry="3.300" fill="#26477c" transform="rotate(135 539.9 637)"/>
<ellipse cx="539.9" cy="633.7" rx="1.700" ry="3.300" fill="#26477c" transform="rotate(225 539.9 637)"/>
<ellipse cx="539.9" cy="633.7" rx="1.700" ry="3.300" fill="#26477c" transform="rotate(315 539.9 637)"/>
<circle cx="539.9" cy="637" r="1.100" fill="#26477c"/>
<path d="M532.9 645.500c2 1 4 1 5 0h4c1 1 3 1 5 0-1 2.500-3 3.500-5 3.500l1.500 2.500h3v2.500h-13v-2.500h3l1.500-2.500c-2 0-4-1-5-3.500z" fill="#26477c"/>
<path d="M549.55 633l2 3.500-2 3.500-2-3.500z" fill="#33609c"/><circle cx="549.55" cy="648" r="1.800" fill="#33609c"/>
<ellipse cx="559.2" cy="633.7" rx="1.700" ry="3.300" fill="#26477c" transform="rotate(45 559.2 637)"/>
<ellipse cx="559.2" cy="633.7" rx="1.700" ry="3.300" fill="#26477c" transform="rotate(135 559.2 637)"/>
<ellipse cx="559.2" cy="633.7" rx="1.700" ry="3.300" fill="#26477c" transform="rotate(225 559.2 637)"/>
<ellipse cx="559.2" cy="633.7" rx="1.700" ry="3.300" fill="#26477c" transform="rotate(315 559.2 637)"/>
<circle cx="559.2" cy="637" r="1.100" fill="#26477c"/>
<path d="M552.2 645.500c2 1 4 1 5 0h4c1 1 3 1 5 0-1 2.500-3 3.500-5 3.500l1.500 2.500h3v2.500h-13v-2.500h3l1.500-2.500c-2 0-4-1-5-3.500z" fill="#26477c"/>
<path d="M568.85 633l2 3.500-2 3.500-2-3.500z" fill="#33609c"/><circle cx="568.85" cy="648" r="1.800" fill="#33609c"/>
<ellipse cx="578.5" cy="633.7" rx="1.700" ry="3.300" fill="#26477c" transform="rotate(45 578.5 637)"/>
<ellipse cx="578.5" cy="633.7" rx="1.700" ry="3.300" fill="#26477c" transform="rotate(135 578.5 637)"/>
<ellipse cx="578.5" cy="633.7" rx="1.700" ry="3.300" fill="#26477c" transform="rotate(225 578.5 637)"/>
<ellipse cx="578.5" cy="633.7" rx="1.700" ry="3.300" fill="#26477c" transform="rotate(315 578.5 637)"/>
<circle cx="578.5" cy="637" r="1.100" fill="#26477c"/>
<path d="M571.5 645.500c2 1 4 1 5 0h4c1 1 3 1 5 0-1 2.500-3 3.500-5 3.500l1.500 2.500h3v2.500h-13v-2.500h3l1.500-2.500c-2 0-4-1-5-3.500z" fill="#26477c"/>
<path d="M588.15 633l2 3.500-2 3.500-2-3.500z" fill="#33609c"/><circle cx="588.15" cy="648" r="1.800" fill="#33609c"/>
<ellipse cx="597.8000000000001" cy="633.7" rx="1.700" ry="3.300" fill="#26477c" transform="rotate(45 597.8000000000001 637)"/>
<ellipse cx="597.8000000000001" cy="633.7" rx="1.700" ry="3.300" fill="#26477c" transform="rotate(135 597.8000000000001 637)"/>
<ellipse cx="597.8000000000001" cy="633.7" rx="1.700" ry="3.300" fill="#26477c" transform="rotate(225 597.8000000000001 637)"/>
<ellipse cx="597.8000000000001" cy="633.7" rx="1.700" ry="3.300" fill="#26477c" transform="rotate(315 597.8000000000001 637)"/>
<circle cx="597.8000000000001" cy="637" r="1.100" fill="#26477c"/>
<path d="M590.8000000000001 645.500c2 1 4 1 5 0h4c1 1 3 1 5 0-1 2.500-3 3.500-5 3.500l1.500 2.500h3v2.500h-13v-2.500h3l1.500-2.500c-2 0-4-1-5-3.500z" fill="#26477c"/>
<path d="M607.45 633l2 3.500-2 3.500-2-3.500z" fill="#33609c"/><circle cx="607.45" cy="648" r="1.800" fill="#33609c"/>
<ellipse cx="617.1" cy="633.7" rx="1.700" ry="3.300" fill="#26477c" transform="rotate(45 617.1 637)"/>
<ellipse cx="617.1" cy="633.7" rx="1.700" ry="3.300" fill="#26477c" transform="rotate(135 617.1 637)"/>
<ellipse cx="617.1" cy="633.7" rx="1.700" ry="3.300" fill="#26477c" transform="rotate(225 617.1 637)"/>
<ellipse cx="617.1" cy="633.7" rx="1.700" ry="3.300" fill="#26477c" transform="rotate(315 617.1 637)"/>
<circle cx="617.1" cy="637" r="1.100" fill="#26477c"/>
<path d="M610.1 645.500c2 1 4 1 5 0h4c1 1 3 1 5 0-1 2.500-3 3.500-5 3.500l1.500 2.500h3v2.500h-13v-2.500h3l1.500-2.500c-2 0-4-1-5-3.500z" fill="#26477c"/>
<path d="M626.75 633l2 3.500-2 3.500-2-3.500z" fill="#33609c"/><circle cx="626.75" cy="648" r="1.800" fill="#33609c"/>
</g>
<g clip-path="url(#cB)">
<rect x="606" y="412" width="92" height="244" fill="#f5f3ee"/>
<rect x="606.500" y="412.300" width="91" height="41.700" fill="#7e4630"/>
<rect x="606.500" y="412.300" width="91" height="3.200" fill="#553618"/>
<rect x="606.500" y="415.500" width="91" height="24" fill="#6f422c"/>
<circle cx="611.5" cy="420.500" r="2.700" fill="#c97a68"/>
<path d="M617.3 417v7" stroke="#3e5a3a" stroke-width="2"/>
<circle cx="623.2" cy="420.500" r="2.700" fill="#d4a888"/>
<path d="M629.0 417v7" stroke="#3e5a3a" stroke-width="2"/>
<circle cx="634.9" cy="420.500" r="2.700" fill="#b8604e"/>
<path d="M640.6999999999999 417v7" stroke="#3e5a3a" stroke-width="2"/>
<circle cx="646.6" cy="420.500" r="2.700" fill="#c9907a"/>
<path d="M652.4 417v7" stroke="#3e5a3a" stroke-width="2"/>
<circle cx="658.3" cy="420.500" r="2.700" fill="#c97a68"/>
<path d="M664.0999999999999 417v7" stroke="#3e5a3a" stroke-width="2"/>
<circle cx="670.0" cy="420.500" r="2.700" fill="#d4a888"/>
<path d="M675.8 417v7" stroke="#3e5a3a" stroke-width="2"/>
<circle cx="681.7" cy="420.500" r="2.700" fill="#b8604e"/>
<path d="M687.5 417v7" stroke="#3e5a3a" stroke-width="2"/>
<circle cx="693.4" cy="420.500" r="2.700" fill="#c9907a"/>
<path d="M699.1999999999999 417v7" stroke="#3e5a3a" stroke-width="2"/>
<path d="M606.500 434q5.700-11 11.400-1t11.400 0q5.700-9 11.400-2 3 4 5.700 4t5.700-4q5.700-7 11.400 2 5.700 10 11.400 1t11.400 1 5.700 4 5.700-2" fill="none" stroke="#27402c" stroke-width="4.200"/>
<path d="M606.500 427.500q7.600-5 15.200 0t15.200 0t15.200 0t15.200 0t15.200 0t15.200 0" fill="none" stroke="#3f5f40" stroke-width="2.200"/>
<circle cx="609" cy="431.500" r="1.700" fill="#d98a78"/>
<circle cx="620" cy="431.500" r="1.700" fill="#b9d0b0"/>
<circle cx="631" cy="431.500" r="1.700" fill="#e9c1a8"/>
<circle cx="642" cy="431.500" r="1.700" fill="#d98a78"/>
<circle cx="653" cy="431.500" r="1.700" fill="#b9d0b0"/>
<circle cx="664" cy="431.500" r="1.700" fill="#e9c1a8"/>
<circle cx="675" cy="431.500" r="1.700" fill="#d98a78"/>
<circle cx="686" cy="431.500" r="1.700" fill="#b9d0b0"/>
<circle cx="697" cy="431.500" r="1.700" fill="#e9c1a8"/>
<rect x="606.500" y="439.500" width="91" height="6.500" fill="#7f8e98"/>
<circle cx="612.0" cy="443.500" r="2.600" fill="#d7a090"/>
<circle cx="623.7" cy="443.500" r="2.600" fill="#9ab0b8"/>
<circle cx="635.4" cy="443.500" r="2.600" fill="#d7a090"/>
<circle cx="647.1" cy="443.500" r="2.600" fill="#9ab0b8"/>
<circle cx="658.8" cy="443.500" r="2.600" fill="#d7a090"/>
<circle cx="670.5" cy="443.500" r="2.600" fill="#9ab0b8"/>
<circle cx="682.2" cy="443.500" r="2.600" fill="#d7a090"/>
<circle cx="693.9" cy="443.500" r="2.600" fill="#9ab0b8"/>
<path d="M642 446c2-6 16-6 18 0z" fill="#dd9282"/>
<rect x="606.500" y="446" width="91" height="5.300" fill="#d89684"/>
<circle cx="608.5" cy="448.600" r="1.100" fill="#f0c8ba"/>
<circle cx="613.4" cy="448.600" r="1.100" fill="#f0c8ba"/>
<circle cx="618.3" cy="448.600" r="1.100" fill="#f0c8ba"/>
<circle cx="623.2" cy="448.600" r="1.100" fill="#f0c8ba"/>
<circle cx="628.1" cy="448.600" r="1.100" fill="#f0c8ba"/>
<circle cx="633.0" cy="448.600" r="1.100" fill="#f0c8ba"/>
<circle cx="637.9" cy="448.600" r="1.100" fill="#f0c8ba"/>
<circle cx="642.8" cy="448.600" r="1.100" fill="#f0c8ba"/>
<circle cx="647.7" cy="448.600" r="1.100" fill="#f0c8ba"/>
<circle cx="652.6" cy="448.600" r="1.100" fill="#f0c8ba"/>
<circle cx="657.5" cy="448.600" r="1.100" fill="#f0c8ba"/>
<circle cx="662.4" cy="448.600" r="1.100" fill="#f0c8ba"/>
<circle cx="667.3" cy="448.600" r="1.100" fill="#f0c8ba"/>
<circle cx="672.2" cy="448.600" r="1.100" fill="#f0c8ba"/>
<circle cx="677.1" cy="448.600" r="1.100" fill="#f0c8ba"/>
<circle cx="682.0" cy="448.600" r="1.100" fill="#f0c8ba"/>
<circle cx="686.9" cy="448.600" r="1.100" fill="#f0c8ba"/>
<circle cx="691.8" cy="448.600" r="1.100" fill="#f0c8ba"/>
<circle cx="696.7" cy="448.600" r="1.100" fill="#f0c8ba"/>
<rect x="606.500" y="451.300" width="91" height="2.700" fill="#94562c"/>
<rect x="606.500" y="460.400" width="91" height="88" fill="#83a8b8"/>
<rect x="606.500" y="460.400" width="91" height="7" fill="#8a6628"/>
<rect x="606.500" y="460.400" width="91" height="1.600" fill="#6a4c1c"/>
<circle cx="632.1" cy="496.2" r="0.7" fill="#6f94a8"/>
<circle cx="615.7" cy="506.1" r="0.5" fill="#9dbccb"/>
<circle cx="632.9" cy="518.4" r="0.7" fill="#6a8f9a"/>
<circle cx="636.5" cy="471.8" r="0.5" fill="#a8c4c8"/>
<circle cx="633.6" cy="514.4" r="0.9" fill="#6a8f9a"/>
<circle cx="626.4" cy="517.7" r="0.9" fill="#6f94a8"/>
<circle cx="618.0" cy="491.4" r="0.8" fill="#a8c4c8"/>
<circle cx="659.8" cy="490.7" r="0.5" fill="#6f94a8"/>
<circle cx="624.0" cy="509.4" r="0.5" fill="#9dbccb"/>
<circle cx="623.5" cy="520.3" r="0.9" fill="#a8c4c8"/>
<circle cx="631.1" cy="511.1" r="0.5" fill="#6f94a8"/>
<circle cx="648.1" cy="491.4" r="0.6" fill="#6a8f9a"/>
<circle cx="624.4" cy="481.6" r="1.0" fill="#6f94a8"/>
<circle cx="607.2" cy="493.1" r="0.8" fill="#9dbccb"/>
<circle cx="696.6" cy="494.9" r="0.9" fill="#9dbccb"/>
<circle cx="643.3" cy="503.1" r="0.8" fill="#6a8f9a"/>
<circle cx="611.2" cy="506.4" r="0.6" fill="#6f94a8"/>
<circle cx="658.3" cy="489.7" r="0.7" fill="#6a8f9a"/>
<circle cx="672.7" cy="501.4" r="0.6" fill="#9dbccb"/>
<circle cx="683.7" cy="494.3" r="0.8" fill="#a8c4c8"/>
<circle cx="690.4" cy="502.5" r="0.7" fill="#6f94a8"/>
<circle cx="626.9" cy="514.7" r="0.8" fill="#6a8f9a"/>
<circle cx="673.5" cy="515.0" r="0.6" fill="#6f94a8"/>
<circle cx="678.2" cy="506.2" r="0.7" fill="#a8c4c8"/>
<circle cx="666.6" cy="479.1" r="0.7" fill="#9dbccb"/>
<circle cx="663.1" cy="490.2" r="0.7" fill="#6f94a8"/>
<circle cx="648.0" cy="493.6" r="0.9" fill="#6a8f9a"/>
<circle cx="666.3" cy="504.6" r="0.8" fill="#6a8f9a"/>
<circle cx="686.7" cy="472.0" r="0.6" fill="#9dbccb"/>
<circle cx="672.2" cy="519.3" r="0.8" fill="#6a8f9a"/>
<circle cx="646.2" cy="503.3" r="0.6" fill="#6f94a8"/>
<circle cx="655.5" cy="520.9" r="0.7" fill="#6a8f9a"/>
<circle cx="608.5" cy="490.5" r="0.9" fill="#a8c4c8"/>
<circle cx="615.1" cy="488.5" r="0.9" fill="#a8c4c8"/>
<circle cx="696.4" cy="478.6" r="1.0" fill="#6f94a8"/>
<circle cx="651.8" cy="470.8" r="0.6" fill="#6a8f9a"/>
<circle cx="613.0" cy="520.8" r="0.9" fill="#a8c4c8"/>
<circle cx="674.2" cy="499.3" r="0.6" fill="#6a8f9a"/>
<circle cx="656.0" cy="521.3" r="0.6" fill="#a8c4c8"/>
<circle cx="679.9" cy="495.5" r="0.5" fill="#a8c4c8"/>
<circle cx="654.5" cy="494.7" r="0.6" fill="#6a8f9a"/>
<circle cx="666.7" cy="483.6" r="0.9" fill="#6a8f9a"/>
<circle cx="667.8" cy="473.3" r="0.5" fill="#6a8f9a"/>
<circle cx="654.7" cy="521.5" r="0.8" fill="#a8c4c8"/>
<circle cx="638.7" cy="509.0" r="0.5" fill="#a8c4c8"/>
<circle cx="656.1" cy="477.1" r="0.7" fill="#9dbccb"/>
<circle cx="641.2" cy="482.8" r="0.7" fill="#6f94a8"/>
<circle cx="655.6" cy="489.5" r="0.7" fill="#a8c4c8"/>
<circle cx="663.4" cy="513.1" r="0.8" fill="#9dbccb"/>
<circle cx="623.0" cy="474.4" r="0.5" fill="#6f94a8"/>
<circle cx="673.5" cy="482.3" r="0.7" fill="#6f94a8"/>
<circle cx="666.9" cy="483.7" r="0.7" fill="#a8c4c8"/>
<circle cx="669.9" cy="486.2" r="0.9" fill="#9dbccb"/>
<circle cx="683.1" cy="505.9" r="0.5" fill="#a8c4c8"/>
<circle cx="661.8" cy="521.3" r="0.6" fill="#9dbccb"/>
<circle cx="661.2" cy="485.3" r="0.8" fill="#a8c4c8"/>
<circle cx="677.9" cy="515.9" r="0.6" fill="#9dbccb"/>
<circle cx="689.4" cy="504.6" r="0.6" fill="#a8c4c8"/>
<circle cx="661.4" cy="486.8" r="0.9" fill="#a8c4c8"/>
<circle cx="685.5" cy="480.2" r="0.7" fill="#9dbccb"/>
<circle cx="651.4" cy="504.1" r="0.9" fill="#6f94a8"/>
<circle cx="676.0" cy="504.7" r="1.0" fill="#6f94a8"/>
<circle cx="615.6" cy="470.4" r="0.7" fill="#6a8f9a"/>
<circle cx="661.0" cy="514.6" r="0.5" fill="#6f94a8"/>
<circle cx="644.6" cy="517.1" r="0.8" fill="#a8c4c8"/>
<circle cx="610.9" cy="476.2" r="0.8" fill="#6f94a8"/>
<circle cx="649.1" cy="483.6" r="0.8" fill="#a8c4c8"/>
<circle cx="629.5" cy="468.2" r="1.0" fill="#a8c4c8"/>
<circle cx="630.5" cy="468.9" r="0.7" fill="#9dbccb"/>
<circle cx="631.2" cy="474.1" r="0.9" fill="#6a8f9a"/>
<circle cx="668.0" cy="478.3" r="0.8" fill="#6a8f9a"/>
<circle cx="669.3" cy="495.0" r="0.7" fill="#6a8f9a"/>
<circle cx="639.6" cy="482.3" r="0.7" fill="#9dbccb"/>
<circle cx="632.7" cy="484.0" r="0.7" fill="#6f94a8"/>
<circle cx="662.8" cy="483.4" r="0.6" fill="#6a8f9a"/>
<circle cx="669.3" cy="508.2" r="0.7" fill="#6a8f9a"/>
<circle cx="652.1" cy="480.2" r="0.8" fill="#9dbccb"/>
<circle cx="613.7" cy="481.3" r="1.0" fill="#6a8f9a"/>
<circle cx="653.3" cy="484.7" r="0.9" fill="#a8c4c8"/>
<circle cx="696.1" cy="472.1" r="1.0" fill="#6f94a8"/>
<circle cx="685.0" cy="511.1" r="0.9" fill="#6f94a8"/>
<circle cx="647.3" cy="521.4" r="0.9" fill="#6f94a8"/>
<circle cx="659.4" cy="477.4" r="0.7" fill="#9dbccb"/>
<circle cx="667.7" cy="479.7" r="0.7" fill="#a8c4c8"/>
<circle cx="696.1" cy="517.8" r="0.8" fill="#6f94a8"/>
<circle cx="626.8" cy="503.5" r="0.6" fill="#6f94a8"/>
<circle cx="628.8" cy="484.8" r="0.6" fill="#6f94a8"/>
<circle cx="694.9" cy="477.9" r="0.6" fill="#9dbccb"/>
<circle cx="675.3" cy="471.1" r="0.5" fill="#9dbccb"/>
<circle cx="678.2" cy="502.3" r="0.9" fill="#6a8f9a"/>
<circle cx="665.0" cy="521.2" r="0.9" fill="#9dbccb"/>
<circle cx="635.8" cy="474.2" r="0.5" fill="#6f94a8"/>
<circle cx="684.9" cy="484.4" r="0.9" fill="#a8c4c8"/>
<circle cx="641.9" cy="503.0" r="0.7" fill="#6f94a8"/>
<circle cx="628.6" cy="483.1" r="1.0" fill="#6f94a8"/>
<circle cx="612.9" cy="478.1" r="0.6" fill="#a8c4c8"/>
<circle cx="691.2" cy="503.9" r="0.6" fill="#6a8f9a"/>
<circle cx="691.2" cy="485.3" r="0.5" fill="#6a8f9a"/>
<circle cx="651.3" cy="488.7" r="0.8" fill="#6f94a8"/>
<circle cx="617.5" cy="487.4" r="0.8" fill="#a8c4c8"/>
<circle cx="642.0" cy="518.9" r="0.8" fill="#9dbccb"/>
<circle cx="625.4" cy="468.6" r="0.8" fill="#9dbccb"/>
<circle cx="647.4" cy="494.2" r="0.5" fill="#6f94a8"/>
<circle cx="618.7" cy="488.7" r="0.6" fill="#6a8f9a"/>
<circle cx="662.8" cy="508.3" r="0.9" fill="#6f94a8"/>
<circle cx="638.6" cy="471.6" r="0.6" fill="#6f94a8"/>
<circle cx="687.7" cy="481.0" r="0.8" fill="#9dbccb"/>
<circle cx="614.8" cy="470.5" r="0.9" fill="#6f94a8"/>
<circle cx="660.3" cy="480.4" r="0.6" fill="#6a8f9a"/>
<circle cx="617.1" cy="478.8" r="0.8" fill="#9dbccb"/>
<circle cx="613.4" cy="512.6" r="0.9" fill="#6a8f9a"/>
<circle cx="620.5" cy="498.7" r="0.8" fill="#6a8f9a"/>
<circle cx="607.5" cy="484.6" r="1.0" fill="#6f94a8"/>
<circle cx="624.4" cy="486.1" r="0.5" fill="#6a8f9a"/>
<circle cx="633.1" cy="483.4" r="0.8" fill="#9dbccb"/>
<circle cx="641.5" cy="506.2" r="0.7" fill="#6f94a8"/>
<circle cx="688.7" cy="470.2" r="0.6" fill="#a8c4c8"/>
<circle cx="629.0" cy="521.8" r="0.5" fill="#9dbccb"/>
<circle cx="663.5" cy="514.7" r="0.7" fill="#a8c4c8"/>
<circle cx="617.1" cy="520.9" r="0.9" fill="#a8c4c8"/>
<circle cx="660.2" cy="504.5" r="0.8" fill="#a8c4c8"/>
<circle cx="696.9" cy="513.3" r="0.8" fill="#9dbccb"/>
<circle cx="630.4" cy="494.8" r="0.5" fill="#6f94a8"/>
<circle cx="646.1" cy="499.3" r="0.6" fill="#6a8f9a"/>
<circle cx="624.2" cy="492.2" r="0.9" fill="#6f94a8"/>
<circle cx="630.6" cy="487.7" r="0.8" fill="#9dbccb"/>
<circle cx="655.8" cy="482.2" r="0.7" fill="#a8c4c8"/>
<circle cx="673.0" cy="474.2" r="0.8" fill="#a8c4c8"/>
<circle cx="664.7" cy="493.3" r="0.8" fill="#6f94a8"/>
<circle cx="612.9" cy="506.7" r="0.6" fill="#6a8f9a"/>
<circle cx="623.0" cy="493.0" r="0.7" fill="#6a8f9a"/>
<circle cx="631.1" cy="498.3" r="0.6" fill="#6a8f9a"/>
<circle cx="655.5" cy="501.4" r="1.0" fill="#9dbccb"/>
<circle cx="618.3" cy="500.3" r="0.8" fill="#6a8f9a"/>
<circle cx="644.3" cy="477.9" r="0.9" fill="#a8c4c8"/>
<circle cx="694.1" cy="471.1" r="0.5" fill="#6f94a8"/>
<circle cx="619.5" cy="504.5" r="0.6" fill="#a8c4c8"/>
<circle cx="656.3" cy="514.2" r="0.7" fill="#6f94a8"/>
<circle cx="612.2" cy="503.0" r="0.7" fill="#6f94a8"/>
<circle cx="609.7" cy="476.7" r="0.5" fill="#a8c4c8"/>
<circle cx="618.5" cy="500.6" r="0.9" fill="#a8c4c8"/>
<circle cx="689.7" cy="488.1" r="0.8" fill="#a8c4c8"/>
<circle cx="686.6" cy="497.9" r="0.8" fill="#6f94a8"/>
<circle cx="667.9" cy="520.6" r="0.6" fill="#a8c4c8"/>
<circle cx="664.0" cy="493.3" r="0.5" fill="#6a8f9a"/>
<circle cx="683.7" cy="494.0" r="1.0" fill="#9dbccb"/>
<circle cx="652.9" cy="471.2" r="0.6" fill="#a8c4c8"/>
<circle cx="668.4" cy="521.5" r="0.9" fill="#a8c4c8"/>
<circle cx="613.6" cy="500.9" r="0.7" fill="#a8c4c8"/>
<circle cx="642.5" cy="517.7" r="0.7" fill="#6a8f9a"/>
<circle cx="668.4" cy="514.2" r="0.5" fill="#6f94a8"/>
<circle cx="611.2" cy="489.6" r="0.5" fill="#9dbccb"/>
<circle cx="647.0" cy="498.7" r="0.5" fill="#9dbccb"/>
<circle cx="675.7" cy="492.0" r="0.6" fill="#a8c4c8"/>
<circle cx="641.5" cy="517.2" r="0.9" fill="#6f94a8"/>
<circle cx="686.7" cy="494.1" r="0.6" fill="#9dbccb"/>
<circle cx="617.2" cy="515.4" r="0.9" fill="#9dbccb"/>
<circle cx="626.2" cy="492.1" r="0.8" fill="#6f94a8"/>
<circle cx="632.3" cy="470.6" r="0.9" fill="#6a8f9a"/>
<circle cx="677.2" cy="473.9" r="0.5" fill="#a8c4c8"/>
<circle cx="612.2" cy="473.7" r="1.300" fill="#ddd6ba"/>
<circle cx="609.8" cy="473.7" r="1.300" fill="#ddd6ba"/>
<circle cx="609.8" cy="471.3" r="1.300" fill="#ddd6ba"/>
<circle cx="612.2" cy="471.3" r="1.300" fill="#ddd6ba"/>
<circle cx="611.0" cy="472.5" r=".8" fill="#c9a45a"/>
<path d="M616.0 474.5c2-2 4-2 5 0-1 2-4 2-5 0z" fill="#5f8450"/>
<circle cx="627.4" cy="473.7" r="1.300" fill="#ddd6ba"/>
<circle cx="625.0" cy="473.7" r="1.300" fill="#ddd6ba"/>
<circle cx="625.0" cy="471.3" r="1.300" fill="#ddd6ba"/>
<circle cx="627.4" cy="471.3" r="1.300" fill="#ddd6ba"/>
<circle cx="626.2" cy="472.5" r=".8" fill="#c9a45a"/>
<path d="M631.2 474.5c2-2 4-2 5 0-1 2-4 2-5 0z" fill="#5f8450"/>
<circle cx="642.6" cy="473.7" r="1.300" fill="#ddd6ba"/>
<circle cx="640.2" cy="473.7" r="1.300" fill="#ddd6ba"/>
<circle cx="640.2" cy="471.3" r="1.300" fill="#ddd6ba"/>
<circle cx="642.6" cy="471.3" r="1.300" fill="#ddd6ba"/>
<circle cx="641.4" cy="472.5" r=".8" fill="#c9a45a"/>
<path d="M646.4 474.5c2-2 4-2 5 0-1 2-4 2-5 0z" fill="#5f8450"/>
<circle cx="657.8" cy="473.7" r="1.300" fill="#ddd6ba"/>
<circle cx="655.4" cy="473.7" r="1.300" fill="#ddd6ba"/>
<circle cx="655.4" cy="471.3" r="1.300" fill="#ddd6ba"/>
<circle cx="657.8" cy="471.3" r="1.300" fill="#ddd6ba"/>
<circle cx="656.6" cy="472.5" r=".8" fill="#c9a45a"/>
<path d="M661.6 474.5c2-2 4-2 5 0-1 2-4 2-5 0z" fill="#5f8450"/>
<circle cx="673.0" cy="473.7" r="1.300" fill="#ddd6ba"/>
<circle cx="670.6" cy="473.7" r="1.300" fill="#ddd6ba"/>
<circle cx="670.6" cy="471.3" r="1.300" fill="#ddd6ba"/>
<circle cx="673.0" cy="471.3" r="1.300" fill="#ddd6ba"/>
<circle cx="671.8" cy="472.5" r=".8" fill="#c9a45a"/>
<path d="M676.8 474.5c2-2 4-2 5 0-1 2-4 2-5 0z" fill="#5f8450"/>
<circle cx="688.2" cy="473.7" r="1.300" fill="#ddd6ba"/>
<circle cx="685.8" cy="473.7" r="1.300" fill="#ddd6ba"/>
<circle cx="685.8" cy="471.3" r="1.300" fill="#ddd6ba"/>
<circle cx="688.2" cy="471.3" r="1.300" fill="#ddd6ba"/>
<circle cx="687.0" cy="472.5" r=".8" fill="#c9a45a"/>
<path d="M692.0 474.5c2-2 4-2 5 0-1 2-4 2-5 0z" fill="#5f8450"/>
<path d="M615.1 479.3c1.500-3 5.500-3 7 0-1.500 2.500-5.500 2.500-7 0z" fill="#557a4a"/><path d="M618.6 476.3v6" stroke="#3f6040" stroke-width=".8"/>
<circle cx="624.6" cy="478.3" r="1" fill="#ddd6ba"/>
<path d="M630.3000000000001 479.3c1.500-3 5.500-3 7 0-1.500 2.500-5.500 2.500-7 0z" fill="#557a4a"/><path d="M633.8000000000001 476.3v6" stroke="#3f6040" stroke-width=".8"/>
<circle cx="639.8000000000001" cy="478.3" r="1" fill="#ddd6ba"/>
<path d="M645.5 479.3c1.500-3 5.500-3 7 0-1.500 2.500-5.500 2.500-7 0z" fill="#557a4a"/><path d="M649.0 476.3v6" stroke="#3f6040" stroke-width=".8"/>
<circle cx="655.0" cy="478.3" r="1" fill="#ddd6ba"/>
<path d="M660.7 479.3c1.500-3 5.500-3 7 0-1.500 2.500-5.500 2.500-7 0z" fill="#557a4a"/><path d="M664.2 476.3v6" stroke="#3f6040" stroke-width=".8"/>
<circle cx="670.2" cy="478.3" r="1" fill="#ddd6ba"/>
<path d="M675.9 479.3c1.500-3 5.500-3 7 0-1.500 2.500-5.500 2.500-7 0z" fill="#557a4a"/><path d="M679.4 476.3v6" stroke="#3f6040" stroke-width=".8"/>
<circle cx="685.4" cy="478.3" r="1" fill="#ddd6ba"/>
<path d="M691.1 479.3c1.500-3 5.500-3 7 0-1.500 2.500-5.500 2.500-7 0z" fill="#557a4a"/><path d="M694.6 476.3v6" stroke="#3f6040" stroke-width=".8"/>
<circle cx="700.6" cy="478.3" r="1" fill="#ddd6ba"/>
<circle cx="612.2" cy="487.3" r="1.300" fill="#ddd6ba"/>
<circle cx="609.8" cy="487.3" r="1.300" fill="#ddd6ba"/>
<circle cx="609.8" cy="484.9" r="1.300" fill="#ddd6ba"/>
<circle cx="612.2" cy="484.9" r="1.300" fill="#ddd6ba"/>
<circle cx="611.0" cy="486.1" r=".8" fill="#c9a45a"/>
<path d="M616.0 488.1c2-2 4-2 5 0-1 2-4 2-5 0z" fill="#5f8450"/>
<circle cx="627.4" cy="487.3" r="1.300" fill="#ddd6ba"/>
<circle cx="625.0" cy="487.3" r="1.300" fill="#ddd6ba"/>
<circle cx="625.0" cy="484.9" r="1.300" fill="#ddd6ba"/>
<circle cx="627.4" cy="484.9" r="1.300" fill="#ddd6ba"/>
<circle cx="626.2" cy="486.1" r=".8" fill="#c9a45a"/>
<path d="M631.2 488.1c2-2 4-2 5 0-1 2-4 2-5 0z" fill="#5f8450"/>
<circle cx="642.6" cy="487.3" r="1.300" fill="#ddd6ba"/>
<circle cx="640.2" cy="487.3" r="1.300" fill="#ddd6ba"/>
<circle cx="640.2" cy="484.9" r="1.300" fill="#ddd6ba"/>
<circle cx="642.6" cy="484.9" r="1.300" fill="#ddd6ba"/>
<circle cx="641.4" cy="486.1" r=".8" fill="#c9a45a"/>
<path d="M646.4 488.1c2-2 4-2 5 0-1 2-4 2-5 0z" fill="#5f8450"/>
<circle cx="657.8" cy="487.3" r="1.300" fill="#ddd6ba"/>
<circle cx="655.4" cy="487.3" r="1.300" fill="#ddd6ba"/>
<circle cx="655.4" cy="484.9" r="1.300" fill="#ddd6ba"/>
<circle cx="657.8" cy="484.9" r="1.300" fill="#ddd6ba"/>
<circle cx="656.6" cy="486.1" r=".8" fill="#c9a45a"/>
<path d="M661.6 488.1c2-2 4-2 5 0-1 2-4 2-5 0z" fill="#5f8450"/>
<circle cx="673.0" cy="487.3" r="1.300" fill="#ddd6ba"/>
<circle cx="670.6" cy="487.3" r="1.300" fill="#ddd6ba"/>
<circle cx="670.6" cy="484.9" r="1.300" fill="#ddd6ba"/>
<circle cx="673.0" cy="484.9" r="1.300" fill="#ddd6ba"/>
<circle cx="671.8" cy="486.1" r=".8" fill="#c9a45a"/>
<path d="M676.8 488.1c2-2 4-2 5 0-1 2-4 2-5 0z" fill="#5f8450"/>
<circle cx="688.2" cy="487.3" r="1.300" fill="#ddd6ba"/>
<circle cx="685.8" cy="487.3" r="1.300" fill="#ddd6ba"/>
<circle cx="685.8" cy="484.9" r="1.300" fill="#ddd6ba"/>
<circle cx="688.2" cy="484.9" r="1.300" fill="#ddd6ba"/>
<circle cx="687.0" cy="486.1" r=".8" fill="#c9a45a"/>
<path d="M692.0 488.1c2-2 4-2 5 0-1 2-4 2-5 0z" fill="#5f8450"/>
<path d="M615.1 492.90000000000003c1.500-3 5.500-3 7 0-1.500 2.500-5.500 2.500-7 0z" fill="#557a4a"/><path d="M618.6 489.90000000000003v6" stroke="#3f6040" stroke-width=".8"/>
<circle cx="624.6" cy="491.90000000000003" r="1" fill="#ddd6ba"/>
<path d="M630.3000000000001 492.90000000000003c1.500-3 5.500-3 7 0-1.500 2.500-5.500 2.500-7 0z" fill="#557a4a"/><path d="M633.8000000000001 489.90000000000003v6" stroke="#3f6040" stroke-width=".8"/>
<circle cx="639.8000000000001" cy="491.90000000000003" r="1" fill="#ddd6ba"/>
<path d="M645.5 492.90000000000003c1.500-3 5.500-3 7 0-1.500 2.500-5.500 2.500-7 0z" fill="#557a4a"/><path d="M649.0 489.90000000000003v6" stroke="#3f6040" stroke-width=".8"/>
<circle cx="655.0" cy="491.90000000000003" r="1" fill="#ddd6ba"/>
<path d="M660.7 492.90000000000003c1.500-3 5.500-3 7 0-1.500 2.500-5.500 2.500-7 0z" fill="#557a4a"/><path d="M664.2 489.90000000000003v6" stroke="#3f6040" stroke-width=".8"/>
<circle cx="670.2" cy="491.90000000000003" r="1" fill="#ddd6ba"/>
<path d="M675.9 492.90000000000003c1.500-3 5.500-3 7 0-1.500 2.500-5.500 2.500-7 0z" fill="#557a4a"/><path d="M679.4 489.90000000000003v6" stroke="#3f6040" stroke-width=".8"/>
<circle cx="685.4" cy="491.90000000000003" r="1" fill="#ddd6ba"/>
<path d="M691.1 492.90000000000003c1.500-3 5.500-3 7 0-1.500 2.500-5.500 2.500-7 0z" fill="#557a4a"/><path d="M694.6 489.90000000000003v6" stroke="#3f6040" stroke-width=".8"/>
<circle cx="700.6" cy="491.90000000000003" r="1" fill="#ddd6ba"/>
<circle cx="612.2" cy="500.9" r="1.300" fill="#ddd6ba"/>
<circle cx="609.8" cy="500.9" r="1.300" fill="#ddd6ba"/>
<circle cx="609.8" cy="498.5" r="1.300" fill="#ddd6ba"/>
<circle cx="612.2" cy="498.5" r="1.300" fill="#ddd6ba"/>
<circle cx="611.0" cy="499.70000000000005" r=".8" fill="#c9a45a"/>
<path d="M616.0 501.70000000000005c2-2 4-2 5 0-1 2-4 2-5 0z" fill="#5f8450"/>
<circle cx="627.4" cy="500.9" r="1.300" fill="#ddd6ba"/>
<circle cx="625.0" cy="500.9" r="1.300" fill="#ddd6ba"/>
<circle cx="625.0" cy="498.5" r="1.300" fill="#ddd6ba"/>
<circle cx="627.4" cy="498.5" r="1.300" fill="#ddd6ba"/>
<circle cx="626.2" cy="499.70000000000005" r=".8" fill="#c9a45a"/>
<path d="M631.2 501.70000000000005c2-2 4-2 5 0-1 2-4 2-5 0z" fill="#5f8450"/>
<circle cx="642.6" cy="500.9" r="1.300" fill="#ddd6ba"/>
<circle cx="640.2" cy="500.9" r="1.300" fill="#ddd6ba"/>
<circle cx="640.2" cy="498.5" r="1.300" fill="#ddd6ba"/>
<circle cx="642.6" cy="498.5" r="1.300" fill="#ddd6ba"/>
<circle cx="641.4" cy="499.70000000000005" r=".8" fill="#c9a45a"/>
<path d="M646.4 501.70000000000005c2-2 4-2 5 0-1 2-4 2-5 0z" fill="#5f8450"/>
<circle cx="657.8" cy="500.9" r="1.300" fill="#ddd6ba"/>
<circle cx="655.4" cy="500.9" r="1.300" fill="#ddd6ba"/>
<circle cx="655.4" cy="498.5" r="1.300" fill="#ddd6ba"/>
<circle cx="657.8" cy="498.5" r="1.300" fill="#ddd6ba"/>
<circle cx="656.6" cy="499.70000000000005" r=".8" fill="#c9a45a"/>
<path d="M661.6 501.70000000000005c2-2 4-2 5 0-1 2-4 2-5 0z" fill="#5f8450"/>
<circle cx="673.0" cy="500.9" r="1.300" fill="#ddd6ba"/>
<circle cx="670.6" cy="500.9" r="1.300" fill="#ddd6ba"/>
<circle cx="670.6" cy="498.5" r="1.300" fill="#ddd6ba"/>
<circle cx="673.0" cy="498.5" r="1.300" fill="#ddd6ba"/>
<circle cx="671.8" cy="499.70000000000005" r=".8" fill="#c9a45a"/>
<path d="M676.8 501.70000000000005c2-2 4-2 5 0-1 2-4 2-5 0z" fill="#5f8450"/>
<circle cx="688.2" cy="500.9" r="1.300" fill="#ddd6ba"/>
<circle cx="685.8" cy="500.9" r="1.300" fill="#ddd6ba"/>
<circle cx="685.8" cy="498.5" r="1.300" fill="#ddd6ba"/>
<circle cx="688.2" cy="498.5" r="1.300" fill="#ddd6ba"/>
<circle cx="687.0" cy="499.70000000000005" r=".8" fill="#c9a45a"/>
<path d="M692.0 501.70000000000005c2-2 4-2 5 0-1 2-4 2-5 0z" fill="#5f8450"/>
<path d="M615.1 506.50000000000006c1.500-3 5.500-3 7 0-1.500 2.500-5.500 2.500-7 0z" fill="#557a4a"/><path d="M618.6 503.50000000000006v6" stroke="#3f6040" stroke-width=".8"/>
<circle cx="624.6" cy="505.50000000000006" r="1" fill="#ddd6ba"/>
<path d="M630.3000000000001 506.50000000000006c1.500-3 5.500-3 7 0-1.500 2.500-5.500 2.500-7 0z" fill="#557a4a"/><path d="M633.8000000000001 503.50000000000006v6" stroke="#3f6040" stroke-width=".8"/>
<circle cx="639.8000000000001" cy="505.50000000000006" r="1" fill="#ddd6ba"/>
<path d="M645.5 506.50000000000006c1.500-3 5.500-3 7 0-1.500 2.500-5.500 2.500-7 0z" fill="#557a4a"/><path d="M649.0 503.50000000000006v6" stroke="#3f6040" stroke-width=".8"/>
<circle cx="655.0" cy="505.50000000000006" r="1" fill="#ddd6ba"/>
<path d="M660.7 506.50000000000006c1.500-3 5.500-3 7 0-1.500 2.500-5.500 2.500-7 0z" fill="#557a4a"/><path d="M664.2 503.50000000000006v6" stroke="#3f6040" stroke-width=".8"/>
<circle cx="670.2" cy="505.50000000000006" r="1" fill="#ddd6ba"/>
<path d="M675.9 506.50000000000006c1.500-3 5.500-3 7 0-1.500 2.500-5.500 2.500-7 0z" fill="#557a4a"/><path d="M679.4 503.50000000000006v6" stroke="#3f6040" stroke-width=".8"/>
<circle cx="685.4" cy="505.50000000000006" r="1" fill="#ddd6ba"/>
<path d="M691.1 506.50000000000006c1.500-3 5.500-3 7 0-1.500 2.500-5.500 2.500-7 0z" fill="#557a4a"/><path d="M694.6 503.50000000000006v6" stroke="#3f6040" stroke-width=".8"/>
<circle cx="700.6" cy="505.50000000000006" r="1" fill="#ddd6ba"/>
<circle cx="612.2" cy="514.5" r="1.300" fill="#ddd6ba"/>
<circle cx="609.8" cy="514.5" r="1.300" fill="#ddd6ba"/>
<circle cx="609.8" cy="512.1" r="1.300" fill="#ddd6ba"/>
<circle cx="612.2" cy="512.1" r="1.300" fill="#ddd6ba"/>
<circle cx="611.0" cy="513.3000000000001" r=".8" fill="#c9a45a"/>
<path d="M616.0 515.3000000000001c2-2 4-2 5 0-1 2-4 2-5 0z" fill="#5f8450"/>
<circle cx="627.4" cy="514.5" r="1.300" fill="#ddd6ba"/>
<circle cx="625.0" cy="514.5" r="1.300" fill="#ddd6ba"/>
<circle cx="625.0" cy="512.1" r="1.300" fill="#ddd6ba"/>
<circle cx="627.4" cy="512.1" r="1.300" fill="#ddd6ba"/>
<circle cx="626.2" cy="513.3000000000001" r=".8" fill="#c9a45a"/>
<path d="M631.2 515.3000000000001c2-2 4-2 5 0-1 2-4 2-5 0z" fill="#5f8450"/>
<circle cx="642.6" cy="514.5" r="1.300" fill="#ddd6ba"/>
<circle cx="640.2" cy="514.5" r="1.300" fill="#ddd6ba"/>
<circle cx="640.2" cy="512.1" r="1.300" fill="#ddd6ba"/>
<circle cx="642.6" cy="512.1" r="1.300" fill="#ddd6ba"/>
<circle cx="641.4" cy="513.3000000000001" r=".8" fill="#c9a45a"/>
<path d="M646.4 515.3000000000001c2-2 4-2 5 0-1 2-4 2-5 0z" fill="#5f8450"/>
<circle cx="657.8" cy="514.5" r="1.300" fill="#ddd6ba"/>
<circle cx="655.4" cy="514.5" r="1.300" fill="#ddd6ba"/>
<circle cx="655.4" cy="512.1" r="1.300" fill="#ddd6ba"/>
<circle cx="657.8" cy="512.1" r="1.300" fill="#ddd6ba"/>
<circle cx="656.6" cy="513.3000000000001" r=".8" fill="#c9a45a"/>
<path d="M661.6 515.3000000000001c2-2 4-2 5 0-1 2-4 2-5 0z" fill="#5f8450"/>
<circle cx="673.0" cy="514.5" r="1.300" fill="#ddd6ba"/>
<circle cx="670.6" cy="514.5" r="1.300" fill="#ddd6ba"/>
<circle cx="670.6" cy="512.1" r="1.300" fill="#ddd6ba"/>
<circle cx="673.0" cy="512.1" r="1.300" fill="#ddd6ba"/>
<circle cx="671.8" cy="513.3000000000001" r=".8" fill="#c9a45a"/>
<path d="M676.8 515.3000000000001c2-2 4-2 5 0-1 2-4 2-5 0z" fill="#5f8450"/>
<circle cx="688.2" cy="514.5" r="1.300" fill="#ddd6ba"/>
<circle cx="685.8" cy="514.5" r="1.300" fill="#ddd6ba"/>
<circle cx="685.8" cy="512.1" r="1.300" fill="#ddd6ba"/>
<circle cx="688.2" cy="512.1" r="1.300" fill="#ddd6ba"/>
<circle cx="687.0" cy="513.3000000000001" r=".8" fill="#c9a45a"/>
<path d="M692.0 515.3000000000001c2-2 4-2 5 0-1 2-4 2-5 0z" fill="#5f8450"/>
<rect x="606.500" y="524" width="91" height="24.400" fill="#8a5c2a"/>
<path d="M618.0 548.400v-18c0-6 3.600-10.500 3.600-10.500s3.600 4.500 3.600 10.500v18z" fill="#7d5424"/>
<path d="M620.0 548.400v-14c0-3 1.600-5 1.600-5s1.600 2 1.600 5v14z" fill="#5f7a38"/>
<path d="M601.5 548.400v-12c0-6 3.500-10 8.500-10s8.500 4 8.500 10v12z" fill="#d67f68"/>
<path d="M604.0 536c0-4 2.500-6.500 6-6.500s6 2.500 6 6.500c-2-2-4-2.500-6-2.500s-4 .5-6 2.500z" fill="#f0dcc0"/>
<path d="M605.0 548.400v-9.500c0-2.500 2-4 5-4s5 1.500 5 4v9.500z" fill="#6d8a3e"/>
<path d="M608.0 548.400v-8c0-1.500 1-2.500 2-2.500s2 1 2 2.500v8z" fill="#d9b27a"/>
<path d="M601.5 541h3M615.5 541h3" stroke="#3a4a2a" stroke-width="1.300"/>
<path d="M641.3 548.400v-18c0-6 3.600-10.500 3.600-10.500s3.600 4.500 3.600 10.500v18z" fill="#7d5424"/>
<path d="M643.3 548.400v-14c0-3 1.600-5 1.600-5s1.600 2 1.600 5v14z" fill="#5f7a38"/>
<path d="M624.8 548.400v-12c0-6 3.500-10 8.500-10s8.500 4 8.500 10v12z" fill="#d67f68"/>
<path d="M627.3 536c0-4 2.500-6.500 6-6.500s6 2.500 6 6.500c-2-2-4-2.500-6-2.500s-4 .5-6 2.500z" fill="#f0dcc0"/>
<path d="M628.3 548.400v-9.500c0-2.500 2-4 5-4s5 1.500 5 4v9.500z" fill="#6d8a3e"/>
<path d="M631.3 548.400v-8c0-1.500 1-2.500 2-2.500s2 1 2 2.500v8z" fill="#d9b27a"/>
<path d="M624.8 541h3M638.8 541h3" stroke="#3a4a2a" stroke-width="1.300"/>
<path d="M664.6 548.400v-18c0-6 3.600-10.500 3.600-10.500s3.600 4.500 3.600 10.500v18z" fill="#7d5424"/>
<path d="M666.6 548.400v-14c0-3 1.600-5 1.600-5s1.600 2 1.600 5v14z" fill="#5f7a38"/>
<path d="M648.1 548.400v-12c0-6 3.500-10 8.500-10s8.500 4 8.500 10v12z" fill="#d67f68"/>
<path d="M650.6 536c0-4 2.500-6.500 6-6.500s6 2.500 6 6.500c-2-2-4-2.500-6-2.500s-4 .5-6 2.500z" fill="#f0dcc0"/>
<path d="M651.6 548.400v-9.500c0-2.500 2-4 5-4s5 1.500 5 4v9.500z" fill="#6d8a3e"/>
<path d="M654.6 548.400v-8c0-1.500 1-2.500 2-2.500s2 1 2 2.500v8z" fill="#d9b27a"/>
<path d="M648.1 541h3M662.1 541h3" stroke="#3a4a2a" stroke-width="1.300"/>
<path d="M687.9 548.400v-18c0-6 3.600-10.500 3.600-10.500s3.600 4.500 3.600 10.500v18z" fill="#7d5424"/>
<path d="M689.9 548.400v-14c0-3 1.600-5 1.600-5s1.600 2 1.600 5v14z" fill="#5f7a38"/>
<path d="M671.4 548.400v-12c0-6 3.500-10 8.500-10s8.500 4 8.500 10v12z" fill="#d67f68"/>
<path d="M673.9 536c0-4 2.500-6.500 6-6.500s6 2.500 6 6.500c-2-2-4-2.500-6-2.500s-4 .5-6 2.500z" fill="#f0dcc0"/>
<path d="M674.9 548.400v-9.500c0-2.500 2-4 5-4s5 1.500 5 4v9.500z" fill="#6d8a3e"/>
<path d="M677.9 548.400v-8c0-1.500 1-2.500 2-2.500s2 1 2 2.500v8z" fill="#d9b27a"/>
<path d="M671.4 541h3M685.4 541h3" stroke="#3a4a2a" stroke-width="1.300"/>
<path d="M711.2 548.400v-18c0-6 3.600-10.500 3.600-10.500s3.600 4.500 3.600 10.500v18z" fill="#7d5424"/>
<path d="M713.2 548.400v-14c0-3 1.600-5 1.600-5s1.600 2 1.600 5v14z" fill="#5f7a38"/>
<path d="M694.7 548.400v-12c0-6 3.500-10 8.500-10s8.500 4 8.500 10v12z" fill="#d67f68"/>
<path d="M697.2 536c0-4 2.500-6.500 6-6.500s6 2.500 6 6.500c-2-2-4-2.500-6-2.500s-4 .5-6 2.500z" fill="#f0dcc0"/>
<path d="M698.2 548.400v-9.500c0-2.500 2-4 5-4s5 1.500 5 4v9.500z" fill="#6d8a3e"/>
<path d="M701.2 548.400v-8c0-1.500 1-2.500 2-2.500s2 1 2 2.500v8z" fill="#d9b27a"/>
<path d="M694.7 541h3M708.7 541h3" stroke="#3a4a2a" stroke-width="1.300"/>
<rect x="606.500" y="546.300" width="91" height="2.100" fill="#5e401c"/>
<rect x="606.500" y="549.700" width="91" height="36.700" fill="#eeeeea"/>
<rect x="607.8" y="552" width="15.600" height="32" rx="7.800" fill="none" stroke="#315f9f" stroke-width="2.300"/>
<path d="M617.8 554.500c-6 .5-7.500 6-3.500 8.500 3.500 2 3.500 5.500 0 7-4 2-4 7 1 9.500" fill="none" stroke="#4f7cb6" stroke-width="3"/>
<circle cx="613.4" cy="559.500" r="2.500" fill="#33609c"/><circle cx="617.5999999999999" cy="567" r="2.300" fill="#26477c"/><circle cx="613.4" cy="575" r="2.500" fill="#33609c"/><circle cx="617.8" cy="580" r="1.600" fill="#4f7cb6"/>
<path d="M611.3 565c2 1 3 3 2.500 5M619.3 573c-1.500 1-2 2.500-1.500 4" stroke="#26477c" stroke-width="1.100" fill="none"/>
<rect x="625.8" y="552" width="15.600" height="32" rx="7.800" fill="none" stroke="#315f9f" stroke-width="2.300"/>
<path d="M635.8 554.500c-6 .5-7.500 6-3.500 8.500 3.500 2 3.500 5.500 0 7-4 2-4 7 1 9.500" fill="none" stroke="#4f7cb6" stroke-width="3"/>
<circle cx="631.4" cy="559.500" r="2.500" fill="#33609c"/><circle cx="635.5999999999999" cy="567" r="2.300" fill="#26477c"/><circle cx="631.4" cy="575" r="2.500" fill="#33609c"/><circle cx="635.8" cy="580" r="1.600" fill="#4f7cb6"/>
<path d="M629.3 565c2 1 3 3 2.500 5M637.3 573c-1.500 1-2 2.500-1.500 4" stroke="#26477c" stroke-width="1.100" fill="none"/>
<rect x="643.8" y="552" width="15.600" height="32" rx="7.800" fill="none" stroke="#315f9f" stroke-width="2.300"/>
<path d="M653.8 554.500c-6 .5-7.500 6-3.500 8.500 3.500 2 3.500 5.500 0 7-4 2-4 7 1 9.500" fill="none" stroke="#4f7cb6" stroke-width="3"/>
<circle cx="649.4" cy="559.500" r="2.500" fill="#33609c"/><circle cx="653.5999999999999" cy="567" r="2.300" fill="#26477c"/><circle cx="649.4" cy="575" r="2.500" fill="#33609c"/><circle cx="653.8" cy="580" r="1.600" fill="#4f7cb6"/>
<path d="M647.3 565c2 1 3 3 2.500 5M655.3 573c-1.500 1-2 2.500-1.500 4" stroke="#26477c" stroke-width="1.100" fill="none"/>
<rect x="661.8" y="552" width="15.600" height="32" rx="7.800" fill="none" stroke="#315f9f" stroke-width="2.300"/>
<path d="M671.8 554.500c-6 .5-7.500 6-3.500 8.500 3.500 2 3.500 5.500 0 7-4 2-4 7 1 9.500" fill="none" stroke="#4f7cb6" stroke-width="3"/>
<circle cx="667.4" cy="559.500" r="2.500" fill="#33609c"/><circle cx="671.5999999999999" cy="567" r="2.300" fill="#26477c"/><circle cx="667.4" cy="575" r="2.500" fill="#33609c"/><circle cx="671.8" cy="580" r="1.600" fill="#4f7cb6"/>
<path d="M665.3 565c2 1 3 3 2.500 5M673.3 573c-1.500 1-2 2.500-1.500 4" stroke="#26477c" stroke-width="1.100" fill="none"/>
<rect x="679.8" y="552" width="15.600" height="32" rx="7.800" fill="none" stroke="#315f9f" stroke-width="2.300"/>
<path d="M689.8 554.500c-6 .5-7.500 6-3.500 8.500 3.500 2 3.500 5.500 0 7-4 2-4 7 1 9.500" fill="none" stroke="#4f7cb6" stroke-width="3"/>
<circle cx="685.4" cy="559.500" r="2.500" fill="#33609c"/><circle cx="689.5999999999999" cy="567" r="2.300" fill="#26477c"/><circle cx="685.4" cy="575" r="2.500" fill="#33609c"/><circle cx="689.8" cy="580" r="1.600" fill="#4f7cb6"/>
<path d="M683.3 565c2 1 3 3 2.500 5M691.3 573c-1.500 1-2 2.500-1.500 4" stroke="#26477c" stroke-width="1.100" fill="none"/>
<rect x="606.500" y="590.300" width="91" height="34.400" fill="#e9edf3"/>
<rect x="606.500" y="590.300" width="91" height="1" fill="#4f7cb6"/>
<ellipse cx="651" cy="606.6" rx="2.5" ry="7.6" fill="#3b6aaa" transform="rotate(-66 651 612)"/>
<ellipse cx="651" cy="606.6" rx="2.5" ry="7.6" fill="#3b6aaa" transform="rotate(-33 651 612)"/>
<ellipse cx="651" cy="606.6" rx="2.5" ry="7.6" fill="#3b6aaa" transform="rotate(0 651 612)"/>
<ellipse cx="651" cy="606.6" rx="2.5" ry="7.6" fill="#3b6aaa" transform="rotate(33 651 612)"/>
<ellipse cx="651" cy="606.6" rx="2.5" ry="7.6" fill="#3b6aaa" transform="rotate(66 651 612)"/>
<ellipse cx="651" cy="613.6" rx="8.6" ry="2.8" fill="#26477c"/>
<path d="M606.5 594c6-2 12 0 14 5 1 4-1 8-5 10-4 1-8 0-9-4 3 1 5 0 6-2 0-3-3-5-6-4z" fill="#3b6aaa"/>
<path d="M608.5 598c3-1 6 0 8 3" fill="none" stroke="#a9c0e0" stroke-width=".8"/>
<path d="M697.5 594c6-2 12 0 14 5 1 4-1 8-5 10-4 1-8 0-9-4 3 1 5 0 6-2 0-3-3-5-6-4z" fill="#3b6aaa"/>
<path d="M695.5 598c3-1 6 0 8 3" fill="none" stroke="#a9c0e0" stroke-width=".8"/>
<path d="M626.5 599c1-3 6-4 8-1 0 4-2 8-5 9-3-2-4-5-3-8z" fill="#4a78b6"/>
<path d="M638.0 599c1-3 6-4 8-1 0 4-2 8-5 9-3-2-4-5-3-8z" fill="#4a78b6"/>
<path d="M657.5 599c1-3 6-4 8-1 0 4-2 8-5 9-3-2-4-5-3-8z" fill="#4a78b6"/>
<path d="M668.5 599c1-3 6-4 8-1 0 4-2 8-5 9-3-2-4-5-3-8z" fill="#4a78b6"/>
<path d="M606.500 624.700v-7c4-5 9-5 12-1 2-3 6-4 9-1 3-4 8-4 11-1 3 3 8 4 12 4s9-1 12-4c3-3 8-3 11 1 3-3 7-2 9 1 3-4 8-4 12 1v7z" fill="#3565a6"/>
<path d="M607.5 620.500c1-3 5-3.500 6.500-1 .8 2-1.500 3.500-3 2" fill="none" stroke="#dfe8f4" stroke-width=".9"/>
<path d="M619.5 620.500c1-3 5-3.500 6.500-1 .8 2-1.500 3.500-3 2" fill="none" stroke="#dfe8f4" stroke-width=".9"/>
<path d="M630.5 620.500c1-3 5-3.500 6.500-1 .8 2-1.500 3.500-3 2" fill="none" stroke="#dfe8f4" stroke-width=".9"/>
<path d="M664.5 620.500c1-3 5-3.500 6.500-1 .8 2-1.500 3.500-3 2" fill="none" stroke="#dfe8f4" stroke-width=".9"/>
<path d="M676.5 620.500c1-3 5-3.500 6.500-1 .8 2-1.500 3.500-3 2" fill="none" stroke="#dfe8f4" stroke-width=".9"/>
<path d="M687.5 620.500c1-3 5-3.500 6.500-1 .8 2-1.500 3.500-3 2" fill="none" stroke="#dfe8f4" stroke-width=".9"/>
<path d="M640 619c4 3 18 3 22 0" fill="none" stroke="#b4c8e4" stroke-width=".8"/>
<rect x="606.500" y="629.700" width="91" height="25" fill="#eceef2"/>
<rect x="606.500" y="631.700" width="91" height="1.500" fill="#33609c"/>
<path d="M617 655v-13" stroke="#33609c" stroke-width="1.800"/>
<path d="M640 655v-13" stroke="#33609c" stroke-width="1.800"/>
<path d="M663 655v-13" stroke="#33609c" stroke-width="1.800"/>
<path d="M686 655v-13" stroke="#33609c" stroke-width="1.800"/>
<path d="M595.0 643c0-5 4.500-8 10.500-8s10.500 3 10.500 8" fill="none" stroke="#33609c" stroke-width="1.500"/>
<path d="M605.5 636v4" stroke="#4f7cb6" stroke-width="1"/>
<ellipse cx="605.5" cy="650.8" rx="1" ry="4.200" fill="#26477c" transform="rotate(-60 605.5 643.500)"/>
<ellipse cx="605.5" cy="650.8" rx="1" ry="4.200" fill="#26477c" transform="rotate(-40 605.5 643.500)"/>
<ellipse cx="605.5" cy="650.8" rx="1" ry="4.200" fill="#26477c" transform="rotate(-20 605.5 643.500)"/>
<ellipse cx="605.5" cy="650.8" rx="1" ry="4.200" fill="#26477c" transform="rotate(0 605.5 643.500)"/>
<ellipse cx="605.5" cy="650.8" rx="1" ry="4.200" fill="#26477c" transform="rotate(20 605.5 643.500)"/>
<ellipse cx="605.5" cy="650.8" rx="1" ry="4.200" fill="#26477c" transform="rotate(40 605.5 643.500)"/>
<ellipse cx="605.5" cy="650.8" rx="1" ry="4.200" fill="#26477c" transform="rotate(60 605.5 643.500)"/>
<circle cx="605.5" cy="642.800" r="1.600" fill="#26477c"/>
<path d="M618.0 643c0-5 4.500-8 10.500-8s10.500 3 10.500 8" fill="none" stroke="#33609c" stroke-width="1.500"/>
<path d="M628.5 636v4" stroke="#4f7cb6" stroke-width="1"/>
<ellipse cx="628.5" cy="650.8" rx="1" ry="4.200" fill="#26477c" transform="rotate(-60 628.5 643.500)"/>
<ellipse cx="628.5" cy="650.8" rx="1" ry="4.200" fill="#26477c" transform="rotate(-40 628.5 643.500)"/>
<ellipse cx="628.5" cy="650.8" rx="1" ry="4.200" fill="#26477c" transform="rotate(-20 628.5 643.500)"/>
<ellipse cx="628.5" cy="650.8" rx="1" ry="4.200" fill="#26477c" transform="rotate(0 628.5 643.500)"/>
<ellipse cx="628.5" cy="650.8" rx="1" ry="4.200" fill="#26477c" transform="rotate(20 628.5 643.500)"/>
<ellipse cx="628.5" cy="650.8" rx="1" ry="4.200" fill="#26477c" transform="rotate(40 628.5 643.500)"/>
<ellipse cx="628.5" cy="650.8" rx="1" ry="4.200" fill="#26477c" transform="rotate(60 628.5 643.500)"/>
<circle cx="628.5" cy="642.800" r="1.600" fill="#26477c"/>
<path d="M641.0 643c0-5 4.500-8 10.500-8s10.500 3 10.500 8" fill="none" stroke="#33609c" stroke-width="1.500"/>
<path d="M651.5 636v4" stroke="#4f7cb6" stroke-width="1"/>
<ellipse cx="651.5" cy="650.8" rx="1" ry="4.200" fill="#26477c" transform="rotate(-60 651.5 643.500)"/>
<ellipse cx="651.5" cy="650.8" rx="1" ry="4.200" fill="#26477c" transform="rotate(-40 651.5 643.500)"/>
<ellipse cx="651.5" cy="650.8" rx="1" ry="4.200" fill="#26477c" transform="rotate(-20 651.5 643.500)"/>
<ellipse cx="651.5" cy="650.8" rx="1" ry="4.200" fill="#26477c" transform="rotate(0 651.5 643.500)"/>
<ellipse cx="651.5" cy="650.8" rx="1" ry="4.200" fill="#26477c" transform="rotate(20 651.5 643.500)"/>
<ellipse cx="651.5" cy="650.8" rx="1" ry="4.200" fill="#26477c" transform="rotate(40 651.5 643.500)"/>
<ellipse cx="651.5" cy="650.8" rx="1" ry="4.200" fill="#26477c" transform="rotate(60 651.5 643.500)"/>
<circle cx="651.5" cy="642.800" r="1.600" fill="#26477c"/>
<path d="M664.0 643c0-5 4.500-8 10.500-8s10.500 3 10.500 8" fill="none" stroke="#33609c" stroke-width="1.500"/>
<path d="M674.5 636v4" stroke="#4f7cb6" stroke-width="1"/>
<ellipse cx="674.5" cy="650.8" rx="1" ry="4.200" fill="#26477c" transform="rotate(-60 674.5 643.500)"/>
<ellipse cx="674.5" cy="650.8" rx="1" ry="4.200" fill="#26477c" transform="rotate(-40 674.5 643.500)"/>
<ellipse cx="674.5" cy="650.8" rx="1" ry="4.200" fill="#26477c" transform="rotate(-20 674.5 643.500)"/>
<ellipse cx="674.5" cy="650.8" rx="1" ry="4.200" fill="#26477c" transform="rotate(0 674.5 643.500)"/>
<ellipse cx="674.5" cy="650.8" rx="1" ry="4.200" fill="#26477c" transform="rotate(20 674.5 643.500)"/>
<ellipse cx="674.5" cy="650.8" rx="1" ry="4.200" fill="#26477c" transform="rotate(40 674.5 643.500)"/>
<ellipse cx="674.5" cy="650.8" rx="1" ry="4.200" fill="#26477c" transform="rotate(60 674.5 643.500)"/>
<circle cx="674.5" cy="642.800" r="1.600" fill="#26477c"/>
<path d="M687.0 643c0-5 4.500-8 10.500-8s10.500 3 10.500 8" fill="none" stroke="#33609c" stroke-width="1.500"/>
<path d="M697.5 636v4" stroke="#4f7cb6" stroke-width="1"/>
<ellipse cx="697.5" cy="650.8" rx="1" ry="4.200" fill="#26477c" transform="rotate(-60 697.5 643.500)"/>
<ellipse cx="697.5" cy="650.8" rx="1" ry="4.200" fill="#26477c" transform="rotate(-40 697.5 643.500)"/>
<ellipse cx="697.5" cy="650.8" rx="1" ry="4.200" fill="#26477c" transform="rotate(-20 697.5 643.500)"/>
<ellipse cx="697.5" cy="650.8" rx="1" ry="4.200" fill="#26477c" transform="rotate(0 697.5 643.500)"/>
<ellipse cx="697.5" cy="650.8" rx="1" ry="4.200" fill="#26477c" transform="rotate(20 697.5 643.500)"/>
<ellipse cx="697.5" cy="650.8" rx="1" ry="4.200" fill="#26477c" transform="rotate(40 697.5 643.500)"/>
<ellipse cx="697.5" cy="650.8" rx="1" ry="4.200" fill="#26477c" transform="rotate(60 697.5 643.500)"/>
<circle cx="697.5" cy="642.800" r="1.600" fill="#26477c"/>
</g>
</g>
</g><!-- /slideAll -->
<path d="M667.500 650v7.500l1.800-1.600 1.300 2.800 1.100-.5-1.300-2.700h2.400z" fill="#fff" stroke="#333" stroke-width=".6"/>
</svg>
<svg class="a" style="left:0;top:85px" width="123" height="386" viewBox="4 323 123 386">
<defs><filter id="bl1"><feGaussianBlur stdDeviation=".6"/></filter><filter id="bl2"><feGaussianBlur stdDeviation="1.300"/></filter></defs>
<rect x="19.900" y="323" width="94.800" height="47.200" fill="#fdfdfd"/>
<ellipse cx="78.0" cy="337.5" rx="4.300" ry="3.300" fill="#c9c9c9" filter="url(#bl1)"/>
<path d="M74.7 339.8Q80.4 335.9 78.0 337.2Q79.4 339.4 75.1 335.0Q81.0 337.1 79.9 334.9Q77.5 339.0 76.0 339.9Q81.6 334.4 74.6 337.7Q82.0 336.7 76.0 337.1Q73.8 335.7 77.6 337.5Q75.6 335.7 76.0 337.3Q76.1 334.3 80.4 337.8" fill="none" stroke="#4a4a4a" stroke-width="0.6" stroke-linejoin="round"/>
<ellipse cx="90.3" cy="337.5" rx="4.300" ry="3.300" fill="#c9c9c9" filter="url(#bl1)"/>
<path d="M94.4 340.5Q86.3 334.8 92.7 338.7Q91.8 336.2 91.1 338.1Q91.0 335.2 89.8 336.9Q92.3 340.8 93.5 337.7Q89.8 336.0 87.0 335.0Q90.0 336.3 89.4 339.6Q90.5 337.9 88.4 335.0Q88.7 335.1 90.4 340.1Q91.9 335.4 93.1 339.1" fill="none" stroke="#4a4a4a" stroke-width="0.6" stroke-linejoin="round"/>
<ellipse cx="102.6" cy="337.5" rx="4.300" ry="3.300" fill="#c9c9c9" filter="url(#bl1)"/>
<path d="M100.2 337.8Q101.4 338.2 103.5 335.2Q98.2 339.7 100.9 336.1Q107.1 337.3 105.0 337.4Q103.9 335.2 103.6 339.4Q102.8 339.1 103.8 335.2Q104.9 338.1 101.2 335.0Q105.9 337.3 104.2 339.5Q104.5 340.3 101.8 339.1Q102.1 340.4 105.3 335.4" fill="none" stroke="#4a4a4a" stroke-width="0.6" stroke-linejoin="round"/>
<ellipse cx="78.0" cy="345.8" rx="4.300" ry="3.300" fill="#c9c9c9" filter="url(#bl1)"/>
<path d="M75.6 343.2Q77.1 343.5 74.9 345.3Q81.8 347.8 79.9 344.3Q78.3 344.3 75.6 343.7Q75.4 348.6 80.4 347.4Q80.7 343.8 76.6 346.5Q80.1 348.1 80.7 343.6Q79.0 346.9 78.0 344.1Q77.8 343.1 81.1 347.7Q78.4 344.5 80.9 346.2" fill="none" stroke="#4a4a4a" stroke-width="0.6" stroke-linejoin="round"/>
<ellipse cx="90.3" cy="345.8" rx="4.300" ry="3.300" fill="#c9c9c9" filter="url(#bl1)"/>
<path d="M91.4 347.4Q93.0 348.7 92.0 348.0Q86.1 345.6 93.5 346.6Q93.9 343.2 90.1 344.5Q90.7 346.3 86.8 344.3Q88.3 348.5 92.2 344.0Q93.0 343.4 91.1 343.8Q85.8 348.3 88.2 344.3Q94.6 348.3 88.8 348.2Q90.7 347.0 88.2 348.1" fill="none" stroke="#4a4a4a" stroke-width="0.6" stroke-linejoin="round"/>
<ellipse cx="102.6" cy="345.8" rx="4.300" ry="3.300" fill="#c9c9c9" filter="url(#bl1)"/>
<path d="M105.2 347.9Q102.5 344.2 99.0 346.7Q102.3 347.5 101.7 347.2Q100.6 347.8 104.3 345.3Q102.9 347.0 100.4 346.1Q105.3 344.3 104.8 346.8Q105.7 344.7 99.7 347.4Q105.3 345.4 99.7 344.2Q103.8 344.4 105.8 346.3Q99.9 346.8 101.6 348.1" fill="none" stroke="#4a4a4a" stroke-width="0.6" stroke-linejoin="round"/>
<ellipse cx="78.0" cy="354.1" rx="4.300" ry="3.300" fill="#c9c9c9" filter="url(#bl1)"/>
<path d="M76.4 351.8Q79.4 351.3 78.3 353.4Q74.0 354.1 74.7 353.7Q74.1 351.4 77.5 355.8Q74.6 352.3 78.9 356.5Q78.7 353.4 81.4 351.7Q81.2 352.7 75.4 352.1Q76.3 356.2 75.7 354.5Q79.3 353.3 78.3 351.8Q74.0 352.2 79.3 353.7" fill="none" stroke="#4a4a4a" stroke-width="0.6" stroke-linejoin="round"/>
<ellipse cx="90.3" cy="354.1" rx="4.300" ry="3.300" fill="#c9c9c9" filter="url(#bl1)"/>
<path d="M87.8 357.2Q86.9 355.5 87.3 352.8Q94.8 352.2 91.3 353.9Q89.9 354.1 88.1 355.8Q86.6 352.3 86.8 352.9Q89.5 356.8 89.4 352.1Q88.1 357.3 87.2 354.7Q89.2 355.2 89.1 355.1Q90.3 355.1 93.2 354.5Q87.1 351.2 93.5 354.0" fill="none" stroke="#4a4a4a" stroke-width="0.6" stroke-linejoin="round"/>
<ellipse cx="102.6" cy="354.1" rx="4.300" ry="3.300" fill="#c9c9c9" filter="url(#bl1)"/>
<path d="M102.3 353.3Q99.3 356.5 99.0 354.1Q106.2 351.3 103.0 354.7Q98.5 353.3 104.1 353.8Q104.6 351.8 100.7 352.0Q102.7 356.9 103.3 355.5Q101.6 355.7 99.7 353.0Q104.2 355.6 102.0 351.9Q100.5 352.2 101.0 355.7Q99.9 356.7 105.3 351.7" fill="none" stroke="#4a4a4a" stroke-width="0.6" stroke-linejoin="round"/>
<ellipse cx="78.0" cy="362.4" rx="4.300" ry="3.300" fill="#c9c9c9" filter="url(#bl1)"/>
<path d="M78.6 361.9Q78.7 360.5 80.3 364.1Q79.4 360.2 78.1 361.5Q75.7 365.4 81.6 360.0Q81.2 363.1 77.1 361.3Q79.6 362.1 79.3 363.3Q74.7 364.2 81.5 364.9Q79.0 359.4 74.4 360.5Q82.0 361.1 77.0 364.5Q76.3 362.7 77.5 360.1" fill="none" stroke="#4a4a4a" stroke-width="0.6" stroke-linejoin="round"/>
<ellipse cx="90.3" cy="362.4" rx="4.300" ry="3.300" fill="#c9c9c9" filter="url(#bl1)"/>
<path d="M89.9 362.8Q94.1 362.2 90.4 362.9Q87.5 362.5 91.2 363.9Q86.6 361.1 87.4 364.0Q92.0 359.4 93.8 364.9Q91.7 363.2 87.8 359.8Q90.6 359.5 88.1 361.0Q86.1 362.2 89.9 364.2Q90.5 363.3 90.3 363.3Q89.9 360.9 93.9 365.0" fill="none" stroke="#4a4a4a" stroke-width="0.6" stroke-linejoin="round"/>
<ellipse cx="102.6" cy="362.4" rx="4.300" ry="3.300" fill="#c9c9c9" filter="url(#bl1)"/>
<path d="M102.4 363.4Q104.1 360.0 99.1 361.7Q100.6 364.4 104.0 362.9Q103.1 363.5 100.0 362.1Q99.6 365.1 99.4 364.1Q98.8 363.6 101.4 361.9Q105.7 359.2 99.4 364.6Q102.7 359.7 106.1 364.8Q99.1 361.9 100.0 361.4Q103.7 360.2 104.0 360.0" fill="none" stroke="#4a4a4a" stroke-width="0.6" stroke-linejoin="round"/>
<path d="M39.3 323.9Q33.0 324.1 47.8 324.3Q38.7 325.7 42.9 326.3Q41.7 324.7 44.5 324.2Q53.3 324.5 39.5 325.5Q32.3 325.6 49.8 324.5Q54.5 325.1 48.1 324.9Q39.3 324.2 31.0 324.1Q55.7 325.1 41.2 326.2Q45.0 326.7 38.8 324.2Q53.8 323.8 48.5 325.3" fill="none" stroke="#555" stroke-width="0.7" stroke-linejoin="round"/>
<path d="M64.0 326.3Q63.9 323.2 65.7 325.7Q68.5 323.3 66.0 324.0Q59.5 326.9 68.3 324.6Q69.9 326.2 60.5 324.6Q63.3 323.2 68.7 326.2Q65.8 326.3 66.5 324.7Q67.0 326.3 63.4 325.0Q60.8 325.2 68.1 324.7" fill="none" stroke="#333" stroke-width="0.8" stroke-linejoin="round"/>
<text x="9.500" y="391.5" font-family="Liberation Sans,sans-serif" font-size="8.500" fill="#d6d6d6">4</text>
<rect x="19.900" y="382.400" width="94.800" height="72.300" fill="#fdfdfd"/>
<ellipse cx="28" cy="393.0" rx="4.500" ry="6.500" fill="#d4d4d4" filter="url(#bl1)"/>
<path d="M28.8 388.4Q32.8 399.4 27.7 395.0Q25.0 388.8 26.2 395.3Q25.0 400.1 24.4 389.3Q23.7 397.0 26.9 392.7Q26.2 395.1 27.2 389.5Q27.3 390.1 24.8 396.9Q29.9 395.5 31.2 391.7Q26.7 391.8 27.2 395.0Q22.9 392.5 28.3 391.1Q23.0 396.1 23.9 393.8Q24.4 386.0 25.3 387.8Q24.4 395.8 29.9 391.4Q29.6 392.6 28.0 397.5Q26.0 398.5 29.6 395.2" fill="none" stroke="#3a3a3a" stroke-width="0.55" stroke-linejoin="round"/>
<ellipse cx="27" cy="388.0" rx="2.600" ry="1.900" fill="#222" filter="url(#bl1)"/>
<ellipse cx="41" cy="393.0" rx="4.500" ry="6.500" fill="#d4d4d4" filter="url(#bl1)"/>
<path d="M37.3 394.7Q37.6 396.2 41.9 391.6Q42.2 394.0 37.2 393.4Q42.2 393.3 44.2 395.8Q39.7 388.9 37.9 396.7Q43.0 394.6 40.5 393.0Q38.1 393.5 38.0 394.5Q42.4 395.6 38.9 388.1Q39.3 395.8 41.1 396.0Q40.3 391.5 44.4 389.0Q38.0 394.3 42.1 392.2Q41.6 392.1 42.4 397.7Q44.4 395.1 40.8 398.4Q40.5 394.9 44.1 395.2Q39.9 396.6 41.8 398.0" fill="none" stroke="#3a3a3a" stroke-width="0.55" stroke-linejoin="round"/>
<ellipse cx="40" cy="388.0" rx="2.600" ry="1.900" fill="#222" filter="url(#bl1)"/>
<ellipse cx="54" cy="393.0" rx="4.500" ry="6.500" fill="#d4d4d4" filter="url(#bl1)"/>
<path d="M59.0 392.3Q56.3 396.5 51.6 387.9Q55.1 387.3 53.0 397.7Q57.9 387.3 50.5 389.7Q57.4 385.9 51.7 388.3Q50.1 393.4 51.4 391.9Q56.4 396.3 53.3 396.4Q54.8 397.9 51.9 391.4Q54.8 399.7 55.0 392.7Q51.4 389.7 51.6 398.8Q58.0 398.9 54.2 395.5Q51.9 392.7 51.1 392.0Q51.4 387.0 57.5 388.2Q57.3 396.0 50.6 392.8Q59.2 400.3 54.5 396.3" fill="none" stroke="#3a3a3a" stroke-width="0.55" stroke-linejoin="round"/>
<ellipse cx="67" cy="393.0" rx="4.500" ry="6.500" fill="#d4d4d4" filter="url(#bl1)"/>
<path d="M71.8 398.6Q69.4 388.9 65.6 395.6Q70.2 385.8 64.2 397.7Q63.0 395.3 65.6 394.7Q70.8 394.2 66.1 390.9Q68.3 394.9 66.2 392.6Q67.4 389.4 64.3 393.8Q62.8 394.5 69.5 396.9Q64.4 391.7 70.5 391.2Q72.1 388.5 69.8 387.5Q68.7 397.6 67.4 394.6Q71.3 400.4 64.3 393.3Q62.2 391.2 64.0 388.9Q68.3 386.8 64.1 387.1Q70.3 389.2 63.4 394.5" fill="none" stroke="#3a3a3a" stroke-width="0.55" stroke-linejoin="round"/>
<ellipse cx="28" cy="410.5" rx="4.500" ry="6.500" fill="#d4d4d4" filter="url(#bl1)"/>
<path d="M31.9 408.2Q31.0 417.3 26.4 413.7Q26.3 405.5 26.7 413.5Q24.3 412.9 26.8 406.5Q27.3 408.8 27.7 415.1Q32.4 406.4 32.1 411.8Q32.8 415.3 28.2 407.5Q32.5 418.0 29.0 405.9Q31.4 414.5 31.2 416.2Q32.9 414.0 27.1 410.9Q28.0 414.4 29.1 414.4Q28.2 411.9 31.9 414.0Q32.5 413.5 24.9 409.5Q25.8 406.9 24.9 405.8Q27.8 414.7 31.1 416.1" fill="none" stroke="#3a3a3a" stroke-width="0.55" stroke-linejoin="round"/>
<ellipse cx="27" cy="405.5" rx="2.600" ry="1.900" fill="#222" filter="url(#bl1)"/>
<ellipse cx="41" cy="410.5" rx="4.500" ry="6.500" fill="#d4d4d4" filter="url(#bl1)"/>
<path d="M43.2 416.5Q36.0 417.1 43.7 405.2Q44.2 415.1 38.4 416.2Q39.6 409.8 42.3 412.8Q43.6 407.2 40.9 406.1Q38.7 410.4 37.5 408.7Q44.3 405.7 40.4 404.9Q43.5 404.5 38.4 413.4Q40.4 411.3 41.9 410.5Q40.2 405.3 38.0 406.9Q38.3 407.8 44.3 407.1Q37.2 407.0 37.9 414.4Q45.7 414.5 44.8 411.1Q40.5 408.8 42.3 407.4Q41.2 408.8 42.4 415.0" fill="none" stroke="#3a3a3a" stroke-width="0.55" stroke-linejoin="round"/>
<ellipse cx="40" cy="405.5" rx="2.600" ry="1.900" fill="#222" filter="url(#bl1)"/>
<ellipse cx="54" cy="410.5" rx="4.500" ry="6.500" fill="#d4d4d4" filter="url(#bl1)"/>
<path d="M51.4 411.7Q58.9 412.9 53.9 408.2Q50.2 418.0 56.1 407.5Q55.0 413.6 57.4 407.9Q52.1 405.8 54.7 415.6Q56.4 405.1 52.9 405.4Q50.5 410.4 51.1 407.7Q51.3 409.3 57.0 407.3Q55.2 409.0 52.3 408.1Q56.9 415.6 55.9 415.2Q56.4 407.5 51.8 411.3Q55.1 414.8 57.4 414.1Q59.0 413.1 55.5 414.1Q54.0 415.0 57.1 410.6Q52.4 408.7 54.9 411.3" fill="none" stroke="#3a3a3a" stroke-width="0.55" stroke-linejoin="round"/>
<ellipse cx="67" cy="410.5" rx="4.500" ry="6.500" fill="#d4d4d4" filter="url(#bl1)"/>
<path d="M63.2 415.2Q71.0 408.8 65.1 406.9Q62.6 406.2 64.5 414.7Q63.8 405.9 70.6 415.5Q62.9 407.8 71.1 409.2Q68.3 413.4 68.2 405.2Q69.3 415.2 66.6 408.6Q69.3 417.8 70.7 406.9Q69.7 410.3 71.1 416.1Q66.8 416.5 70.2 405.8Q66.0 417.2 64.8 409.8Q68.3 408.3 69.4 406.7Q68.0 411.3 63.1 414.0Q70.0 415.8 64.4 410.9Q63.4 414.0 68.0 415.2" fill="none" stroke="#3a3a3a" stroke-width="0.55" stroke-linejoin="round"/>
<ellipse cx="28" cy="427.0" rx="4.500" ry="6.500" fill="#d4d4d4" filter="url(#bl1)"/>
<path d="M25.7 426.4Q28.5 421.0 28.0 432.5Q28.7 427.3 30.4 426.4Q25.7 432.1 25.2 431.7Q32.0 427.7 28.1 421.8Q24.6 431.1 29.9 428.5Q24.2 430.4 32.1 431.5Q29.7 426.2 27.4 422.8Q23.2 434.0 27.1 425.7Q27.8 434.2 31.4 429.3Q31.0 427.4 29.2 430.6Q29.7 420.2 27.7 428.0Q29.8 433.5 30.4 426.0Q27.8 431.2 30.1 425.3Q26.9 428.7 28.0 429.0" fill="none" stroke="#3a3a3a" stroke-width="0.55" stroke-linejoin="round"/>
<ellipse cx="27" cy="422.0" rx="2.600" ry="1.900" fill="#222" filter="url(#bl1)"/>
<ellipse cx="41" cy="427.0" rx="4.500" ry="6.500" fill="#d4d4d4" filter="url(#bl1)"/>
<path d="M45.5 425.3Q44.3 423.2 40.9 424.3Q41.4 420.6 40.3 424.8Q36.2 431.7 44.4 422.8Q42.4 427.4 40.4 428.1Q42.7 423.7 39.9 427.1Q46.1 433.5 43.3 426.5Q45.3 434.2 44.2 423.3Q40.1 422.9 40.6 431.3Q40.9 424.4 38.2 422.7Q44.4 433.8 44.2 421.0Q38.6 421.6 40.7 423.4Q40.9 426.3 42.1 427.2Q41.0 420.2 44.7 426.1Q44.8 424.4 37.6 432.9" fill="none" stroke="#3a3a3a" stroke-width="0.55" stroke-linejoin="round"/>
<ellipse cx="54" cy="427.0" rx="4.500" ry="6.500" fill="#d4d4d4" filter="url(#bl1)"/>
<path d="M57.4 422.7Q58.6 426.9 53.1 428.4Q50.6 422.4 53.3 423.8Q55.8 425.7 53.0 424.3Q51.1 430.2 57.3 425.2Q57.2 424.2 56.2 423.9Q54.7 425.6 57.1 430.1Q49.9 421.0 53.7 423.6Q51.3 433.8 57.7 421.2Q49.0 428.9 57.7 431.7Q56.0 430.6 53.9 426.9Q57.7 421.1 55.5 429.6Q50.4 431.1 51.2 432.6Q56.7 426.3 54.7 432.7Q52.6 422.6 55.6 431.8" fill="none" stroke="#3a3a3a" stroke-width="0.55" stroke-linejoin="round"/>
<ellipse cx="67" cy="427.0" rx="4.500" ry="6.500" fill="#d4d4d4" filter="url(#bl1)"/>
<path d="M66.8 429.5Q68.2 430.0 70.3 430.0Q63.5 422.8 66.6 425.7Q71.8 430.4 66.7 425.2Q64.2 428.5 70.5 423.0Q66.5 424.7 67.9 424.1Q62.5 429.6 65.4 428.8Q71.2 428.2 70.4 430.6Q62.5 423.2 68.4 426.7Q61.8 431.8 68.2 426.2Q67.2 422.1 67.4 422.7Q68.7 433.6 64.6 424.2Q67.8 432.6 64.2 425.7Q68.1 422.0 63.4 430.0Q68.3 428.2 67.4 422.2" fill="none" stroke="#3a3a3a" stroke-width="0.55" stroke-linejoin="round"/>
<g filter="url(#bl1)"><rect x="74" y="385" width="19" height="26" fill="#c9856a"/><circle cx="82" cy="394" r="5.500" fill="#c8372a"/><circle cx="87" cy="403" r="4.500" fill="#b42c22"/><circle cx="78" cy="405" r="3" fill="#5a6a3a"/><circle cx="89" cy="390" r="2.500" fill="#6a7a48"/><circle cx="79" cy="388" r="2" fill="#e4c0a0"/>
<rect x="94.500" y="384" width="20.200" height="28" fill="#cd7a48"/><circle cx="105.500" cy="394" r="4.500" fill="#efe0cc"/><circle cx="105.500" cy="394" r="2" fill="#d9a070"/><circle cx="99" cy="404" r="4" fill="#b0562c"/><circle cx="109" cy="406" r="3.500" fill="#b8a860"/><circle cx="98" cy="389" r="2.500" fill="#e0a070"/><circle cx="111" cy="388" r="2.500" fill="#dc9a60"/></g>
<rect x="75.900" y="425" width="38.800" height="29.700" fill="#e4dcc0"/>
<path d="M75.900 454.700v-12c1-8 6-12 11-10 4 1 5 5 3 8 3 3 6 5 10 4.500 5-.5 9 2.500 14.800 1v8.500z" fill="#34465c" filter="url(#bl1)"/>
<path d="M77 440c2-5 6-8 10-6M79 446c3-3 6-3 9-1M92 446c5 2 10 1 14 3M84 437c2 0 3 1 3 3M96 451c4-1 8-1 12 1" stroke="#ece8da" stroke-width="1.100" fill="none"/>
<path d="M75.900 425h38.800v4h-38.800z" fill="#d6cdb0"/>
<text x="9.500" y="474.5" font-family="Liberation Sans,sans-serif" font-size="8.500" fill="#d6d6d6">5</text>
<rect x="19.300" y="464.800" width="96.400" height="73.400" fill="#fdfdfd" stroke="#c4583a" stroke-width="1.800"/>
<use href="#slideAll" transform="translate(20.200 465.700) scale(.2102) translate(-300 -343)"/>
<rect x="19.300" y="464.800" width="96.400" height="73.400" fill="none" stroke="#c4583a" stroke-width="1.800"/>
<text x="9.500" y="558" font-family="Liberation Sans,sans-serif" font-size="8.500" fill="#d6d6d6">6</text>
<rect x="19.600" y="549.700" width="95.100" height="72" fill="#fdfdfd"/>
<rect x="37.500" y="570" width="58.200" height="39.500" fill="#b9b9bb"/>
<rect x="37.500" y="600" width="58.200" height="9.500" fill="#cfcfd1"/>
<path d="M39.500 586v8c0 6 12 10.500 27 10.500s27-4.500 27-10.500v-8z" fill="#a23820"/>
<ellipse cx="66.500" cy="586" rx="27" ry="9.500" fill="#c4502f"/>
<ellipse cx="66.500" cy="585.500" rx="21" ry="6.800" fill="#cf6245" filter="url(#bl1)"/>
<path d="M39.500 594.500c3 5 14 8 27 8s24-3 27-8" fill="none" stroke="#7e2414" stroke-width="1"/>
<path d="M46 583c6-4 16-5 26-4M52 590c8 2 20 2 30-1" fill="none" stroke="#b04428" stroke-width=".8"/>
<text x="9.500" y="641.5" font-family="Liberation Sans,sans-serif" font-size="8.500" fill="#d6d6d6">7</text>
<rect x="19.600" y="633.400" width="95.100" height="72.600" fill="#fdfdfd"/>
<rect x="24" y="636" width="12" height="1.300" fill="#333"/><rect x="39" y="636" width="16" height="1.300" fill="#3a8aa8"/><rect x="57" y="636" width="6" height="1" fill="#999"/><rect x="64" y="636" width="14" height="1.300" fill="#3a8aa8"/>
<rect x="30" y="640" width="76.500" height="62" fill="#a87a4e"/>
<g filter="url(#bl1)">
<ellipse cx="40" cy="660" rx="4" ry="14" fill="#6e4828" transform="rotate(10 40 660)"/>
<ellipse cx="58" cy="672" rx="3" ry="12" fill="#6e4828" transform="rotate(-20 58 672)"/>
<ellipse cx="74" cy="664" rx="3" ry="16" fill="#6e4828" transform="rotate(15 74 664)"/>
<ellipse cx="90" cy="670" rx="3" ry="14" fill="#6e4828" transform="rotate(-10 90 670)"/>
<ellipse cx="100" cy="690" rx="4" ry="8" fill="#6e4828" transform="rotate(0 100 690)"/>
<ellipse cx="66" cy="694" rx="10" ry="3" fill="#6e4828" transform="rotate(0 66 694)"/>
<ellipse cx="36" cy="692" rx="4" ry="8" fill="#6e4828" transform="rotate(0 36 692)"/>
<ellipse cx="50" cy="646" rx="10" ry="2.5" fill="#6e4828" transform="rotate(0 50 646)"/>
<ellipse cx="86" cy="646" rx="12" ry="2.5" fill="#6e4828" transform="rotate(0 86 646)"/>
<ellipse cx="47" cy="651" rx="3.3" ry="3.8" fill="#dfbe94" transform="rotate(0 47 651)"/>
<ellipse cx="63" cy="648" rx="3.3" ry="3.8" fill="#dfbe94" transform="rotate(0 63 648)"/>
<ellipse cx="72" cy="655" rx="3.3" ry="3.8" fill="#dfbe94" transform="rotate(0 72 655)"/>
<ellipse cx="88" cy="650" rx="3.3" ry="3.8" fill="#dfbe94" transform="rotate(0 88 650)"/>
<ellipse cx="97" cy="655" rx="3.3" ry="3.8" fill="#dfbe94" transform="rotate(0 97 655)"/>
<ellipse cx="46" cy="668" rx="5" ry="11" fill="#dfbe94" transform="rotate(8 46 668)"/>
<ellipse cx="62" cy="664" rx="5.5" ry="11" fill="#dfbe94" transform="rotate(-12 62 664)"/>
<ellipse cx="80" cy="668" rx="5.5" ry="12" fill="#dfbe94" transform="rotate(14 80 668)"/>
<ellipse cx="95" cy="670" rx="4.5" ry="12" fill="#dfbe94" transform="rotate(-5 95 670)"/>
<ellipse cx="52" cy="684" rx="3.3" ry="11" fill="#c9a274" transform="rotate(35 52 684)"/>
<ellipse cx="66" cy="682" rx="3.3" ry="12" fill="#dfbe94" transform="rotate(-40 66 682)"/>
<ellipse cx="78" cy="688" rx="3.3" ry="10" fill="#c9a274" transform="rotate(30 78 688)"/>
<ellipse cx="90" cy="688" rx="3.3" ry="10" fill="#dfbe94" transform="rotate(-20 90 688)"/>
<ellipse cx="42" cy="686" rx="3" ry="9" fill="#c9a274" transform="rotate(-10 42 686)"/>
<ellipse cx="58" cy="690" rx="3" ry="9" fill="#dfbe94" transform="rotate(70 58 690)"/>
<ellipse cx="72" cy="676" rx="2.6" ry="9" fill="#c9a274" transform="rotate(80 72 676)"/>
<ellipse cx="86" cy="660" rx="2.4" ry="8" fill="#c9a274" transform="rotate(60 86 660)"/>
<ellipse cx="54" cy="658" rx="2.4" ry="8" fill="#c9a274" transform="rotate(-60 54 658)"/>
<ellipse cx="100" cy="684" rx="3" ry="9" fill="#c9a274" transform="rotate(10 100 684)"/>
</g>
<rect x="30" y="640" width="76.500" height="62" fill="none" stroke="#8a6240" stroke-width="1"/>
</svg>
<div class="a" style="left:123.0px;top:85.0px;width:9.5px;height:386.0px;background:#646365;"></div>
<div class="a" style="left:123.5px;top:85.5px;width:8.5px;height:9.0px;background:#8a898b;"></div>
<div class="a" style="left:125.5px;top:85.5px;font-size:6px;line-height:10px;color:#2a2a2a;">▴</div>
<div class="a" style="left:123.5px;top:105.0px;width:8.5px;height:20.0px;background:#9b9a9c;"></div>
<div class="a" style="left:123.5px;top:461.5px;width:8.5px;height:9.0px;background:#8a898b;"></div>
<div class="a" style="left:125.5px;top:461.5px;font-size:6px;line-height:10px;color:#2a2a2a;">▾</div>
<div class="a" style="left:133.5px;top:85.0px;width:1.0px;height:386.0px;background:#777678;"></div>
<div class="a" style="left:137.5px;top:105.5px;width:8.5px;height:337.5px;background:#757476;"></div>
<div class="a" style="left:137.5px;top:110.0px;width:8.5px;height:9px;font-size:5.5px;line-height:9px;color:#d9d9d9;text-align:center;transform:rotate(-90deg)">9</div>
<div class="a" style="left:140.5px;top:122.9px;width:2.5px;height:0.8px;background:#aaa;"></div>
<div class="a" style="left:137.5px;top:127.7px;width:8.5px;height:9px;font-size:5.5px;line-height:9px;color:#d9d9d9;text-align:center;transform:rotate(-90deg)">8</div>
<div class="a" style="left:140.5px;top:140.6px;width:2.5px;height:0.8px;background:#aaa;"></div>
<div class="a" style="left:137.5px;top:145.4px;width:8.5px;height:9px;font-size:5.5px;line-height:9px;color:#d9d9d9;text-align:center;transform:rotate(-90deg)">7</div>
<div class="a" style="left:140.5px;top:158.3px;width:2.5px;height:0.8px;background:#aaa;"></div>
<div class="a" style="left:137.5px;top:163.2px;width:8.5px;height:9px;font-size:5.5px;line-height:9px;color:#d9d9d9;text-align:center;transform:rotate(-90deg)">6</div>
<div class="a" style="left:140.5px;top:176.1px;width:2.5px;height:0.8px;background:#aaa;"></div>
<div class="a" style="left:137.5px;top:180.9px;width:8.5px;height:9px;font-size:5.5px;line-height:9px;color:#d9d9d9;text-align:center;transform:rotate(-90deg)">5</div>
<div class="a" style="left:140.5px;top:193.8px;width:2.5px;height:0.8px;background:#aaa;"></div>
<div class="a" style="left:137.5px;top:198.6px;width:8.5px;height:9px;font-size:5.5px;line-height:9px;color:#d9d9d9;text-align:center;transform:rotate(-90deg)">4</div>
<div class="a" style="left:140.5px;top:211.5px;width:2.5px;height:0.8px;background:#aaa;"></div>
<div class="a" style="left:137.5px;top:216.3px;width:8.5px;height:9px;font-size:5.5px;line-height:9px;color:#d9d9d9;text-align:center;transform:rotate(-90deg)">3</div>
<div class="a" style="left:140.5px;top:229.2px;width:2.5px;height:0.8px;background:#aaa;"></div>
<div class="a" style="left:137.5px;top:234.0px;width:8.5px;height:9px;font-size:5.5px;line-height:9px;color:#d9d9d9;text-align:center;transform:rotate(-90deg)">2</div>
<div class="a" style="left:140.5px;top:246.9px;width:2.5px;height:0.8px;background:#aaa;"></div>
<div class="a" style="left:137.5px;top:251.8px;width:8.5px;height:9px;font-size:5.5px;line-height:9px;color:#d9d9d9;text-align:center;transform:rotate(-90deg)">1</div>
<div class="a" style="left:140.5px;top:264.7px;width:2.5px;height:0.8px;background:#aaa;"></div>
<div class="a" style="left:137.5px;top:269.5px;width:8.5px;height:9px;font-size:5.5px;line-height:9px;color:#d9d9d9;text-align:center;transform:rotate(-90deg)">0</div>
<div class="a" style="left:140.5px;top:282.4px;width:2.5px;height:0.8px;background:#aaa;"></div>
<div class="a" style="left:137.5px;top:287.2px;width:8.5px;height:9px;font-size:5.5px;line-height:9px;color:#d9d9d9;text-align:center;transform:rotate(-90deg)">1</div>
<div class="a" style="left:140.5px;top:300.1px;width:2.5px;height:0.8px;background:#aaa;"></div>
<div class="a" style="left:137.5px;top:304.9px;width:8.5px;height:9px;font-size:5.5px;line-height:9px;color:#d9d9d9;text-align:center;transform:rotate(-90deg)">2</div>
<div class="a" style="left:140.5px;top:317.8px;width:2.5px;height:0.8px;background:#aaa;"></div>
<div class="a" style="left:137.5px;top:322.6px;width:8.5px;height:9px;font-size:5.5px;line-height:9px;color:#d9d9d9;text-align:center;transform:rotate(-90deg)">3</div>
<div class="a" style="left:140.5px;top:335.5px;width:2.5px;height:0.8px;background:#aaa;"></div>
<div class="a" style="left:137.5px;top:340.4px;width:8.5px;height:9px;font-size:5.5px;line-height:9px;color:#d9d9d9;text-align:center;transform:rotate(-90deg)">4</div>
<div class="a" style="left:140.5px;top:353.3px;width:2.5px;height:0.8px;background:#aaa;"></div>
<div class="a" style="left:137.5px;top:358.1px;width:8.5px;height:9px;font-size:5.5px;line-height:9px;color:#d9d9d9;text-align:center;transform:rotate(-90deg)">5</div>
<div class="a" style="left:140.5px;top:371.0px;width:2.5px;height:0.8px;background:#aaa;"></div>
<div class="a" style="left:137.5px;top:375.8px;width:8.5px;height:9px;font-size:5.5px;line-height:9px;color:#d9d9d9;text-align:center;transform:rotate(-90deg)">6</div>
<div class="a" style="left:140.5px;top:388.7px;width:2.5px;height:0.8px;background:#aaa;"></div>
<div class="a" style="left:137.5px;top:393.5px;width:8.5px;height:9px;font-size:5.5px;line-height:9px;color:#d9d9d9;text-align:center;transform:rotate(-90deg)">7</div>
<div class="a" style="left:140.5px;top:406.4px;width:2.5px;height:0.8px;background:#aaa;"></div>
<div class="a" style="left:137.5px;top:411.2px;width:8.5px;height:9px;font-size:5.5px;line-height:9px;color:#d9d9d9;text-align:center;transform:rotate(-90deg)">8</div>
<div class="a" style="left:140.5px;top:424.1px;width:2.5px;height:0.8px;background:#aaa;"></div>
<div class="a" style="left:137.5px;top:429.0px;width:8.5px;height:9px;font-size:5.5px;line-height:9px;color:#d9d9d9;text-align:center;transform:rotate(-90deg)">9</div>
<div class="a" style="left:296.0px;top:88.0px;width:450.0px;height:8.5px;background:#757476;"></div>
<div class="a" style="left:302.5px;top:88px;width:12px;height:8.5px;font-size:5.8px;line-height:8.5px;color:#e0e0e0;text-align:center">12</div>
<div class="a" style="left:317.0px;top:91.0px;width:0.8px;height:2.5px;background:#aaa;"></div>
<div class="a" style="left:320.2px;top:88px;width:12px;height:8.5px;font-size:5.8px;line-height:8.5px;color:#e0e0e0;text-align:center">11</div>
<div class="a" style="left:334.7px;top:91.0px;width:0.8px;height:2.5px;background:#aaa;"></div>
<div class="a" style="left:337.9px;top:88px;width:12px;height:8.5px;font-size:5.8px;line-height:8.5px;color:#e0e0e0;text-align:center">10</div>
<div class="a" style="left:352.4px;top:91.0px;width:0.8px;height:2.5px;background:#aaa;"></div>
<div class="a" style="left:355.7px;top:88px;width:12px;height:8.5px;font-size:5.8px;line-height:8.5px;color:#e0e0e0;text-align:center">9</div>
<div class="a" style="left:370.2px;top:91.0px;width:0.8px;height:2.5px;background:#aaa;"></div>
<div class="a" style="left:373.4px;top:88px;width:12px;height:8.5px;font-size:5.8px;line-height:8.5px;color:#e0e0e0;text-align:center">8</div>
<div class="a" style="left:387.9px;top:91.0px;width:0.8px;height:2.5px;background:#aaa;"></div>
<div class="a" style="left:391.1px;top:88px;width:12px;height:8.5px;font-size:5.8px;line-height:8.5px;color:#e0e0e0;text-align:center">7</div>
<div class="a" style="left:405.6px;top:91.0px;width:0.8px;height:2.5px;background:#aaa;"></div>
<div class="a" style="left:408.8px;top:88px;width:12px;height:8.5px;font-size:5.8px;line-height:8.5px;color:#e0e0e0;text-align:center">6</div>
<div class="a" style="left:423.3px;top:91.0px;width:0.8px;height:2.5px;background:#aaa;"></div>
<div class="a" style="left:426.5px;top:88px;width:12px;height:8.5px;font-size:5.8px;line-height:8.5px;color:#e0e0e0;text-align:center">5</div>
<div class="a" style="left:441.0px;top:91.0px;width:0.8px;height:2.5px;background:#aaa;"></div>
<div class="a" style="left:444.3px;top:88px;width:12px;height:8.5px;font-size:5.8px;line-height:8.5px;color:#e0e0e0;text-align:center">4</div>
<div class="a" style="left:458.8px;top:91.0px;width:0.8px;height:2.5px;background:#aaa;"></div>
<div class="a" style="left:462.0px;top:88px;width:12px;height:8.5px;font-size:5.8px;line-height:8.5px;color:#e0e0e0;text-align:center">3</div>
<div class="a" style="left:476.5px;top:91.0px;width:0.8px;height:2.5px;background:#aaa;"></div>
<div class="a" style="left:479.7px;top:88px;width:12px;height:8.5px;font-size:5.8px;line-height:8.5px;color:#e0e0e0;text-align:center">2</div>
<div class="a" style="left:494.2px;top:91.0px;width:0.8px;height:2.5px;background:#aaa;"></div>
<div class="a" style="left:497.4px;top:88px;width:12px;height:8.5px;font-size:5.8px;line-height:8.5px;color:#e0e0e0;text-align:center">1</div>
<div class="a" style="left:511.9px;top:91.0px;width:0.8px;height:2.5px;background:#aaa;"></div>
<div class="a" style="left:515.1px;top:88px;width:12px;height:8.5px;font-size:5.8px;line-height:8.5px;color:#e0e0e0;text-align:center">0</div>
<div class="a" style="left:529.6px;top:91.0px;width:0.8px;height:2.5px;background:#aaa;"></div>
<div class="a" style="left:532.9px;top:88px;width:12px;height:8.5px;font-size:5.8px;line-height:8.5px;color:#e0e0e0;text-align:center">1</div>
<div class="a" style="left:547.4px;top:91.0px;width:0.8px;height:2.5px;background:#aaa;"></div>
<div class="a" style="left:550.6px;top:88px;width:12px;height:8.5px;font-size:5.8px;line-height:8.5px;color:#e0e0e0;text-align:center">2</div>
<div class="a" style="left:565.1px;top:91.0px;width:0.8px;height:2.5px;background:#aaa;"></div>
<div class="a" style="left:568.3px;top:88px;width:12px;height:8.5px;font-size:5.8px;line-height:8.5px;color:#e0e0e0;text-align:center">3</div>
<div class="a" style="left:582.8px;top:91.0px;width:0.8px;height:2.5px;background:#aaa;"></div>
<div class="a" style="left:586.0px;top:88px;width:12px;height:8.5px;font-size:5.8px;line-height:8.5px;color:#e0e0e0;text-align:center">4</div>
<div class="a" style="left:600.5px;top:91.0px;width:0.8px;height:2.5px;background:#aaa;"></div>
<div class="a" style="left:603.7px;top:88px;width:12px;height:8.5px;font-size:5.8px;line-height:8.5px;color:#e0e0e0;text-align:center">5</div>
<div class="a" style="left:618.2px;top:91.0px;width:0.8px;height:2.5px;background:#aaa;"></div>
<div class="a" style="left:621.5px;top:88px;width:12px;height:8.5px;font-size:5.8px;line-height:8.5px;color:#e0e0e0;text-align:center">6</div>
<div class="a" style="left:636.0px;top:91.0px;width:0.8px;height:2.5px;background:#aaa;"></div>
<div class="a" style="left:639.2px;top:88px;width:12px;height:8.5px;font-size:5.8px;line-height:8.5px;color:#e0e0e0;text-align:center">7</div>
<div class="a" style="left:653.7px;top:91.0px;width:0.8px;height:2.5px;background:#aaa;"></div>
<div class="a" style="left:656.9px;top:88px;width:12px;height:8.5px;font-size:5.8px;line-height:8.5px;color:#e0e0e0;text-align:center">8</div>
<div class="a" style="left:671.4px;top:91.0px;width:0.8px;height:2.5px;background:#aaa;"></div>
<div class="a" style="left:674.6px;top:88px;width:12px;height:8.5px;font-size:5.8px;line-height:8.5px;color:#e0e0e0;text-align:center">9</div>
<div class="a" style="left:689.1px;top:91.0px;width:0.8px;height:2.5px;background:#aaa;"></div>
<div class="a" style="left:692.3px;top:88px;width:12px;height:8.5px;font-size:5.8px;line-height:8.5px;color:#e0e0e0;text-align:center">10</div>
<div class="a" style="left:706.8px;top:91.0px;width:0.8px;height:2.5px;background:#aaa;"></div>
<div class="a" style="left:710.1px;top:88px;width:12px;height:8.5px;font-size:5.8px;line-height:8.5px;color:#e0e0e0;text-align:center">11</div>
<div class="a" style="left:724.6px;top:91.0px;width:0.8px;height:2.5px;background:#aaa;"></div>
<div class="a" style="left:727.8px;top:88px;width:12px;height:8.5px;font-size:5.8px;line-height:8.5px;color:#e0e0e0;text-align:center">12</div>
<div class="a" style="left:892.0px;top:85.0px;width:8.0px;height:386.0px;background:#605f61;"></div>
<div class="a" style="left:892.5px;top:85.5px;width:7.0px;height:9.0px;background:#8a898b;"></div>
<div class="a" style="left:894.0px;top:85.5px;font-size:6px;line-height:10px;color:#2a2a2a;">▴</div>
<div class="a" style="left:892.5px;top:107.0px;width:7.0px;height:12.0px;background:#9b9a9c;"></div>
<div class="a" style="left:892.5px;top:408.0px;width:7.0px;height:9.0px;background:#8a898b;"></div>
<div class="a" style="left:894.0px;top:408.0px;font-size:6px;line-height:10px;color:#2a2a2a;">▾</div>
<div class="a" style="left:894.0px;top:419.0px;font-size:6px;line-height:10px;color:#2a2a2a;">⇞</div>
<div class="a" style="left:894.0px;top:428.0px;font-size:6px;line-height:10px;color:#2a2a2a;">⇟</div>
<div class="a" style="left:148.0px;top:274.0px;width:744.0px;height:0.8px;background:rgba(200,200,200,.35);"></div>
<div class="a" style="left:137.0px;top:449.0px;width:755.0px;height:1.0px;background:#818082;"></div>
<div class="a" style="left:141px;top:454px;font-family:'Liberation Serif',serif;font-size:9.3px;line-height:11px;color:#e6e6e6">Заметки к слайду</div>
<div class="a" style="left:0.0px;top:471.0px;width:900.0px;height:13.5px;background:#5d5c5e;"></div>
<div class="a" style="left:2.5px;top:472.7px;font-size:5.98px;line-height:10px;color:#ececec;">Слайд 5 из 90</div>
<svg class="a" style="left:49px;top:472.5px" width="11" height="10" viewBox="0 0 11 10"><rect x="1" y="1.500" width="6" height="6" fill="none" stroke="#ddd" stroke-width=".8"/><path d="M5 6l2 2 3-5" fill="none" stroke="#ddd" stroke-width=".8"/></svg>
<div class="a" style="left:67.0px;top:472.7px;font-size:6.13px;line-height:10px;color:#ececec;">русский</div>
<div class="a" style="left:628.0px;top:472.7px;font-size:5.49px;line-height:10px;color:#d0d0d0;">Заметки</div>
<div class="a" style="left:659.0px;top:473.5px;width:6.5px;height:5.0px;background:#e8e8e8;"></div>
<div class="a" style="left:668.0px;top:472.7px;font-size:6.24px;line-height:10px;color:#ececec;">Примечания</div>
<div class="a" style="left:715.0px;top:471.5px;width:18.0px;height:13.0px;background:#444345;"></div>
<svg class="a" style="left:718px;top:472.5px" width="90" height="11" viewBox="0 0 90 11" fill="#e8e8e8"><rect x="1.500" y="2" width="2" height="7"/><rect x="4.500" y="2" width="5" height="7" fill="none" stroke="#e8e8e8" stroke-width=".9"/><rect x="21" y="2" width="3" height="3"/><rect x="25" y="2" width="3" height="3"/><rect x="21" y="6" width="3" height="3"/><rect x="25" y="6" width="3" height="3"/><rect x="40" y="2" width="7" height="6.500" fill="#bbb"/><rect x="59" y="2" width="7" height="4"/><path d="M62.500 6v3M60.500 9.500h4" stroke="#e8e8e8" stroke-width=".8"/></svg>
<div class="a" style="left:793.0px;top:472.5px;font-size:8px;line-height:10px;color:#eee;">–</div>
<div class="a" style="left:799.0px;top:477.5px;width:65.0px;height:0.8px;background:#d8d8d8;"></div>
<div class="a" style="left:821.5px;top:473.5px;width:1.5px;height:8.0px;background:#f2f2f2;"></div>
<div class="a" style="left:830.0px;top:476.0px;width:0.8px;height:3.0px;background:#ddd;"></div>
<div class="a" style="left:864.0px;top:472.5px;font-size:9px;line-height:10px;color:#eee;">+</div>
<div class="a" style="left:873.0px;top:472.7px;font-size:5.0px;line-height:10px;color:#ececec;">80%</div>
<svg class="a" style="left:889.5px;top:473px" width="9" height="9" viewBox="0 0 9 9"><rect x=".5" y=".5" width="8" height="8" fill="none" stroke="#eee" stroke-width=".9"/><path d="M2.500 2.500l4 4M6.500 2.500l-4 4" stroke="#eee" stroke-width=".8"/></svg>
<div class="a" style="left:273.0px;top:454.0px;width:355.0px;height:24.5px;background:#fbfbfb;box-shadow:0 0 3px rgba(0,0,0,.4)"></div>
<div class="a" style="left:278.5px;top:462.5px;width:3.5px;height:7.0px;background:#d8d8d8;"></div>
<div class="a" style="left:288.0px;top:461.0px;font-size:7.04px;line-height:10px;color:#5f5f5f;">Приложению meet.google.com предоставлен доступ к вашему экрану.</div>
<div class="a" style="left:522.0px;top:458.0px;width:71.0px;height:17.0px;background:#1a73e8;border-radius:2px"></div>
<div class="a" style="left:531.0px;top:461.5px;font-size:6.63px;line-height:10px;color:#ffffff;font-weight:bold;">Закрыть доступ</div>
<div class="a" style="left:599.0px;top:461.5px;font-size:7.03px;line-height:10px;color:#4a8be8;">Скрыть</div>
<div class="a" style="left:0.0px;top:484.5px;width:900.0px;height:22.5px;background:#1b1c20;"></div>
<div class="a" style="left:248.0px;top:484.5px;width:652.0px;height:22.5px;background:linear-gradient(90deg,#1b1c20,#232528 30%,#1f2124 60%,#1c1d21);"></div>
<svg class="a" style="left:0px;top:484.5px" width="270" height="23" viewBox="0 0 270 23"><path d="M8.500 7.500l4-.6v4.200h-4zM13.200 6.800l5-.8v5.100h-5zM8.500 11.800h4v4.200l-4-.6zM13.200 11.800h5v5.100l-5-.8z" fill="#fff"/><circle cx="43.500" cy="9.500" r="3.300" fill="none" stroke="#e6e6e6" stroke-width="1.200"/><path d="M41 12l-3.500 4" stroke="#e6e6e6" stroke-width="1.400"/><path d="M78 6.500a5 5 0 1 0 0 8l-2-2a2.500 2.500 0 1 1 0-4z" fill="#d94a38"/><path d="M66 14l5-2 3 3-5 1.500z" fill="#eee"/><path d="M101 5.500c-4 3-4 6 0 9.500l5 .5-3-4z" fill="#e9edf5"/><path d="M99 5.500l2.500 0-1.500 4.500z" fill="#6b8fd6"/><circle cx="129.500" cy="11" r="6.200" fill="#8e2fc0"/><circle cx="129.500" cy="11" r="3.500" fill="none" stroke="#c98be6" stroke-width="1"/><circle cx="129.500" cy="11" r="1.200" fill="#e2c0f2"/><path d="M155 6l5 1 4-2-1 5 3 3-5 1-3 3-1-4-4-2 4-2z" fill="#d8322a"/><rect x="147" y="20.500" width="23" height="1.500" fill="#7fb0d8"/><circle cx="188.500" cy="11" r="6.300" fill="#dd4b3e"/><path d="M188.500 11L183 14.200A6.300 6.300 0 0 0 191.700 16.500z" fill="#3aa757"/><path d="M188.500 11l3.200 5.500A6.300 6.300 0 0 0 194 7.800z" fill="#fbc116"/><circle cx="188.500" cy="11" r="2.800" fill="#4a8af4" stroke="#fff" stroke-width="1"/><rect x="177" y="20.500" width="23" height="1.500" fill="#7fb0d8"/><rect x="211" y="5.500" width="12" height="11" fill="#2b5fb0"/><rect x="217" y="7" width="7" height="8" fill="#eaf0fa"/><text x="212.500" y="14" font-size="7" font-weight="bold" fill="#fff" font-family="Liberation Sans,sans-serif">W</text><rect x="206" y="20.500" width="23" height="1.500" fill="#7fb0d8"/><rect x="233" y="0" width="28" height="23" fill="#d4702a"/><rect x="241" y="5.500" width="12" height="11" fill="#f3f3f3"/><rect x="241" y="5.500" width="7" height="11" fill="#d24726"/><text x="242.200" y="14" font-size="7" font-weight="bold" fill="#fff" font-family="Liberation Sans,sans-serif">P</text></svg>
<svg class="a" style="left:796px;top:484.5px" width="104" height="23" viewBox="0 0 104 23"><path d="M3 13l3.500-3.500L10 13" fill="none" stroke="#e6e6e6" stroke-width="1"/><rect x="83.500" y="6.500" width="9" height="7.500" fill="none" stroke="#e6e6e6" stroke-width="1"/></svg>
<div class="a" style="left:813.5px;top:490.5px;font-size:6.0px;line-height:10px;color:#ececec;">ENG</div>
<div class="a" style="left:843.0px;top:485.5px;font-size:5.99px;line-height:10px;color:#ececec;">10:20</div>
<div class="a" style="left:834.0px;top:496.5px;font-size:6.59px;line-height:10px;color:#ececec;">05.12.2022</div>
</div></div><!-- /ppt -->
<svg width="0" height="0" style="position:absolute"><defs><filter id="pb1" x="-20%" y="-20%" width="140%" height="140%"><feGaussianBlur stdDeviation="1.200"/></filter><filter id="pb2" x="-20%" y="-20%" width="140%" height="140%"><feGaussianBlur stdDeviation="2.500"/></filter><filter id="pb3" x="-20%" y="-20%" width="140%" height="140%"><feGaussianBlur stdDeviation="1.1"/></filter></defs></svg>
<div class="abs" style="left:921.800px;top:275.800px;width:163.400px;height:136px;border-radius:9px;background:#669df6"></div>
<svg class="abs" style="left:926.300px;top:280.300px;border-radius:5px" width="154.400" height="127" viewBox="926.300 280.300 154.400 127">
<defs><linearGradient id="wall" x1="0" x2="1"><stop offset="0" stop-color="#a8908a"/><stop offset=".3" stop-color="#c2a39a"/><stop offset="1" stop-color="#cfb2a8"/></linearGradient><linearGradient id="wallv" x1="0" x2="0" y1="0" y2="1"><stop offset="0" stop-color="#8f7a78" stop-opacity=".6"/><stop offset=".35" stop-color="#9a8480" stop-opacity=".15"/><stop offset=".7" stop-color="#a88a84" stop-opacity="0"/></linearGradient></defs>
<rect x="926" y="280" width="155" height="128" fill="url(#wall)"/><rect x="926" y="280" width="155" height="128" fill="url(#wallv)"/>
<g filter="url(#pb1)">
<path d="M974 340c-4-22 6-40 28-42 20-1 32 10 34 28 2 12 6 24 0 40-8 10-50 10-58 2-6-8-2-18-4-28z" fill="#4b2b27"/>
<ellipse cx="975" cy="366" rx="8" ry="9" fill="#4b2b27"/><ellipse cx="1034" cy="362" rx="7" ry="12" fill="#50302a"/>
<path d="M926 408c6-20 24-32 50-38l14-4h34l10 2c20 4 38 12 46 26v14z" fill="#1b181b"/>
<path d="M986 380c4 10 10 20 16 28h-22c0-10 2-20 6-28z" fill="#6a7a5e"/><path d="M1012 378c8 8 16 18 20 30h-26c2-10 4-20 6-30z" fill="#4a5a78"/><path d="M1020 376c10 6 22 18 26 32h-12c-4-12-10-22-14-32z" fill="#6f7a52"/><path d="M996 396c4 2 8 6 10 12h-16z" fill="#7a6a8a"/>
<path d="M990 362h28v18c-8 6-20 6-28 0z" fill="#c79c94"/>
<ellipse cx="1003" cy="345" rx="22.500" ry="31" fill="#d8b0a8"/>
<ellipse cx="1004" cy="370" rx="15" ry="8" fill="#d2a8a0"/>
<path d="M979 334c0-18 10-30 24-30 16 0 26 10 26 28-4-8-10-14-20-14-10-1-18 2-24 8-2 2-4 5-6 8z" fill="#54302a"/>
</g>
<g filter="url(#pb3)"><path d="M979.500 329.500l21 1c0 8-3 13.500-10 13.500-7 0-11-5-11-14.500z" fill="#c2b0b4" stroke="#4a3234" stroke-width="1.300"/><path d="M1025.500 328.500l-21 2c0 8 3 13.500 10 13.500 7 0 11-5.500 11-15.500z" fill="#c2b0b4" stroke="#4a3234" stroke-width="1.300"/><path d="M979 329l22 1.500 2 .5 2-.5 21-2.500" fill="none" stroke="#33201f" stroke-width="2"/><path d="M996 357.500c5-1.500 10-1.500 15 0" stroke="#8a4a4c" stroke-width="1.800" fill="none"/><path d="M1000 351h6" stroke="#b8908a" stroke-width="1.500"/></g>
</svg>
<svg class="abs" style="left:1042.200px;top:288.900px" width="29.800" height="29.800" viewBox="0 0 29.800 29.800"><circle cx="14.900" cy="14.900" r="14.900" fill="#1a73e8"/><g stroke="#fff" stroke-width="3.200" stroke-linecap="round"><path d="M8.700 13.500v3M14.900 10v9.800M21.100 13v4"/></g></svg>
<div class="abs tname" style="left:940.5px;top:379.2px;font-size:15.02px;line-height:18px">Olga Shkolna</div>
<div class="abs tile" style="left:1098px;top:276px;width:163px;height:136px"></div>
<div class="abs" style="left:1154.5px;top:319.5px;width:48px;height:48px;border-radius:24px;background:#02594c;color:#fff;font-size:27px;line-height:48px;text-align:center">M</div>
<svg class="abs" style="left:1218.5px;top:289px" width="28" height="28" viewBox="0 0 28 28"><circle cx="14" cy="14" r="14" fill="#32353a"/><path transform="translate(4.700 4.600) scale(.78)" d="M19 11h-1.700c0 .74-.16 1.430-.43 2.050l1.230 1.230c.56-.98.900-2.090.900-3.280zm-4.020.17c0-.6.020-.11.020-.17V5c0-1.660-1.340-3-3-3S9 3.340 9 5v.180l5.980 5.990zM4.270 3L3 4.270l6.010 6.010V11c0 1.660 1.330 3 2.990 3 .22 0 .44-.3.650-.08l1.660 1.660c-.71.330-1.500.52-2.310.52-2.760 0-5.300-2.100-5.300-5.100H5c0 3.410 2.720 6.230 6 6.720V21h2v-3.280c.91-.13 1.770-.45 2.540-.90L19.730 21 21 19.730 4.270 3z" fill="#fff"/></svg>
<div class="abs tname" style="left:1116px;top:379.2px;font-size:15.15px;line-height:18px">Марта Іванівна...</div>
<div class="abs tile" style="left:922px;top:425px;width:163px;height:135.5px"></div>
<svg class="abs" style="left:979.0px;top:467.8px;border-radius:50%" width="49" height="49" viewBox="0 0 49 49">
<rect width="49" height="49" fill="#ece8e0"/><g filter="url(#pb3)"><path d="M2 10l8-8 8 12 6-12h6l-4 18-8 2-6-10-6 8z" fill="#1e1e1e"/><path d="M34 2l10 6 4 10-8 2-4-8z" fill="#262626"/><path d="M0 22l14-3 8 4 14-2 13 1v12H0z" fill="#eeb92a"/><path d="M2 30l6-1 4 8 2-9 5 0-2 18-6 2-4-8-2 8-5-2z" fill="#d8322c"/><path d="M38 24c6-2 11 1 11 5l-5 1c-1-2-3-2-4 0-1 3 0 6 3 6l0-3 6 0v8c-6 3-13 1-14-6-1-5 0-9 3-11z" fill="#d8322c"/><path d="M13 49c0-10 3-18 9-21l7-2c6 2 10 10 10 23z" fill="#e4e9f2"/><path d="M24 30l4 19h-7z" fill="#a8b6cc"/><ellipse cx="22.500" cy="15" rx="6" ry="8" fill="#d8ac96"/><path d="M20 6c5-3 11-1 12 5 1 4 0 8-2 10l-2-9c-3-2-6-3-9-2z" fill="#2e221e"/><path d="M30 12c3 6 4 16 2 26l-3 4c1-10 1-20-2-28z" fill="#2e221e"/><rect x="22" y="21" width="5" height="7" fill="#cc9c86"/></g>
</svg>
<svg class="abs" style="left:1042.5px;top:438px" width="28" height="28" viewBox="0 0 28 28"><circle cx="14" cy="14" r="14" fill="#32353a"/><path transform="translate(4.700 4.600) scale(.78)" d="M19 11h-1.700c0 .74-.16 1.430-.43 2.050l1.230 1.230c.56-.98.900-2.090.900-3.280zm-4.020.17c0-.6.020-.11.020-.17V5c0-1.660-1.340-3-3-3S9 3.340 9 5v.180l5.980 5.990zM4.270 3L3 4.270l6.010 6.010V11c0 1.660 1.330 3 2.990 3 .22 0 .44-.3.650-.08l1.660 1.660c-.71.330-1.500.52-2.310.52-2.760 0-5.300-2.100-5.300-5.100H5c0 3.410 2.720 6.230 6 6.720V21h2v-3.280c.91-.13 1.770-.45 2.540-.90L19.730 21 21 19.730 4.270 3z" fill="#fff"/></svg>
<div class="abs tname" style="left:940.5px;top:527.8px;font-size:15.75px;line-height:18px">Олександра Р...</div>
<div class="abs tile" style="left:1098px;top:425px;width:163px;height:135.5px"></div>
<svg class="abs" style="left:1154.5px;top:467.8px;border-radius:50%" width="49" height="49" viewBox="0 0 49 49">
<rect width="49" height="49" fill="#2e2629"/><g filter="url(#pb3)"><path d="M0 0h20v30H0z" fill="#7d8b9b"/><rect x="40" y="0" width="9" height="49" fill="#1f1a1d"/><path d="M7 38c-3-16 2-32 17-34 14-1 21 9 19 25-1 8-4 14-8 20H12c-2-3-4-7-5-11z" fill="#6f302f"/><path d="M36 12c5 6 6 18 3 28l-5 4z" fill="#4a1e20"/><ellipse cx="27.500" cy="25" rx="10.500" ry="14" fill="#ecd9d1" transform="rotate(8 27.500 25)"/><path d="M13 24c0-13 8-18 16-16 6 1 10 6 10 12-4-5-10-8-17-7-4 2-7 6-9 11z" fill="#7c3836"/><path d="M20 49c0-6 2-10 5-12 4 1 7 6 7 12z" fill="#e6d0c7"/><ellipse cx="28.500" cy="33.500" rx="3.200" ry="1.500" fill="#8e1a28" transform="rotate(8 28.500 33.500)"/><path d="M21 21l5 .7M30.500 22.500l5 .7" stroke="#3a2626" stroke-width="1.400"/><path d="M11 49c1-5 4-8 8-9l4 9zM44 49c-1-5-3-8-7-9l-4 9z" fill="#e5b9b2"/></g>
</svg>
<svg class="abs" style="left:1218.5px;top:438px" width="28" height="28" viewBox="0 0 28 28"><circle cx="14" cy="14" r="14" fill="#32353a"/><path transform="translate(4.700 4.600) scale(.78)" d="M19 11h-1.700c0 .74-.16 1.430-.43 2.050l1.230 1.230c.56-.98.900-2.090.900-3.280zm-4.020.17c0-.6.020-.11.020-.17V5c0-1.660-1.340-3-3-3S9 3.340 9 5v.180l5.980 5.990zM4.270 3L3 4.270l6.010 6.010V11c0 1.660 1.330 3 2.990 3 .22 0 .44-.3.650-.08l1.660 1.660c-.71.330-1.500.52-2.310.52-2.760 0-5.300-2.100-5.300-5.100H5c0 3.410 2.720 6.230 6 6.720V21h2v-3.280c.91-.13 1.770-.45 2.540-.90L19.730 21 21 19.730 4.270 3z" fill="#fff"/></svg>
<div class="abs tname" style="left:1116px;top:527.8px;font-size:14.92px;line-height:18px">Марія Василів...</div>
<div class="abs tile" style="left:922px;top:573.5px;width:163px;height:135.5px"></div>
<svg class="abs" style="left:959.400px;top:573.5px" width="86.500" height="135.500" viewBox="959.400 573.500 86.500 135.500">
<rect x="959" y="573.500" width="88" height="135.500" fill="#e3e3e9"/>
<path d="M959 573.500h88v33l-50 8-38 2z" fill="#dcdce0"/>
<g stroke="#cfcfd5" stroke-width="1.100" fill="none"><path d="M959 590l88-10M959 604l70-10M988 573.500l10 32M1022 573.500l6 26M962 573.500l4 40"/></g>
<path d="M959 616.500l40-3 47-7.500" stroke="#f2f2f6" stroke-width="2" fill="none"/>
<g filter="url(#pb1)">
<path d="M959 637l12-2 6 3v71h-18z" fill="#d4b78f"/><path d="M972 635l5 3v71h-5z" fill="#b8986c"/>
<path d="M966 709c2-12 12-20 26-24l8-4h30l8 3c4 2 7 6 8 12v13z" fill="#6d684a"/>
<path d="M970 709c4-8 10-14 18-16l6 16zM1032 690c6 2 12 8 14 12v7h-18z" fill="#94825a"/><path d="M978 700l10-8 6 12zM1028 698l10 4-4 7z" fill="#4c4a34"/><path d="M986 690c4-2 8-2 10 2l-4 8z" fill="#b09868"/>
<path d="M999 690c0-6 6-8 15-8s14 2 14 8l-2 19h-25z" fill="#1a222c"/>
<path d="M993 664c-4-20 4-34 21-34.500 18 0 26 12 22 34l-3 10h-36z" fill="#9a7a52"/>
<ellipse cx="1014.200" cy="662" rx="16" ry="20" fill="#d6ab9c"/>
<path d="M996 656c0-14 7-22 17-22 12 0 19 8 19 22-3-8-8-13-14-13.500-4 4-12 7-22 13.500z" fill="#a6845a"/>
<rect x="1005" y="678" width="18" height="9" fill="#c4988a"/>
</g>
<g filter="url(#pb3)"><path d="M1003 657h7.500M1018 657h7.500" stroke="#5a4038" stroke-width="1.700"/><path d="M1009 674c3-1 7-1 10 0" stroke="#a86a64" stroke-width="1.500" fill="none"/><path d="M1013 662v6" stroke="#c09484" stroke-width="1.500"/></g>
</svg>
<svg class="abs" style="left:1042.7px;top:586.9px" width="28" height="28" viewBox="0 0 28 28"><circle cx="14" cy="14" r="14" fill="#32353a"/><path transform="translate(4.700 4.600) scale(.78)" d="M19 11h-1.700c0 .74-.16 1.430-.43 2.050l1.230 1.230c.56-.98.900-2.090.900-3.280zm-4.020.17c0-.6.020-.11.020-.17V5c0-1.660-1.340-3-3-3S9 3.340 9 5v.180l5.980 5.990zM4.270 3L3 4.270l6.010 6.010V11c0 1.660 1.330 3 2.990 3 .22 0 .44-.3.650-.08l1.660 1.660c-.71.330-1.500.52-2.310.52-2.760 0-5.300-2.100-5.300-5.100H5c0 3.410 2.720 6.230 6 6.720V21h2v-3.280c.91-.13 1.770-.45 2.540-.90L19.730 21 21 19.730 4.270 3z" fill="#fff"/></svg>
<div class="abs tname" style="left:940.5px;top:677px;font-size:15.45px;line-height:18px">Олена Казімір...</div>
<div class="abs tile" style="left:1098px;top:573.5px;width:163px;height:135.5px"></div>
<svg class="abs" style="left:1154.5px;top:615.9px;border-radius:50%" width="49" height="49" viewBox="0 0 49 49">
<rect width="49" height="49" fill="#a9abba"/><g filter="url(#pb3)"><path d="M0 0h20v49H0z" fill="#b6a8a8"/><circle cx="10" cy="17" r="7.500" fill="#a9a3a8"/><circle cx="10" cy="17" r="4" fill="#c4b4b2"/><path d="M30 0h19v49H34z" fill="#a4a8ba"/><path d="M16 22c-1-10 3-15 10-15.500 8 0 12 5 10 14l-2 9H19z" fill="#4a3228"/><ellipse cx="23.500" cy="21.500" rx="6.300" ry="8.800" fill="#c99c84" transform="rotate(-8 23.500 21.500)"/><path d="M17 17c1-6 5-9 10-8.500 4 .5 7 3 8 7-4-3-8-4-12-3-3 1-4 2-6 4.500z" fill="#3e2a22"/><path d="M32 14c3 4 3 10 1 15l-3 2c1-6 1-11 0-16z" fill="#3e2a22"/><path d="M21 28h8l1 10h-10z" fill="#c4957c"/><path d="M9 49c1-7 5-11 11-12l5 5 6-5c6 1 9 5 10 12z" fill="#1c2a5c"/><path d="M20 37l5 6 6-6z" fill="#c9a088"/></g>
</svg>
<svg class="abs" style="left:1218.5px;top:588px" width="28" height="28" viewBox="0 0 28 28"><circle cx="14" cy="14" r="14" fill="#32353a"/><path transform="translate(4.700 4.600) scale(.78)" d="M19 11h-1.700c0 .74-.16 1.430-.43 2.050l1.230 1.230c.56-.98.900-2.090.900-3.280zm-4.020.17c0-.6.020-.11.020-.17V5c0-1.660-1.340-3-3-3S9 3.340 9 5v.180l5.980 5.990zM4.270 3L3 4.270l6.010 6.010V11c0 1.660 1.330 3 2.990 3 .22 0 .44-.3.650-.08l1.660 1.660c-.71.330-1.500.52-2.310.52-2.760 0-5.300-2.100-5.300-5.100H5c0 3.410 2.720 6.230 6 6.720V21h2v-3.280c.91-.13 1.770-.45 2.540-.90L19.730 21 21 19.730 4.270 3z" fill="#fff"/></svg>
<div class="abs tname" style="left:1116px;top:677px;font-size:14.06px;line-height:18px">Ви</div>
<div class="abs w" style="left:13.500px;top:860.7px;font-size:18.57px;line-height:20px">09:20</div>
<div class="abs" style="left:74.500px;top:862.500px;width:1px;height:17px;background:#5f6368"></div>
<div class="abs w" style="left:90.500px;top:860.7px;font-size:17.44px;line-height:20px">Профорієнтаційна зустріч для студентів 4 курсу ...</div>
<svg class="abs" style="left:662.7px;top:848.9000000000001px" width="44.600" height="44.600" viewBox="-22.300 -22.300 44.600 44.600"><circle r="22.300" fill="#ea4335"/><path transform="translate(-11.600 -11.300) scale(.96)" d="M19 11h-1.700c0 .74-.16 1.430-.43 2.050l1.230 1.230c.56-.98.900-2.090.900-3.280zm-4.020.17c0-.6.020-.11.020-.17V5c0-1.660-1.340-3-3-3S9 3.340 9 5v.180l5.980 5.990zM4.270 3L3 4.270l6.010 6.010V11c0 1.660 1.330 3 2.990 3 .22 0 .44-.3.650-.08l1.660 1.660c-.71.330-1.500.52-2.310.52-2.760 0-5.300-2.100-5.300-5.100H5c0 3.410 2.720 6.230 6 6.720V21h2v-3.280c.91-.13 1.770-.45 2.540-.90L19.730 21 21 19.730 4.270 3z" fill="#fff"/></svg>
<svg class="abs" style="left:720.7px;top:848.9000000000001px" width="44.600" height="44.600" viewBox="-22.300 -22.300 44.600 44.600"><circle r="22.300" fill="#ea4335"/><path transform="translate(-11.700 -11.300) scale(1)" d="M9.560 8l-2-2-4.150-4.140L2 3.270 4.730 6H4c-.55 0-1 .45-1 1v10c0 .55.45 1 1 1h12c.21 0 .39-.8.550-.18L19.730 21l1.410-1.410-8.860-8.860L9.560 8zM5 16V8h1.730l8 8H5zm10-8v2.610l6 6V6.500l-4 4V7c0-.55-.45-1-1-1h-5.610l2 2H15z" fill="#fff"/></svg>
<svg class="abs" style="left:778.5px;top:848.9000000000001px" width="44.600" height="44.600" viewBox="-22.300 -22.300 44.600 44.600"><circle r="22.300" fill="#3c4043"/><path transform="translate(-12.800 -13.300) scale(1.08 1.12)" d="M21 7c0-1.380-1.120-2.500-2.500-2.500-.17 0-.34.020-.5.050V4c0-1.380-1.120-2.500-2.500-2.500-.23 0-.46.030-.67.090C14.460.66 13.560 0 12.500 0c-1.230 0-2.250.89-2.460 2.060C9.870 2.020 9.690 2 9.500 2 8.120 2 7 3.120 7 4.500v5.890c-.34-.31-.76-.54-1.220-.66L5.010 9.520c-.83-.23-1.700.09-2.190.83-.38.57-.4 1.310-.15 1.950l2.560 6.430C6.490 21.910 9.570 24 12.980 24 17.390 24 21 20.410 21 16V7zm-2 9c0 3.310-2.690 6-6.020 6-2.590 0-4.920-1.590-5.880-3.990L4.530 11.550l.76.200c.28.070.5.270.6.540L7 15h2V4.500c0-.28.220-.5.500-.5s.5.220.5.500V12h2V2.500c0-.28.220-.5.500-.5s.5.220.5.500V12h2V4c0-.28.220-.5.500-.5s.5.220.5.500v8h2V7c0-.28.220-.5.500-.5s.5.220.5.500v9z" fill="#fff"/></svg>
<svg class="abs" style="left:836.4000000000001px;top:848.9000000000001px" width="44.600" height="44.600" viewBox="-22.300 -22.300 44.600 44.600"><circle r="22.300" fill="#3c4043"/><rect x="-11.500" y="-8.500" width="23" height="17" rx="1.500" fill="none" stroke="#fff" stroke-width="2.200"/><path d="M0 -4.800l4.300 4.300h-2.700v4.200h-3.200v-4.200h-2.700z" fill="#fff"/></svg>
<svg class="abs" style="left:894.3000000000001px;top:848.9000000000001px" width="44.600" height="44.600" viewBox="-22.300 -22.300 44.600 44.600"><circle r="22.300" fill="#3c4043"/><circle cy="-6.800" r="2.400" fill="#fff"/><circle r="2.400" fill="#fff"/><circle cy="6.800" r="2.400" fill="#fff"/></svg>
<svg class="abs" style="left:952px;top:849.200px" width="62.600" height="44" viewBox="-31.300 -22 62.600 44"><rect x="-31.300" y="-22" width="62.600" height="44" rx="22" fill="#ea4335"/><path transform="translate(0 -1.500) scale(1.080)" d="M-12.500 3.500c-.6-.6-.6-1.600 0-2.200 3.300-3.100 7.700-4.900 12.500-4.900s9.200 1.800 12.500 4.900c.6.600.6 1.600 0 2.200l-2.300 2.300c-.5.500-1.400.6-2 .1-1-.8-2.100-1.500-3.300-2-.6-.3-1-.8-1-1.500v-2.500c-1.200-.4-2.500-.6-3.900-.6s-2.700.2-3.900.6v2.500c0 .7-.4 1.200-1 1.500-1.200.5-2.300 1.200-3.300 2-.6.500-1.500.4-2-.1z" fill="#fff"/></svg>
</body>
</html>
